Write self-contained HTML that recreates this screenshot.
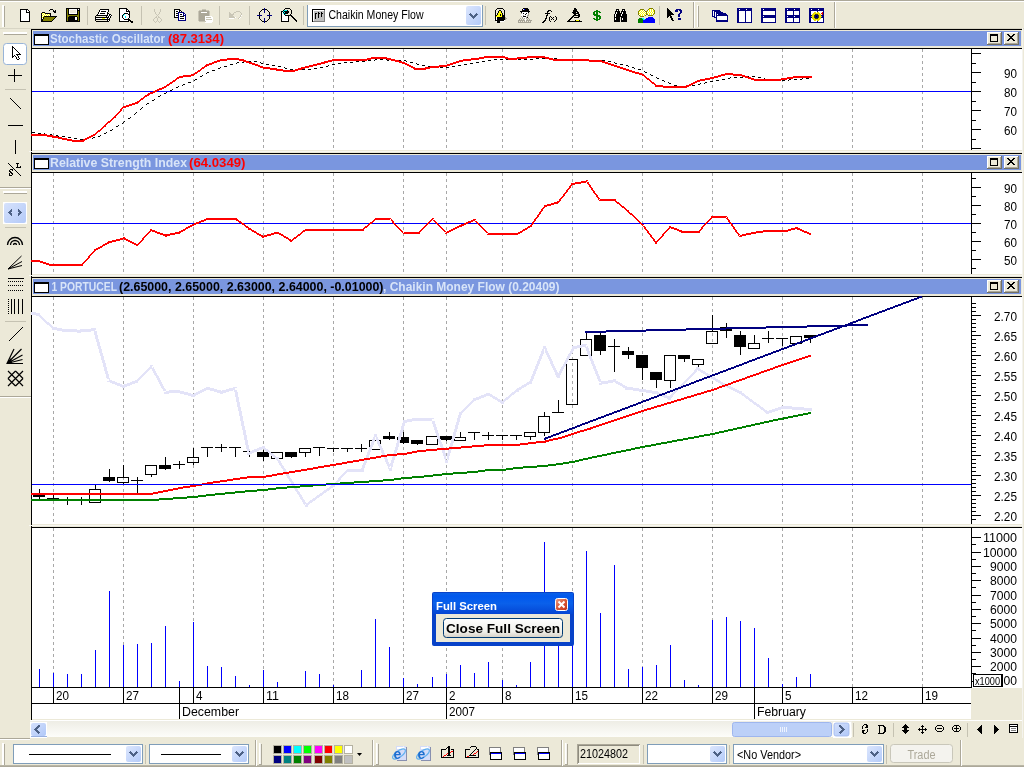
<!DOCTYPE html>
<html><head><meta charset="utf-8"><title>Chart</title>
<style>html,body{margin:0;padding:0;width:1024px;height:768px;overflow:hidden;background:#ECE9D8;}
svg{display:block;will-change:transform;font-family:"Liberation Sans",sans-serif;}</style></head>
<body><svg width="1024" height="768" viewBox="0 0 1024 768">
<rect x="0" y="0" width="1024" height="768" fill="#ECE9D8" />
<rect x="0" y="0" width="1024" height="1" fill="#ACA899"/>
<rect x="0" y="1" width="1024" height="1" fill="#FFFFFF"/>
<rect x="2" y="5" width="1" height="22" fill="#FFFFFF"/>
<rect x="3" y="5" width="1" height="22" fill="#FFFFFF"/>
<rect x="4" y="6" width="1" height="21" fill="#ACA899"/>
<rect x="834" y="2" width="1" height="26" fill="#ACA899"/>
<rect x="835" y="2" width="1" height="26" fill="#FFFFFF"/>
<rect x="693" y="2" width="1" height="26" fill="#ACA899"/>
<rect x="694" y="2" width="1" height="26" fill="#FFFFFF"/>
<rect x="697" y="5" width="1" height="22" fill="#FFFFFF"/>
<rect x="698" y="6" width="1" height="21" fill="#ACA899"/>
<rect x="87" y="6" width="1" height="19" fill="#C5C2B2"/>
<rect x="141" y="6" width="1" height="19" fill="#C5C2B2"/>
<rect x="219" y="6" width="1" height="19" fill="#C5C2B2"/>
<rect x="249" y="6" width="1" height="19" fill="#C5C2B2"/>
<rect x="303" y="6" width="1" height="19" fill="#C5C2B2"/>
<rect x="485" y="6" width="1" height="19" fill="#C5C2B2"/>
<rect x="659" y="6" width="1" height="19" fill="#C5C2B2"/>
<rect x="0" y="28" width="1024" height="1" fill="#D8D5C5"/>
<rect x="3" y="32" width="24" height="1" fill="#FFFFFF"/>
<rect x="3" y="33" width="24" height="1" fill="#FFFFFF"/>
<rect x="4" y="34" width="23" height="1" fill="#ACA899"/>
<rect x="0" y="187" width="31" height="1" fill="#ACA899"/>
<rect x="0" y="188" width="31" height="1" fill="#FFFFFF"/>
<rect x="3" y="191" width="24" height="1" fill="#FFFFFF"/>
<rect x="3" y="192" width="24" height="1" fill="#FFFFFF"/>
<rect x="4" y="193" width="23" height="1" fill="#ACA899"/>
<rect x="5" y="89" width="21" height="1" fill="#C5C2B2"/>
<rect x="5" y="227" width="21" height="1" fill="#C5C2B2"/>
<rect x="5" y="321" width="21" height="1" fill="#C5C2B2"/>
<rect x="0" y="396" width="31" height="1" fill="#ACA899"/>
<rect x="0" y="397" width="31" height="1" fill="#FFFFFF"/>
<rect x="32" y="29" width="990" height="690" fill="#FFFFFF" />
<rect x="31" y="29" width="1" height="691" fill="#000000"/>
<rect x="1022" y="28" width="1" height="710" fill="#F4F3EE"/>
<rect x="31" y="29" width="991" height="1" fill="#000000"/>
<rect x="32" y="30" width="990" height="19" fill="#ECE9D8" />
<rect x="33" y="31" width="988" height="15" fill="#7A96DF" />
<rect x="32" y="48" width="990" height="1" fill="#000000"/>
<rect x="34" y="34" width="15" height="11" fill="#000000" />
<rect x="35" y="36" width="13" height="8" fill="#FFFFFF" />
<rect x="987" y="32" width="15" height="13" fill="#716F64" />
<rect x="987" y="32" width="14" height="12" fill="#FFFFFF" />
<rect x="988" y="33" width="13" height="11" fill="#ACA899" />
<rect x="988" y="33" width="12" height="10" fill="#ECE9D8" />
<rect x="990" y="34" width="8" height="8" fill="#000000" />
<rect x="991" y="36" width="6" height="5" fill="#ECE9D8" />
<rect x="1004" y="32" width="15" height="13" fill="#716F64" />
<rect x="1004" y="32" width="14" height="12" fill="#FFFFFF" />
<rect x="1005" y="33" width="13" height="11" fill="#ACA899" />
<rect x="1005" y="33" width="12" height="10" fill="#ECE9D8" />
<rect x="1007" y="34" width="1" height="1" fill="#000000" />
<rect x="1008" y="34" width="1" height="1" fill="#000000" />
<rect x="1013" y="34" width="1" height="1" fill="#000000" />
<rect x="1014" y="34" width="1" height="1" fill="#000000" />
<rect x="1008" y="35" width="1" height="1" fill="#000000" />
<rect x="1009" y="35" width="1" height="1" fill="#000000" />
<rect x="1012" y="35" width="1" height="1" fill="#000000" />
<rect x="1013" y="35" width="1" height="1" fill="#000000" />
<rect x="1009" y="36" width="1" height="1" fill="#000000" />
<rect x="1010" y="36" width="1" height="1" fill="#000000" />
<rect x="1011" y="36" width="1" height="1" fill="#000000" />
<rect x="1012" y="36" width="1" height="1" fill="#000000" />
<rect x="1010" y="37" width="1" height="1" fill="#000000" />
<rect x="1011" y="37" width="1" height="1" fill="#000000" />
<rect x="1009" y="38" width="1" height="1" fill="#000000" />
<rect x="1010" y="38" width="1" height="1" fill="#000000" />
<rect x="1011" y="38" width="1" height="1" fill="#000000" />
<rect x="1012" y="38" width="1" height="1" fill="#000000" />
<rect x="1008" y="39" width="1" height="1" fill="#000000" />
<rect x="1009" y="39" width="1" height="1" fill="#000000" />
<rect x="1012" y="39" width="1" height="1" fill="#000000" />
<rect x="1013" y="39" width="1" height="1" fill="#000000" />
<rect x="1007" y="40" width="1" height="1" fill="#000000" />
<rect x="1008" y="40" width="1" height="1" fill="#000000" />
<rect x="1013" y="40" width="1" height="1" fill="#000000" />
<rect x="1014" y="40" width="1" height="1" fill="#000000" />
<text x="50" y="43" font-size="12.5" fill="#D8E4F8" font-weight="bold" text-anchor="start" textLength="115" lengthAdjust="spacingAndGlyphs" >Stochastic Oscillator</text>
<text x="168" y="43" font-size="12.5" fill="#FF0000" font-weight="bold" text-anchor="start" textLength="56" lengthAdjust="spacingAndGlyphs" >(87.3134)</text>
<rect x="32" y="150" width="990" height="3" fill="#ECE9D8" />
<rect x="29" y="151" width="993" height="1" fill="#F7F6F1"/>
<rect x="31" y="153" width="991" height="1" fill="#000000"/>
<rect x="32" y="154" width="990" height="19" fill="#ECE9D8" />
<rect x="33" y="155" width="988" height="15" fill="#7A96DF" />
<rect x="32" y="172" width="990" height="1" fill="#000000"/>
<rect x="34" y="158" width="15" height="11" fill="#000000" />
<rect x="35" y="160" width="13" height="8" fill="#FFFFFF" />
<rect x="987" y="156" width="15" height="13" fill="#716F64" />
<rect x="987" y="156" width="14" height="12" fill="#FFFFFF" />
<rect x="988" y="157" width="13" height="11" fill="#ACA899" />
<rect x="988" y="157" width="12" height="10" fill="#ECE9D8" />
<rect x="990" y="158" width="8" height="8" fill="#000000" />
<rect x="991" y="160" width="6" height="5" fill="#ECE9D8" />
<rect x="1004" y="156" width="15" height="13" fill="#716F64" />
<rect x="1004" y="156" width="14" height="12" fill="#FFFFFF" />
<rect x="1005" y="157" width="13" height="11" fill="#ACA899" />
<rect x="1005" y="157" width="12" height="10" fill="#ECE9D8" />
<rect x="1007" y="158" width="1" height="1" fill="#000000" />
<rect x="1008" y="158" width="1" height="1" fill="#000000" />
<rect x="1013" y="158" width="1" height="1" fill="#000000" />
<rect x="1014" y="158" width="1" height="1" fill="#000000" />
<rect x="1008" y="159" width="1" height="1" fill="#000000" />
<rect x="1009" y="159" width="1" height="1" fill="#000000" />
<rect x="1012" y="159" width="1" height="1" fill="#000000" />
<rect x="1013" y="159" width="1" height="1" fill="#000000" />
<rect x="1009" y="160" width="1" height="1" fill="#000000" />
<rect x="1010" y="160" width="1" height="1" fill="#000000" />
<rect x="1011" y="160" width="1" height="1" fill="#000000" />
<rect x="1012" y="160" width="1" height="1" fill="#000000" />
<rect x="1010" y="161" width="1" height="1" fill="#000000" />
<rect x="1011" y="161" width="1" height="1" fill="#000000" />
<rect x="1009" y="162" width="1" height="1" fill="#000000" />
<rect x="1010" y="162" width="1" height="1" fill="#000000" />
<rect x="1011" y="162" width="1" height="1" fill="#000000" />
<rect x="1012" y="162" width="1" height="1" fill="#000000" />
<rect x="1008" y="163" width="1" height="1" fill="#000000" />
<rect x="1009" y="163" width="1" height="1" fill="#000000" />
<rect x="1012" y="163" width="1" height="1" fill="#000000" />
<rect x="1013" y="163" width="1" height="1" fill="#000000" />
<rect x="1007" y="164" width="1" height="1" fill="#000000" />
<rect x="1008" y="164" width="1" height="1" fill="#000000" />
<rect x="1013" y="164" width="1" height="1" fill="#000000" />
<rect x="1014" y="164" width="1" height="1" fill="#000000" />
<text x="50" y="167" font-size="12.5" fill="#D8E4F8" font-weight="bold" text-anchor="start" textLength="137" lengthAdjust="spacingAndGlyphs" >Relative Strength Index</text>
<text x="189" y="167" font-size="12.5" fill="#FF0000" font-weight="bold" text-anchor="start" textLength="56.5" lengthAdjust="spacingAndGlyphs" >(64.0349)</text>
<rect x="32" y="274" width="990" height="3" fill="#ECE9D8" />
<rect x="29" y="275" width="993" height="1" fill="#F7F6F1"/>
<rect x="31" y="277" width="991" height="1" fill="#000000"/>
<rect x="32" y="278" width="990" height="19" fill="#ECE9D8" />
<rect x="33" y="279" width="988" height="15" fill="#7A96DF" />
<rect x="32" y="296" width="990" height="1" fill="#000000"/>
<rect x="34" y="282" width="15" height="11" fill="#000000" />
<rect x="35" y="284" width="13" height="8" fill="#FFFFFF" />
<rect x="987" y="280" width="15" height="13" fill="#716F64" />
<rect x="987" y="280" width="14" height="12" fill="#FFFFFF" />
<rect x="988" y="281" width="13" height="11" fill="#ACA899" />
<rect x="988" y="281" width="12" height="10" fill="#ECE9D8" />
<rect x="990" y="282" width="8" height="8" fill="#000000" />
<rect x="991" y="284" width="6" height="5" fill="#ECE9D8" />
<rect x="1004" y="280" width="15" height="13" fill="#716F64" />
<rect x="1004" y="280" width="14" height="12" fill="#FFFFFF" />
<rect x="1005" y="281" width="13" height="11" fill="#ACA899" />
<rect x="1005" y="281" width="12" height="10" fill="#ECE9D8" />
<rect x="1007" y="282" width="1" height="1" fill="#000000" />
<rect x="1008" y="282" width="1" height="1" fill="#000000" />
<rect x="1013" y="282" width="1" height="1" fill="#000000" />
<rect x="1014" y="282" width="1" height="1" fill="#000000" />
<rect x="1008" y="283" width="1" height="1" fill="#000000" />
<rect x="1009" y="283" width="1" height="1" fill="#000000" />
<rect x="1012" y="283" width="1" height="1" fill="#000000" />
<rect x="1013" y="283" width="1" height="1" fill="#000000" />
<rect x="1009" y="284" width="1" height="1" fill="#000000" />
<rect x="1010" y="284" width="1" height="1" fill="#000000" />
<rect x="1011" y="284" width="1" height="1" fill="#000000" />
<rect x="1012" y="284" width="1" height="1" fill="#000000" />
<rect x="1010" y="285" width="1" height="1" fill="#000000" />
<rect x="1011" y="285" width="1" height="1" fill="#000000" />
<rect x="1009" y="286" width="1" height="1" fill="#000000" />
<rect x="1010" y="286" width="1" height="1" fill="#000000" />
<rect x="1011" y="286" width="1" height="1" fill="#000000" />
<rect x="1012" y="286" width="1" height="1" fill="#000000" />
<rect x="1008" y="287" width="1" height="1" fill="#000000" />
<rect x="1009" y="287" width="1" height="1" fill="#000000" />
<rect x="1012" y="287" width="1" height="1" fill="#000000" />
<rect x="1013" y="287" width="1" height="1" fill="#000000" />
<rect x="1007" y="288" width="1" height="1" fill="#000000" />
<rect x="1008" y="288" width="1" height="1" fill="#000000" />
<rect x="1013" y="288" width="1" height="1" fill="#000000" />
<rect x="1014" y="288" width="1" height="1" fill="#000000" />
<text x="51.5" y="291" font-size="12.5" fill="#D8E4F8" font-weight="bold" text-anchor="start" textLength="65.5" lengthAdjust="spacingAndGlyphs" >1 PORTUCEL</text>
<text x="119" y="291" font-size="12.5" fill="#000000" font-weight="bold" text-anchor="start" textLength="264.5" lengthAdjust="spacingAndGlyphs" >(2.65000, 2.65000, 2.63000, 2.64000, -0.01000)</text>
<text x="383" y="291" font-size="12.5" fill="#D8E4F8" font-weight="bold" text-anchor="start" textLength="176.5" lengthAdjust="spacingAndGlyphs" >, Chaikin Money Flow (0.20409)</text>
<rect x="32" y="524" width="990" height="3" fill="#ECE9D8" />
<rect x="29" y="525" width="993" height="1" fill="#F7F6F1"/>
<rect x="31" y="527" width="991" height="1" fill="#000000"/>
<line x1="53.5" y1="49" x2="53.5" y2="150" stroke="#A8A8A8" stroke-width="1" stroke-dasharray="3,3"/>
<line x1="123.5" y1="49" x2="123.5" y2="150" stroke="#A8A8A8" stroke-width="1" stroke-dasharray="3,3"/>
<line x1="193.5" y1="49" x2="193.5" y2="150" stroke="#A8A8A8" stroke-width="1" stroke-dasharray="3,3"/>
<line x1="263.5" y1="49" x2="263.5" y2="150" stroke="#A8A8A8" stroke-width="1" stroke-dasharray="3,3"/>
<line x1="333.5" y1="49" x2="333.5" y2="150" stroke="#A8A8A8" stroke-width="1" stroke-dasharray="3,3"/>
<line x1="403.5" y1="49" x2="403.5" y2="150" stroke="#A8A8A8" stroke-width="1" stroke-dasharray="3,3"/>
<line x1="446.5" y1="49" x2="446.5" y2="150" stroke="#A8A8A8" stroke-width="1" stroke-dasharray="3,3"/>
<line x1="502.5" y1="49" x2="502.5" y2="150" stroke="#A8A8A8" stroke-width="1" stroke-dasharray="3,3"/>
<line x1="572.5" y1="49" x2="572.5" y2="150" stroke="#A8A8A8" stroke-width="1" stroke-dasharray="3,3"/>
<line x1="642.5" y1="49" x2="642.5" y2="150" stroke="#A8A8A8" stroke-width="1" stroke-dasharray="3,3"/>
<line x1="712.5" y1="49" x2="712.5" y2="150" stroke="#A8A8A8" stroke-width="1" stroke-dasharray="3,3"/>
<line x1="782.5" y1="49" x2="782.5" y2="150" stroke="#A8A8A8" stroke-width="1" stroke-dasharray="3,3"/>
<line x1="852.5" y1="49" x2="852.5" y2="150" stroke="#A8A8A8" stroke-width="1" stroke-dasharray="3,3"/>
<line x1="922.5" y1="49" x2="922.5" y2="150" stroke="#A8A8A8" stroke-width="1" stroke-dasharray="3,3"/>
<line x1="53.5" y1="173" x2="53.5" y2="274" stroke="#A8A8A8" stroke-width="1" stroke-dasharray="3,3"/>
<line x1="123.5" y1="173" x2="123.5" y2="274" stroke="#A8A8A8" stroke-width="1" stroke-dasharray="3,3"/>
<line x1="193.5" y1="173" x2="193.5" y2="274" stroke="#A8A8A8" stroke-width="1" stroke-dasharray="3,3"/>
<line x1="263.5" y1="173" x2="263.5" y2="274" stroke="#A8A8A8" stroke-width="1" stroke-dasharray="3,3"/>
<line x1="333.5" y1="173" x2="333.5" y2="274" stroke="#A8A8A8" stroke-width="1" stroke-dasharray="3,3"/>
<line x1="403.5" y1="173" x2="403.5" y2="274" stroke="#A8A8A8" stroke-width="1" stroke-dasharray="3,3"/>
<line x1="446.5" y1="173" x2="446.5" y2="274" stroke="#A8A8A8" stroke-width="1" stroke-dasharray="3,3"/>
<line x1="502.5" y1="173" x2="502.5" y2="274" stroke="#A8A8A8" stroke-width="1" stroke-dasharray="3,3"/>
<line x1="572.5" y1="173" x2="572.5" y2="274" stroke="#A8A8A8" stroke-width="1" stroke-dasharray="3,3"/>
<line x1="642.5" y1="173" x2="642.5" y2="274" stroke="#A8A8A8" stroke-width="1" stroke-dasharray="3,3"/>
<line x1="712.5" y1="173" x2="712.5" y2="274" stroke="#A8A8A8" stroke-width="1" stroke-dasharray="3,3"/>
<line x1="782.5" y1="173" x2="782.5" y2="274" stroke="#A8A8A8" stroke-width="1" stroke-dasharray="3,3"/>
<line x1="852.5" y1="173" x2="852.5" y2="274" stroke="#A8A8A8" stroke-width="1" stroke-dasharray="3,3"/>
<line x1="922.5" y1="173" x2="922.5" y2="274" stroke="#A8A8A8" stroke-width="1" stroke-dasharray="3,3"/>
<line x1="53.5" y1="297" x2="53.5" y2="524" stroke="#A8A8A8" stroke-width="1" stroke-dasharray="3,3"/>
<line x1="123.5" y1="297" x2="123.5" y2="524" stroke="#A8A8A8" stroke-width="1" stroke-dasharray="3,3"/>
<line x1="193.5" y1="297" x2="193.5" y2="524" stroke="#A8A8A8" stroke-width="1" stroke-dasharray="3,3"/>
<line x1="263.5" y1="297" x2="263.5" y2="524" stroke="#A8A8A8" stroke-width="1" stroke-dasharray="3,3"/>
<line x1="333.5" y1="297" x2="333.5" y2="524" stroke="#A8A8A8" stroke-width="1" stroke-dasharray="3,3"/>
<line x1="403.5" y1="297" x2="403.5" y2="524" stroke="#A8A8A8" stroke-width="1" stroke-dasharray="3,3"/>
<line x1="446.5" y1="297" x2="446.5" y2="524" stroke="#A8A8A8" stroke-width="1" stroke-dasharray="3,3"/>
<line x1="502.5" y1="297" x2="502.5" y2="524" stroke="#A8A8A8" stroke-width="1" stroke-dasharray="3,3"/>
<line x1="572.5" y1="297" x2="572.5" y2="524" stroke="#A8A8A8" stroke-width="1" stroke-dasharray="3,3"/>
<line x1="642.5" y1="297" x2="642.5" y2="524" stroke="#A8A8A8" stroke-width="1" stroke-dasharray="3,3"/>
<line x1="712.5" y1="297" x2="712.5" y2="524" stroke="#A8A8A8" stroke-width="1" stroke-dasharray="3,3"/>
<line x1="782.5" y1="297" x2="782.5" y2="524" stroke="#A8A8A8" stroke-width="1" stroke-dasharray="3,3"/>
<line x1="852.5" y1="297" x2="852.5" y2="524" stroke="#A8A8A8" stroke-width="1" stroke-dasharray="3,3"/>
<line x1="922.5" y1="297" x2="922.5" y2="524" stroke="#A8A8A8" stroke-width="1" stroke-dasharray="3,3"/>
<line x1="53.5" y1="528" x2="53.5" y2="687" stroke="#A8A8A8" stroke-width="1" stroke-dasharray="3,3"/>
<line x1="123.5" y1="528" x2="123.5" y2="687" stroke="#A8A8A8" stroke-width="1" stroke-dasharray="3,3"/>
<line x1="193.5" y1="528" x2="193.5" y2="687" stroke="#A8A8A8" stroke-width="1" stroke-dasharray="3,3"/>
<line x1="263.5" y1="528" x2="263.5" y2="687" stroke="#A8A8A8" stroke-width="1" stroke-dasharray="3,3"/>
<line x1="333.5" y1="528" x2="333.5" y2="687" stroke="#A8A8A8" stroke-width="1" stroke-dasharray="3,3"/>
<line x1="403.5" y1="528" x2="403.5" y2="687" stroke="#A8A8A8" stroke-width="1" stroke-dasharray="3,3"/>
<line x1="446.5" y1="528" x2="446.5" y2="687" stroke="#A8A8A8" stroke-width="1" stroke-dasharray="3,3"/>
<line x1="502.5" y1="528" x2="502.5" y2="687" stroke="#A8A8A8" stroke-width="1" stroke-dasharray="3,3"/>
<line x1="572.5" y1="528" x2="572.5" y2="687" stroke="#A8A8A8" stroke-width="1" stroke-dasharray="3,3"/>
<line x1="642.5" y1="528" x2="642.5" y2="687" stroke="#A8A8A8" stroke-width="1" stroke-dasharray="3,3"/>
<line x1="712.5" y1="528" x2="712.5" y2="687" stroke="#A8A8A8" stroke-width="1" stroke-dasharray="3,3"/>
<line x1="782.5" y1="528" x2="782.5" y2="687" stroke="#A8A8A8" stroke-width="1" stroke-dasharray="3,3"/>
<line x1="852.5" y1="528" x2="852.5" y2="687" stroke="#A8A8A8" stroke-width="1" stroke-dasharray="3,3"/>
<line x1="922.5" y1="528" x2="922.5" y2="687" stroke="#A8A8A8" stroke-width="1" stroke-dasharray="3,3"/>
<rect x="971" y="49" width="1" height="101" fill="#000000"/>
<rect x="972" y="49" width="50" height="101" fill="#FFFFFF" />
<rect x="972" y="53" width="9" height="1" fill="#000000"/>
<rect x="972" y="63" width="4" height="1" fill="#000000"/>
<rect x="972" y="72" width="9" height="1" fill="#000000"/>
<rect x="972" y="82" width="4" height="1" fill="#000000"/>
<rect x="972" y="91" width="9" height="1" fill="#000000"/>
<rect x="972" y="101" width="4" height="1" fill="#000000"/>
<rect x="972" y="110" width="9" height="1" fill="#000000"/>
<rect x="972" y="120" width="4" height="1" fill="#000000"/>
<rect x="972" y="129" width="9" height="1" fill="#000000"/>
<rect x="972" y="139" width="4" height="1" fill="#000000"/>
<rect x="972" y="148" width="9" height="1" fill="#000000"/>
<text x="1017" y="78" font-size="12" fill="#000" font-weight="normal" text-anchor="end" textLength="13" lengthAdjust="spacingAndGlyphs" >90</text>
<text x="1017" y="97" font-size="12" fill="#000" font-weight="normal" text-anchor="end" textLength="13" lengthAdjust="spacingAndGlyphs" >80</text>
<text x="1017" y="116" font-size="12" fill="#000" font-weight="normal" text-anchor="end" textLength="13" lengthAdjust="spacingAndGlyphs" >70</text>
<text x="1017" y="135" font-size="12" fill="#000" font-weight="normal" text-anchor="end" textLength="13" lengthAdjust="spacingAndGlyphs" >60</text>
<rect x="971" y="173" width="1" height="101" fill="#000000"/>
<rect x="972" y="173" width="50" height="101" fill="#FFFFFF" />
<rect x="972" y="178" width="4" height="1" fill="#000000"/>
<rect x="972" y="187" width="9" height="1" fill="#000000"/>
<rect x="972" y="196" width="4" height="1" fill="#000000"/>
<rect x="972" y="205" width="9" height="1" fill="#000000"/>
<rect x="972" y="214" width="4" height="1" fill="#000000"/>
<rect x="972" y="223" width="9" height="1" fill="#000000"/>
<rect x="972" y="232" width="4" height="1" fill="#000000"/>
<rect x="972" y="241" width="9" height="1" fill="#000000"/>
<rect x="972" y="250" width="4" height="1" fill="#000000"/>
<rect x="972" y="259" width="9" height="1" fill="#000000"/>
<rect x="972" y="268" width="4" height="1" fill="#000000"/>
<text x="1017" y="193" font-size="12" fill="#000" font-weight="normal" text-anchor="end" textLength="13" lengthAdjust="spacingAndGlyphs" >90</text>
<text x="1017" y="211" font-size="12" fill="#000" font-weight="normal" text-anchor="end" textLength="13" lengthAdjust="spacingAndGlyphs" >80</text>
<text x="1017" y="229" font-size="12" fill="#000" font-weight="normal" text-anchor="end" textLength="13" lengthAdjust="spacingAndGlyphs" >70</text>
<text x="1017" y="247" font-size="12" fill="#000" font-weight="normal" text-anchor="end" textLength="13" lengthAdjust="spacingAndGlyphs" >60</text>
<text x="1017" y="265" font-size="12" fill="#000" font-weight="normal" text-anchor="end" textLength="13" lengthAdjust="spacingAndGlyphs" >50</text>
<rect x="971" y="297" width="1" height="227" fill="#000000"/>
<rect x="972" y="297" width="50" height="227" fill="#FFFFFF" />
<rect x="972" y="303" width="4" height="1" fill="#000000"/>
<rect x="972" y="307" width="4" height="1" fill="#000000"/>
<rect x="972" y="311" width="4" height="1" fill="#000000"/>
<rect x="972" y="315" width="9" height="1" fill="#000000"/>
<rect x="972" y="319" width="4" height="1" fill="#000000"/>
<rect x="972" y="323" width="4" height="1" fill="#000000"/>
<rect x="972" y="327" width="4" height="1" fill="#000000"/>
<rect x="972" y="331" width="4" height="1" fill="#000000"/>
<rect x="972" y="335" width="9" height="1" fill="#000000"/>
<rect x="972" y="339" width="4" height="1" fill="#000000"/>
<rect x="972" y="343" width="4" height="1" fill="#000000"/>
<rect x="972" y="347" width="4" height="1" fill="#000000"/>
<rect x="972" y="351" width="4" height="1" fill="#000000"/>
<rect x="972" y="355" width="9" height="1" fill="#000000"/>
<rect x="972" y="359" width="4" height="1" fill="#000000"/>
<rect x="972" y="363" width="4" height="1" fill="#000000"/>
<rect x="972" y="367" width="4" height="1" fill="#000000"/>
<rect x="972" y="371" width="4" height="1" fill="#000000"/>
<rect x="972" y="375" width="9" height="1" fill="#000000"/>
<rect x="972" y="379" width="4" height="1" fill="#000000"/>
<rect x="972" y="383" width="4" height="1" fill="#000000"/>
<rect x="972" y="387" width="4" height="1" fill="#000000"/>
<rect x="972" y="391" width="4" height="1" fill="#000000"/>
<rect x="972" y="395" width="9" height="1" fill="#000000"/>
<rect x="972" y="399" width="4" height="1" fill="#000000"/>
<rect x="972" y="403" width="4" height="1" fill="#000000"/>
<rect x="972" y="407" width="4" height="1" fill="#000000"/>
<rect x="972" y="411" width="4" height="1" fill="#000000"/>
<rect x="972" y="415" width="9" height="1" fill="#000000"/>
<rect x="972" y="419" width="4" height="1" fill="#000000"/>
<rect x="972" y="423" width="4" height="1" fill="#000000"/>
<rect x="972" y="427" width="4" height="1" fill="#000000"/>
<rect x="972" y="431" width="4" height="1" fill="#000000"/>
<rect x="972" y="435" width="9" height="1" fill="#000000"/>
<rect x="972" y="439" width="4" height="1" fill="#000000"/>
<rect x="972" y="443" width="4" height="1" fill="#000000"/>
<rect x="972" y="447" width="4" height="1" fill="#000000"/>
<rect x="972" y="451" width="4" height="1" fill="#000000"/>
<rect x="972" y="455" width="9" height="1" fill="#000000"/>
<rect x="972" y="459" width="4" height="1" fill="#000000"/>
<rect x="972" y="463" width="4" height="1" fill="#000000"/>
<rect x="972" y="467" width="4" height="1" fill="#000000"/>
<rect x="972" y="471" width="4" height="1" fill="#000000"/>
<rect x="972" y="475" width="9" height="1" fill="#000000"/>
<rect x="972" y="479" width="4" height="1" fill="#000000"/>
<rect x="972" y="483" width="4" height="1" fill="#000000"/>
<rect x="972" y="487" width="4" height="1" fill="#000000"/>
<rect x="972" y="491" width="4" height="1" fill="#000000"/>
<rect x="972" y="495" width="9" height="1" fill="#000000"/>
<rect x="972" y="499" width="4" height="1" fill="#000000"/>
<rect x="972" y="503" width="4" height="1" fill="#000000"/>
<rect x="972" y="507" width="4" height="1" fill="#000000"/>
<rect x="972" y="511" width="4" height="1" fill="#000000"/>
<rect x="972" y="515" width="9" height="1" fill="#000000"/>
<rect x="972" y="519" width="4" height="1" fill="#000000"/>
<text x="1017" y="321" font-size="12" fill="#000" font-weight="normal" text-anchor="end" textLength="23" lengthAdjust="spacingAndGlyphs" >2.70</text>
<text x="1017" y="341" font-size="12" fill="#000" font-weight="normal" text-anchor="end" textLength="23" lengthAdjust="spacingAndGlyphs" >2.65</text>
<text x="1017" y="361" font-size="12" fill="#000" font-weight="normal" text-anchor="end" textLength="23" lengthAdjust="spacingAndGlyphs" >2.60</text>
<text x="1017" y="381" font-size="12" fill="#000" font-weight="normal" text-anchor="end" textLength="23" lengthAdjust="spacingAndGlyphs" >2.55</text>
<text x="1017" y="401" font-size="12" fill="#000" font-weight="normal" text-anchor="end" textLength="23" lengthAdjust="spacingAndGlyphs" >2.50</text>
<text x="1017" y="421" font-size="12" fill="#000" font-weight="normal" text-anchor="end" textLength="23" lengthAdjust="spacingAndGlyphs" >2.45</text>
<text x="1017" y="441" font-size="12" fill="#000" font-weight="normal" text-anchor="end" textLength="23" lengthAdjust="spacingAndGlyphs" >2.40</text>
<text x="1017" y="461" font-size="12" fill="#000" font-weight="normal" text-anchor="end" textLength="23" lengthAdjust="spacingAndGlyphs" >2.35</text>
<text x="1017" y="481" font-size="12" fill="#000" font-weight="normal" text-anchor="end" textLength="23" lengthAdjust="spacingAndGlyphs" >2.30</text>
<text x="1017" y="501" font-size="12" fill="#000" font-weight="normal" text-anchor="end" textLength="23" lengthAdjust="spacingAndGlyphs" >2.25</text>
<text x="1017" y="521" font-size="12" fill="#000" font-weight="normal" text-anchor="end" textLength="23" lengthAdjust="spacingAndGlyphs" >2.20</text>
<rect x="971" y="528" width="1" height="160" fill="#000000"/>
<rect x="972" y="528" width="50" height="160" fill="#FFFFFF" />
<rect x="972" y="537" width="9" height="1" fill="#000000"/>
<rect x="972" y="544" width="4" height="1" fill="#000000"/>
<rect x="972" y="552" width="9" height="1" fill="#000000"/>
<rect x="972" y="559" width="4" height="1" fill="#000000"/>
<rect x="972" y="566" width="9" height="1" fill="#000000"/>
<rect x="972" y="573" width="4" height="1" fill="#000000"/>
<rect x="972" y="580" width="9" height="1" fill="#000000"/>
<rect x="972" y="587" width="4" height="1" fill="#000000"/>
<rect x="972" y="595" width="9" height="1" fill="#000000"/>
<rect x="972" y="602" width="4" height="1" fill="#000000"/>
<rect x="972" y="609" width="9" height="1" fill="#000000"/>
<rect x="972" y="616" width="4" height="1" fill="#000000"/>
<rect x="972" y="623" width="9" height="1" fill="#000000"/>
<rect x="972" y="630" width="4" height="1" fill="#000000"/>
<rect x="972" y="638" width="9" height="1" fill="#000000"/>
<rect x="972" y="645" width="4" height="1" fill="#000000"/>
<rect x="972" y="652" width="9" height="1" fill="#000000"/>
<rect x="972" y="659" width="4" height="1" fill="#000000"/>
<rect x="972" y="666" width="9" height="1" fill="#000000"/>
<rect x="972" y="673" width="4" height="1" fill="#000000"/>
<rect x="972" y="681" width="9" height="1" fill="#000000"/>
<text x="1017" y="541.5" font-size="12" fill="#000" font-weight="normal" text-anchor="end" textLength="34" lengthAdjust="spacingAndGlyphs" >11000</text>
<text x="1017" y="556.5" font-size="12" fill="#000" font-weight="normal" text-anchor="end" textLength="34" lengthAdjust="spacingAndGlyphs" >10000</text>
<text x="1017" y="570.5" font-size="12" fill="#000" font-weight="normal" text-anchor="end" textLength="27" lengthAdjust="spacingAndGlyphs" >9000</text>
<text x="1017" y="584.5" font-size="12" fill="#000" font-weight="normal" text-anchor="end" textLength="27" lengthAdjust="spacingAndGlyphs" >8000</text>
<text x="1017" y="599.5" font-size="12" fill="#000" font-weight="normal" text-anchor="end" textLength="27" lengthAdjust="spacingAndGlyphs" >7000</text>
<text x="1017" y="613.5" font-size="12" fill="#000" font-weight="normal" text-anchor="end" textLength="27" lengthAdjust="spacingAndGlyphs" >6000</text>
<text x="1017" y="627.5" font-size="12" fill="#000" font-weight="normal" text-anchor="end" textLength="27" lengthAdjust="spacingAndGlyphs" >5000</text>
<text x="1017" y="642.5" font-size="12" fill="#000" font-weight="normal" text-anchor="end" textLength="27" lengthAdjust="spacingAndGlyphs" >4000</text>
<text x="1017" y="656.5" font-size="12" fill="#000" font-weight="normal" text-anchor="end" textLength="27" lengthAdjust="spacingAndGlyphs" >3000</text>
<text x="1017" y="670.5" font-size="12" fill="#000" font-weight="normal" text-anchor="end" textLength="27" lengthAdjust="spacingAndGlyphs" >2000</text>
<text x="1017" y="685" font-size="12" fill="#000" font-weight="normal" text-anchor="end" textLength="27" lengthAdjust="spacingAndGlyphs" >1000</text>
<rect x="973" y="674" width="29" height="13" fill="#000000" />
<rect x="974" y="675" width="27" height="11" fill="#FFFFFF" />
<text x="987.5" y="684.5" font-size="10" fill="#000" font-weight="normal" text-anchor="middle" textLength="25" lengthAdjust="spacingAndGlyphs" >x1000</text>
<rect x="1002" y="674" width="1" height="13" fill="#000000"/>
<rect x="32" y="687" width="939" height="1" fill="#000000"/>
<rect x="32" y="703" width="939" height="1" fill="#000000"/>
<rect x="53" y="688" width="1" height="15" fill="#000000"/>
<text x="56" y="700" font-size="12" fill="#000" font-weight="normal" text-anchor="start" textLength="13.0" lengthAdjust="spacingAndGlyphs" >20</text>
<rect x="123" y="688" width="1" height="15" fill="#000000"/>
<text x="126" y="700" font-size="12" fill="#000" font-weight="normal" text-anchor="start" textLength="13.0" lengthAdjust="spacingAndGlyphs" >27</text>
<rect x="193" y="688" width="1" height="15" fill="#000000"/>
<text x="196" y="700" font-size="12" fill="#000" font-weight="normal" text-anchor="start" textLength="6.5" lengthAdjust="spacingAndGlyphs" >4</text>
<rect x="263" y="688" width="1" height="15" fill="#000000"/>
<text x="266" y="700" font-size="12" fill="#000" font-weight="normal" text-anchor="start" textLength="13.0" lengthAdjust="spacingAndGlyphs" >11</text>
<rect x="333" y="688" width="1" height="15" fill="#000000"/>
<text x="336" y="700" font-size="12" fill="#000" font-weight="normal" text-anchor="start" textLength="13.0" lengthAdjust="spacingAndGlyphs" >18</text>
<rect x="403" y="688" width="1" height="15" fill="#000000"/>
<text x="406" y="700" font-size="12" fill="#000" font-weight="normal" text-anchor="start" textLength="13.0" lengthAdjust="spacingAndGlyphs" >27</text>
<rect x="446" y="688" width="1" height="15" fill="#000000"/>
<text x="449" y="700" font-size="12" fill="#000" font-weight="normal" text-anchor="start" textLength="6.5" lengthAdjust="spacingAndGlyphs" >2</text>
<rect x="502" y="688" width="1" height="15" fill="#000000"/>
<text x="505" y="700" font-size="12" fill="#000" font-weight="normal" text-anchor="start" textLength="6.5" lengthAdjust="spacingAndGlyphs" >8</text>
<rect x="572" y="688" width="1" height="15" fill="#000000"/>
<text x="575" y="700" font-size="12" fill="#000" font-weight="normal" text-anchor="start" textLength="13.0" lengthAdjust="spacingAndGlyphs" >15</text>
<rect x="642" y="688" width="1" height="15" fill="#000000"/>
<text x="645" y="700" font-size="12" fill="#000" font-weight="normal" text-anchor="start" textLength="13.0" lengthAdjust="spacingAndGlyphs" >22</text>
<rect x="712" y="688" width="1" height="15" fill="#000000"/>
<text x="715" y="700" font-size="12" fill="#000" font-weight="normal" text-anchor="start" textLength="13.0" lengthAdjust="spacingAndGlyphs" >29</text>
<rect x="782" y="688" width="1" height="15" fill="#000000"/>
<text x="785" y="700" font-size="12" fill="#000" font-weight="normal" text-anchor="start" textLength="6.5" lengthAdjust="spacingAndGlyphs" >5</text>
<rect x="852" y="688" width="1" height="15" fill="#000000"/>
<text x="855" y="700" font-size="12" fill="#000" font-weight="normal" text-anchor="start" textLength="13.0" lengthAdjust="spacingAndGlyphs" >12</text>
<rect x="922" y="688" width="1" height="15" fill="#000000"/>
<text x="925" y="700" font-size="12" fill="#000" font-weight="normal" text-anchor="start" textLength="13.0" lengthAdjust="spacingAndGlyphs" >19</text>
<rect x="179" y="688" width="1" height="31" fill="#000000"/>
<text x="182" y="716" font-size="12" fill="#000" font-weight="normal" text-anchor="start" textLength="57" lengthAdjust="spacingAndGlyphs" >December</text>
<rect x="446" y="688" width="1" height="31" fill="#000000"/>
<text x="449" y="716" font-size="12" fill="#000" font-weight="normal" text-anchor="start" textLength="26" lengthAdjust="spacingAndGlyphs" >2007</text>
<rect x="754" y="688" width="1" height="31" fill="#000000"/>
<text x="757" y="716" font-size="12" fill="#000" font-weight="normal" text-anchor="start" textLength="49" lengthAdjust="spacingAndGlyphs" >February</text>
<rect x="971" y="688" width="51" height="31" fill="#ECE9D8" />
<rect x="971" y="528" width="1" height="160" fill="#000000"/>
<defs><linearGradient id="trk" x1="0" y1="0" x2="0" y2="1"><stop offset="0" stop-color="#EEEDE5"/><stop offset="1" stop-color="#FDFDFA"/></linearGradient></defs>
<rect x="30" y="721" width="822" height="16" fill="url(#trk)" />
<rect x="30" y="720" width="992" height="1" fill="#FFFFFF"/>
<rect x="0" y="738" width="30" height="1" fill="#ACA899"/>
<rect x="0" y="739" width="30" height="1" fill="#FFFFFF"/>
<defs><linearGradient id="sbb" x1="0" y1="0" x2="1" y2="1"><stop offset="0" stop-color="#D4E0FC"/><stop offset="1" stop-color="#B0C8F8"/></linearGradient></defs>
<rect x="30" y="722" width="17" height="16" fill="#FFFFFF" />
<rect x="31" y="723" width="15" height="13" rx="2" fill="url(#sbb)"/>
<rect x="31" y="736" width="16" height="1" fill="#98B0E0"/>
<path d="M39.5,725.5 L35.5,729.5 L39.5,733.5" stroke="#4D6185" stroke-width="2" fill="none" shape-rendering="crispEdges"/>
<rect x="732.5" y="722.5" width="99" height="14" rx="2" fill="#BCD0F8" stroke="#9EB6EE"/>
<rect x="780" y="727" width="1" height="5" fill="#EEF3FE"/>
<rect x="782" y="727" width="1" height="5" fill="#EEF3FE"/>
<rect x="784" y="727" width="1" height="5" fill="#EEF3FE"/>
<rect x="786" y="727" width="1" height="5" fill="#EEF3FE"/>
<rect x="833" y="722" width="18" height="16" fill="#FFFFFF" />
<rect x="834" y="723" width="15" height="13" rx="2" fill="url(#sbb)" stroke="#9EB6EE" stroke-width="0.8"/>
<path d="M839.5,725.5 L843.5,729.5 L839.5,733.5" stroke="#4D6185" stroke-width="2" fill="none" shape-rendering="crispEdges"/>
<rect x="0" y="765" width="1024" height="1" fill="#B9B6A6"/>
<rect x="0" y="766" width="1024" height="1" fill="#ACA899"/>
<rect x="0" y="767" width="1024" height="1" fill="#FFFFFF"/>
<rect x="2" y="743" width="1" height="22" fill="#FFFFFF"/>
<rect x="3" y="743" width="1" height="22" fill="#FFFFFF"/>
<rect x="4" y="744" width="1" height="21" fill="#ACA899"/>
<defs><linearGradient id="cbg" x1="0" y1="0" x2="1" y2="1"><stop offset="0" stop-color="#DCE6FD"/><stop offset="1" stop-color="#B4CBF9"/></linearGradient></defs>
<rect x="13" y="744" width="130" height="20" fill="#7F9DB9" />
<rect x="14" y="745" width="128" height="18" fill="#FFFFFF" />
<rect x="126" y="746" width="15" height="16" rx="2" fill="url(#cbg)"/>
<rect x="130" y="751" width="1" height="1" fill="#4D6185"/>
<rect x="136" y="751" width="1" height="1" fill="#4D6185"/>
<rect x="129" y="752" width="1" height="1" fill="#4D6185"/>
<rect x="130" y="752" width="1" height="1" fill="#4D6185"/>
<rect x="131" y="752" width="1" height="1" fill="#4D6185"/>
<rect x="135" y="752" width="1" height="1" fill="#4D6185"/>
<rect x="136" y="752" width="1" height="1" fill="#4D6185"/>
<rect x="137" y="752" width="1" height="1" fill="#4D6185"/>
<rect x="130" y="753" width="1" height="1" fill="#4D6185"/>
<rect x="131" y="753" width="1" height="1" fill="#4D6185"/>
<rect x="132" y="753" width="1" height="1" fill="#4D6185"/>
<rect x="134" y="753" width="1" height="1" fill="#4D6185"/>
<rect x="135" y="753" width="1" height="1" fill="#4D6185"/>
<rect x="136" y="753" width="1" height="1" fill="#4D6185"/>
<rect x="131" y="754" width="1" height="1" fill="#4D6185"/>
<rect x="132" y="754" width="1" height="1" fill="#4D6185"/>
<rect x="133" y="754" width="1" height="1" fill="#4D6185"/>
<rect x="134" y="754" width="1" height="1" fill="#4D6185"/>
<rect x="135" y="754" width="1" height="1" fill="#4D6185"/>
<rect x="132" y="755" width="1" height="1" fill="#4D6185"/>
<rect x="133" y="755" width="1" height="1" fill="#4D6185"/>
<rect x="134" y="755" width="1" height="1" fill="#4D6185"/>
<rect x="133" y="756" width="1" height="1" fill="#4D6185"/>
<rect x="29" y="754" width="82" height="1" fill="#000000"/>
<rect x="145" y="745" width="1" height="19" fill="#C5C2B2"/>
<rect x="149" y="744" width="100" height="20" fill="#7F9DB9" />
<rect x="150" y="745" width="98" height="18" fill="#FFFFFF" />
<rect x="232" y="746" width="15" height="16" rx="2" fill="url(#cbg)"/>
<rect x="236" y="751" width="1" height="1" fill="#4D6185"/>
<rect x="242" y="751" width="1" height="1" fill="#4D6185"/>
<rect x="235" y="752" width="1" height="1" fill="#4D6185"/>
<rect x="236" y="752" width="1" height="1" fill="#4D6185"/>
<rect x="237" y="752" width="1" height="1" fill="#4D6185"/>
<rect x="241" y="752" width="1" height="1" fill="#4D6185"/>
<rect x="242" y="752" width="1" height="1" fill="#4D6185"/>
<rect x="243" y="752" width="1" height="1" fill="#4D6185"/>
<rect x="236" y="753" width="1" height="1" fill="#4D6185"/>
<rect x="237" y="753" width="1" height="1" fill="#4D6185"/>
<rect x="238" y="753" width="1" height="1" fill="#4D6185"/>
<rect x="240" y="753" width="1" height="1" fill="#4D6185"/>
<rect x="241" y="753" width="1" height="1" fill="#4D6185"/>
<rect x="242" y="753" width="1" height="1" fill="#4D6185"/>
<rect x="237" y="754" width="1" height="1" fill="#4D6185"/>
<rect x="238" y="754" width="1" height="1" fill="#4D6185"/>
<rect x="239" y="754" width="1" height="1" fill="#4D6185"/>
<rect x="240" y="754" width="1" height="1" fill="#4D6185"/>
<rect x="241" y="754" width="1" height="1" fill="#4D6185"/>
<rect x="238" y="755" width="1" height="1" fill="#4D6185"/>
<rect x="239" y="755" width="1" height="1" fill="#4D6185"/>
<rect x="240" y="755" width="1" height="1" fill="#4D6185"/>
<rect x="239" y="756" width="1" height="1" fill="#4D6185"/>
<rect x="161" y="754" width="60" height="1" fill="#000000"/>
<rect x="255" y="740" width="1" height="26" fill="#ACA899"/>
<rect x="256" y="740" width="1" height="26" fill="#FFFFFF"/>
<rect x="259" y="743" width="1" height="22" fill="#FFFFFF"/>
<rect x="260" y="743" width="1" height="22" fill="#F4F3EE"/>
<rect x="261" y="744" width="1" height="21" fill="#ACA899"/>
<rect x="259" y="764" width="3" height="1" fill="#ACA899"/>
<rect x="273" y="745" width="9" height="9" fill="#B5B2A2" />
<rect x="274" y="746" width="7" height="7" fill="#000000" />
<rect x="273" y="755" width="9" height="9" fill="#B5B2A2" />
<rect x="274" y="756" width="7" height="7" fill="#000080" />
<rect x="283" y="745" width="9" height="9" fill="#B5B2A2" />
<rect x="284" y="746" width="7" height="7" fill="#0000FF" />
<rect x="283" y="755" width="9" height="9" fill="#B5B2A2" />
<rect x="284" y="756" width="7" height="7" fill="#008080" />
<rect x="293" y="745" width="9" height="9" fill="#B5B2A2" />
<rect x="294" y="746" width="7" height="7" fill="#00FFFF" />
<rect x="293" y="755" width="9" height="9" fill="#B5B2A2" />
<rect x="294" y="756" width="7" height="7" fill="#008000" />
<rect x="303" y="745" width="9" height="9" fill="#B5B2A2" />
<rect x="304" y="746" width="7" height="7" fill="#00FF00" />
<rect x="303" y="755" width="9" height="9" fill="#B5B2A2" />
<rect x="304" y="756" width="7" height="7" fill="#800080" />
<rect x="314" y="745" width="9" height="9" fill="#B5B2A2" />
<rect x="315" y="746" width="7" height="7" fill="#FF00FF" />
<rect x="314" y="755" width="9" height="9" fill="#B5B2A2" />
<rect x="315" y="756" width="7" height="7" fill="#800000" />
<rect x="324" y="745" width="9" height="9" fill="#B5B2A2" />
<rect x="325" y="746" width="7" height="7" fill="#FF0000" />
<rect x="324" y="755" width="9" height="9" fill="#B5B2A2" />
<rect x="325" y="756" width="7" height="7" fill="#808000" />
<rect x="334" y="745" width="9" height="9" fill="#B5B2A2" />
<rect x="335" y="746" width="7" height="7" fill="#FFFF00" />
<rect x="334" y="755" width="9" height="9" fill="#B5B2A2" />
<rect x="335" y="756" width="7" height="7" fill="#808080" />
<rect x="344" y="745" width="9" height="9" fill="#B5B2A2" />
<rect x="345" y="746" width="7" height="7" fill="#FFFFFF" />
<rect x="344" y="755" width="9" height="9" fill="#B5B2A2" />
<rect x="345" y="756" width="7" height="7" fill="#C0C0C0" />
<rect x="323.5" y="744.5" width="9" height="9" fill="none" stroke="#FFFFFF" stroke-width="1" stroke-dasharray="1,1"/>
<path d="M357,753 L362,753 L359.5,756 Z" fill="#000"/>
<rect x="372" y="740" width="1" height="26" fill="#ACA899"/>
<rect x="373" y="740" width="1" height="26" fill="#FFFFFF"/>
<rect x="376" y="743" width="1" height="22" fill="#FFFFFF"/>
<rect x="377" y="743" width="1" height="22" fill="#F4F3EE"/>
<rect x="378" y="744" width="1" height="21" fill="#ACA899"/>
<rect x="376" y="764" width="3" height="1" fill="#ACA899"/>
<rect x="561" y="740" width="1" height="26" fill="#ACA899"/>
<rect x="562" y="740" width="1" height="26" fill="#FFFFFF"/>
<rect x="565" y="743" width="1" height="22" fill="#FFFFFF"/>
<rect x="566" y="743" width="1" height="22" fill="#F4F3EE"/>
<rect x="567" y="744" width="1" height="21" fill="#ACA899"/>
<rect x="565" y="764" width="3" height="1" fill="#ACA899"/>
<rect x="577" y="744" width="63" height="20" fill="#ACA899" />
<rect x="578" y="745" width="62" height="19" fill="#FFFFFF" />
<rect x="578" y="745" width="61" height="18" fill="#8E8B7E" />
<rect x="579" y="746" width="60" height="17" fill="#ECE9D8" />
<text x="580" y="758" font-size="12" fill="#000" font-weight="normal" text-anchor="start" textLength="48" lengthAdjust="spacingAndGlyphs" >21024802</text>
<rect x="643" y="745" width="1" height="19" fill="#C5C2B2"/>
<rect x="647" y="744" width="80" height="20" fill="#7F9DB9" />
<rect x="648" y="745" width="78" height="18" fill="#FFFFFF" />
<rect x="710" y="746" width="15" height="16" rx="2" fill="url(#cbg)"/>
<rect x="714" y="751" width="1" height="1" fill="#4D6185"/>
<rect x="720" y="751" width="1" height="1" fill="#4D6185"/>
<rect x="713" y="752" width="1" height="1" fill="#4D6185"/>
<rect x="714" y="752" width="1" height="1" fill="#4D6185"/>
<rect x="715" y="752" width="1" height="1" fill="#4D6185"/>
<rect x="719" y="752" width="1" height="1" fill="#4D6185"/>
<rect x="720" y="752" width="1" height="1" fill="#4D6185"/>
<rect x="721" y="752" width="1" height="1" fill="#4D6185"/>
<rect x="714" y="753" width="1" height="1" fill="#4D6185"/>
<rect x="715" y="753" width="1" height="1" fill="#4D6185"/>
<rect x="716" y="753" width="1" height="1" fill="#4D6185"/>
<rect x="718" y="753" width="1" height="1" fill="#4D6185"/>
<rect x="719" y="753" width="1" height="1" fill="#4D6185"/>
<rect x="720" y="753" width="1" height="1" fill="#4D6185"/>
<rect x="715" y="754" width="1" height="1" fill="#4D6185"/>
<rect x="716" y="754" width="1" height="1" fill="#4D6185"/>
<rect x="717" y="754" width="1" height="1" fill="#4D6185"/>
<rect x="718" y="754" width="1" height="1" fill="#4D6185"/>
<rect x="719" y="754" width="1" height="1" fill="#4D6185"/>
<rect x="716" y="755" width="1" height="1" fill="#4D6185"/>
<rect x="717" y="755" width="1" height="1" fill="#4D6185"/>
<rect x="718" y="755" width="1" height="1" fill="#4D6185"/>
<rect x="717" y="756" width="1" height="1" fill="#4D6185"/>
<rect x="729" y="745" width="1" height="19" fill="#C5C2B2"/>
<rect x="733" y="744" width="151" height="20" fill="#7F9DB9" />
<rect x="734" y="745" width="149" height="18" fill="#FFFFFF" />
<rect x="867" y="746" width="15" height="16" rx="2" fill="url(#cbg)"/>
<rect x="871" y="751" width="1" height="1" fill="#4D6185"/>
<rect x="877" y="751" width="1" height="1" fill="#4D6185"/>
<rect x="870" y="752" width="1" height="1" fill="#4D6185"/>
<rect x="871" y="752" width="1" height="1" fill="#4D6185"/>
<rect x="872" y="752" width="1" height="1" fill="#4D6185"/>
<rect x="876" y="752" width="1" height="1" fill="#4D6185"/>
<rect x="877" y="752" width="1" height="1" fill="#4D6185"/>
<rect x="878" y="752" width="1" height="1" fill="#4D6185"/>
<rect x="871" y="753" width="1" height="1" fill="#4D6185"/>
<rect x="872" y="753" width="1" height="1" fill="#4D6185"/>
<rect x="873" y="753" width="1" height="1" fill="#4D6185"/>
<rect x="875" y="753" width="1" height="1" fill="#4D6185"/>
<rect x="876" y="753" width="1" height="1" fill="#4D6185"/>
<rect x="877" y="753" width="1" height="1" fill="#4D6185"/>
<rect x="872" y="754" width="1" height="1" fill="#4D6185"/>
<rect x="873" y="754" width="1" height="1" fill="#4D6185"/>
<rect x="874" y="754" width="1" height="1" fill="#4D6185"/>
<rect x="875" y="754" width="1" height="1" fill="#4D6185"/>
<rect x="876" y="754" width="1" height="1" fill="#4D6185"/>
<rect x="873" y="755" width="1" height="1" fill="#4D6185"/>
<rect x="874" y="755" width="1" height="1" fill="#4D6185"/>
<rect x="875" y="755" width="1" height="1" fill="#4D6185"/>
<rect x="874" y="756" width="1" height="1" fill="#4D6185"/>
<text x="737" y="759" font-size="12" fill="#000" font-weight="normal" text-anchor="start" textLength="64" lengthAdjust="spacingAndGlyphs" >&lt;No Vendor&gt;</text>
<rect x="886" y="745" width="1" height="19" fill="#C5C2B2"/>
<rect x="890.5" y="744.5" width="62" height="18" rx="3" fill="#F4F3EE" stroke="#C9C7BA"/>
<text x="921.5" y="758.5" font-size="12" fill="#ACA899" font-weight="normal" text-anchor="middle" textLength="28" lengthAdjust="spacingAndGlyphs" >Trade</text>
<rect x="960" y="740" width="1" height="26" fill="#ACA899"/>
<rect x="961" y="740" width="1" height="26" fill="#FFFFFF"/>
<rect x="307" y="5" width="176" height="22" fill="#7F9DB9" />
<rect x="308" y="6" width="174" height="20" fill="#FFFFFF" />
<rect x="466" y="6" width="15" height="19" rx="2" fill="url(#cbg)"/>
<rect x="470" y="13" width="1" height="1" fill="#4D6185"/>
<rect x="476" y="13" width="1" height="1" fill="#4D6185"/>
<rect x="469" y="14" width="1" height="1" fill="#4D6185"/>
<rect x="470" y="14" width="1" height="1" fill="#4D6185"/>
<rect x="471" y="14" width="1" height="1" fill="#4D6185"/>
<rect x="475" y="14" width="1" height="1" fill="#4D6185"/>
<rect x="476" y="14" width="1" height="1" fill="#4D6185"/>
<rect x="477" y="14" width="1" height="1" fill="#4D6185"/>
<rect x="470" y="15" width="1" height="1" fill="#4D6185"/>
<rect x="471" y="15" width="1" height="1" fill="#4D6185"/>
<rect x="472" y="15" width="1" height="1" fill="#4D6185"/>
<rect x="474" y="15" width="1" height="1" fill="#4D6185"/>
<rect x="475" y="15" width="1" height="1" fill="#4D6185"/>
<rect x="476" y="15" width="1" height="1" fill="#4D6185"/>
<rect x="471" y="16" width="1" height="1" fill="#4D6185"/>
<rect x="472" y="16" width="1" height="1" fill="#4D6185"/>
<rect x="473" y="16" width="1" height="1" fill="#4D6185"/>
<rect x="474" y="16" width="1" height="1" fill="#4D6185"/>
<rect x="475" y="16" width="1" height="1" fill="#4D6185"/>
<rect x="472" y="17" width="1" height="1" fill="#4D6185"/>
<rect x="473" y="17" width="1" height="1" fill="#4D6185"/>
<rect x="474" y="17" width="1" height="1" fill="#4D6185"/>
<rect x="473" y="18" width="1" height="1" fill="#4D6185"/>
<rect x="308" y="5" width="174" height="1" fill="#FFFFFF"/>
<text x="328.5" y="19" font-size="12" fill="#000" font-weight="normal" text-anchor="start" textLength="95" lengthAdjust="spacingAndGlyphs" >Chaikin Money Flow</text>
<rect x="20" y="9" width="8" height="1" fill="#000000"/><rect x="20" y="10" width="1" height="1" fill="#000000"/><rect x="21" y="10" width="5" height="1" fill="#FFFFFF"/><rect x="26" y="10" width="1" height="1" fill="#000000"/><rect x="27" y="10" width="1" height="1" fill="#FFFFFF"/><rect x="28" y="10" width="1" height="1" fill="#000000"/><rect x="20" y="11" width="1" height="1" fill="#000000"/><rect x="21" y="11" width="5" height="1" fill="#FFFFFF"/><rect x="26" y="11" width="1" height="1" fill="#000000"/><rect x="27" y="11" width="2" height="1" fill="#FFFFFF"/><rect x="29" y="11" width="1" height="1" fill="#000000"/><rect x="20" y="12" width="1" height="1" fill="#000000"/><rect x="21" y="12" width="5" height="1" fill="#FFFFFF"/><rect x="26" y="12" width="4" height="1" fill="#000000"/><rect x="20" y="13" width="1" height="1" fill="#000000"/><rect x="21" y="13" width="8" height="1" fill="#FFFFFF"/><rect x="29" y="13" width="1" height="1" fill="#000000"/><rect x="20" y="14" width="1" height="1" fill="#000000"/><rect x="21" y="14" width="8" height="1" fill="#FFFFFF"/><rect x="29" y="14" width="1" height="1" fill="#000000"/><rect x="20" y="15" width="1" height="1" fill="#000000"/><rect x="21" y="15" width="8" height="1" fill="#FFFFFF"/><rect x="29" y="15" width="1" height="1" fill="#000000"/><rect x="20" y="16" width="1" height="1" fill="#000000"/><rect x="21" y="16" width="8" height="1" fill="#FFFFFF"/><rect x="29" y="16" width="1" height="1" fill="#000000"/><rect x="20" y="17" width="1" height="1" fill="#000000"/><rect x="21" y="17" width="8" height="1" fill="#FFFFFF"/><rect x="29" y="17" width="1" height="1" fill="#000000"/><rect x="20" y="18" width="1" height="1" fill="#000000"/><rect x="21" y="18" width="8" height="1" fill="#FFFFFF"/><rect x="29" y="18" width="1" height="1" fill="#000000"/><rect x="20" y="19" width="1" height="1" fill="#000000"/><rect x="21" y="19" width="8" height="1" fill="#FFFFFF"/><rect x="29" y="19" width="1" height="1" fill="#000000"/><rect x="20" y="20" width="1" height="1" fill="#000000"/><rect x="21" y="20" width="8" height="1" fill="#FFFFFF"/><rect x="29" y="20" width="1" height="1" fill="#000000"/><rect x="20" y="21" width="10" height="1" fill="#000000"/>
<rect x="50" y="9" width="3" height="1" fill="#000000"/><rect x="49" y="10" width="1" height="1" fill="#000000"/><rect x="53" y="10" width="1" height="1" fill="#000000"/><rect x="55" y="10" width="1" height="1" fill="#000000"/><rect x="53" y="11" width="3" height="1" fill="#000000"/><rect x="42" y="12" width="3" height="1" fill="#000000"/><rect x="54" y="12" width="2" height="1" fill="#000000"/><rect x="41" y="13" width="1" height="1" fill="#000000"/><rect x="42" y="13" width="1" height="1" fill="#FFFF00"/><rect x="43" y="13" width="1" height="1" fill="#FFFFFF"/><rect x="44" y="13" width="1" height="1" fill="#FFFF00"/><rect x="45" y="13" width="6" height="1" fill="#000000"/><rect x="41" y="14" width="1" height="1" fill="#000000"/><rect x="42" y="14" width="1" height="1" fill="#FFFFFF"/><rect x="43" y="14" width="1" height="1" fill="#FFFF00"/><rect x="44" y="14" width="1" height="1" fill="#FFFFFF"/><rect x="45" y="14" width="1" height="1" fill="#FFFF00"/><rect x="46" y="14" width="1" height="1" fill="#FFFFFF"/><rect x="47" y="14" width="1" height="1" fill="#FFFF00"/><rect x="48" y="14" width="1" height="1" fill="#FFFFFF"/><rect x="49" y="14" width="1" height="1" fill="#FFFF00"/><rect x="50" y="14" width="1" height="1" fill="#000000"/><rect x="41" y="15" width="1" height="1" fill="#000000"/><rect x="42" y="15" width="1" height="1" fill="#FFFF00"/><rect x="43" y="15" width="1" height="1" fill="#FFFFFF"/><rect x="44" y="15" width="1" height="1" fill="#FFFF00"/><rect x="45" y="15" width="1" height="1" fill="#FFFFFF"/><rect x="46" y="15" width="1" height="1" fill="#FFFF00"/><rect x="47" y="15" width="1" height="1" fill="#FFFFFF"/><rect x="48" y="15" width="1" height="1" fill="#FFFF00"/><rect x="49" y="15" width="1" height="1" fill="#FFFFFF"/><rect x="50" y="15" width="1" height="1" fill="#000000"/><rect x="41" y="16" width="1" height="1" fill="#000000"/><rect x="42" y="16" width="1" height="1" fill="#FFFFFF"/><rect x="43" y="16" width="1" height="1" fill="#FFFF00"/><rect x="44" y="16" width="13" height="1" fill="#000000"/><rect x="41" y="17" width="1" height="1" fill="#000000"/><rect x="42" y="17" width="1" height="1" fill="#FFFF00"/><rect x="43" y="17" width="1" height="1" fill="#000000"/><rect x="44" y="17" width="11" height="1" fill="#808000"/><rect x="55" y="17" width="1" height="1" fill="#000000"/><rect x="41" y="18" width="1" height="1" fill="#000000"/><rect x="42" y="18" width="1" height="1" fill="#FFFFFF"/><rect x="43" y="18" width="1" height="1" fill="#000000"/><rect x="44" y="18" width="10" height="1" fill="#808000"/><rect x="54" y="18" width="1" height="1" fill="#000000"/><rect x="41" y="19" width="2" height="1" fill="#000000"/><rect x="43" y="19" width="10" height="1" fill="#808000"/><rect x="53" y="19" width="1" height="1" fill="#000000"/><rect x="41" y="20" width="2" height="1" fill="#000000"/><rect x="43" y="20" width="9" height="1" fill="#808000"/><rect x="52" y="20" width="1" height="1" fill="#000000"/><rect x="41" y="21" width="11" height="1" fill="#000000"/>
<rect x="66" y="8" width="14" height="1" fill="#000000"/><rect x="66" y="9" width="1" height="1" fill="#000000"/><rect x="67" y="9" width="1" height="1" fill="#808000"/><rect x="68" y="9" width="1" height="1" fill="#000000"/><rect x="69" y="9" width="8" height="1" fill="#FFFFFF"/><rect x="77" y="9" width="1" height="1" fill="#000000"/><rect x="78" y="9" width="1" height="1" fill="#FFFFFF"/><rect x="79" y="9" width="1" height="1" fill="#000000"/><rect x="66" y="10" width="1" height="1" fill="#000000"/><rect x="67" y="10" width="1" height="1" fill="#808000"/><rect x="68" y="10" width="1" height="1" fill="#000000"/><rect x="69" y="10" width="1" height="1" fill="#FFFFFF"/><rect x="70" y="10" width="6" height="1" fill="#ECE9D8"/><rect x="76" y="10" width="1" height="1" fill="#FFFFFF"/><rect x="77" y="10" width="3" height="1" fill="#000000"/><rect x="66" y="11" width="1" height="1" fill="#000000"/><rect x="67" y="11" width="1" height="1" fill="#808000"/><rect x="68" y="11" width="1" height="1" fill="#000000"/><rect x="69" y="11" width="1" height="1" fill="#FFFFFF"/><rect x="70" y="11" width="6" height="1" fill="#ECE9D8"/><rect x="76" y="11" width="1" height="1" fill="#FFFFFF"/><rect x="77" y="11" width="1" height="1" fill="#000000"/><rect x="78" y="11" width="1" height="1" fill="#808000"/><rect x="79" y="11" width="1" height="1" fill="#000000"/><rect x="66" y="12" width="1" height="1" fill="#000000"/><rect x="67" y="12" width="1" height="1" fill="#808000"/><rect x="68" y="12" width="1" height="1" fill="#000000"/><rect x="69" y="12" width="1" height="1" fill="#FFFFFF"/><rect x="70" y="12" width="6" height="1" fill="#ECE9D8"/><rect x="76" y="12" width="1" height="1" fill="#FFFFFF"/><rect x="77" y="12" width="1" height="1" fill="#000000"/><rect x="78" y="12" width="1" height="1" fill="#808000"/><rect x="79" y="12" width="1" height="1" fill="#000000"/><rect x="66" y="13" width="1" height="1" fill="#000000"/><rect x="67" y="13" width="1" height="1" fill="#808000"/><rect x="68" y="13" width="1" height="1" fill="#000000"/><rect x="69" y="13" width="8" height="1" fill="#FFFFFF"/><rect x="77" y="13" width="1" height="1" fill="#000000"/><rect x="78" y="13" width="1" height="1" fill="#808000"/><rect x="79" y="13" width="1" height="1" fill="#000000"/><rect x="66" y="14" width="1" height="1" fill="#000000"/><rect x="67" y="14" width="1" height="1" fill="#808000"/><rect x="68" y="14" width="10" height="1" fill="#000000"/><rect x="78" y="14" width="1" height="1" fill="#808000"/><rect x="79" y="14" width="1" height="1" fill="#000000"/><rect x="66" y="15" width="1" height="1" fill="#000000"/><rect x="67" y="15" width="12" height="1" fill="#808000"/><rect x="79" y="15" width="1" height="1" fill="#000000"/><rect x="66" y="16" width="1" height="1" fill="#000000"/><rect x="67" y="16" width="2" height="1" fill="#808000"/><rect x="69" y="16" width="8" height="1" fill="#000000"/><rect x="77" y="16" width="2" height="1" fill="#808000"/><rect x="79" y="16" width="1" height="1" fill="#000000"/><rect x="66" y="17" width="1" height="1" fill="#000000"/><rect x="67" y="17" width="1" height="1" fill="#808000"/><rect x="68" y="17" width="7" height="1" fill="#000000"/><rect x="75" y="17" width="2" height="1" fill="#FFFFFF"/><rect x="77" y="17" width="1" height="1" fill="#000000"/><rect x="78" y="17" width="1" height="1" fill="#808000"/><rect x="79" y="17" width="1" height="1" fill="#000000"/><rect x="66" y="18" width="1" height="1" fill="#000000"/><rect x="67" y="18" width="1" height="1" fill="#808000"/><rect x="68" y="18" width="7" height="1" fill="#000000"/><rect x="75" y="18" width="2" height="1" fill="#FFFFFF"/><rect x="77" y="18" width="1" height="1" fill="#000000"/><rect x="78" y="18" width="1" height="1" fill="#808000"/><rect x="79" y="18" width="1" height="1" fill="#000000"/><rect x="66" y="19" width="1" height="1" fill="#000000"/><rect x="67" y="19" width="1" height="1" fill="#808000"/><rect x="68" y="19" width="7" height="1" fill="#000000"/><rect x="75" y="19" width="2" height="1" fill="#FFFFFF"/><rect x="77" y="19" width="1" height="1" fill="#000000"/><rect x="78" y="19" width="1" height="1" fill="#808000"/><rect x="79" y="19" width="1" height="1" fill="#000000"/><rect x="66" y="20" width="1" height="1" fill="#000000"/><rect x="67" y="20" width="1" height="1" fill="#808000"/><rect x="68" y="20" width="10" height="1" fill="#000000"/><rect x="78" y="20" width="1" height="1" fill="#808000"/><rect x="79" y="20" width="1" height="1" fill="#000000"/><rect x="66" y="21" width="14" height="1" fill="#000000"/>
<rect x="100" y="9" width="9" height="1" fill="#000000"/><rect x="99" y="10" width="1" height="1" fill="#000000"/><rect x="100" y="10" width="8" height="1" fill="#FFFFFF"/><rect x="108" y="10" width="1" height="1" fill="#000000"/><rect x="99" y="11" width="1" height="1" fill="#000000"/><rect x="100" y="11" width="1" height="1" fill="#FFFFFF"/><rect x="101" y="11" width="5" height="1" fill="#000000"/><rect x="106" y="11" width="2" height="1" fill="#FFFFFF"/><rect x="108" y="11" width="1" height="1" fill="#000000"/><rect x="98" y="12" width="1" height="1" fill="#000000"/><rect x="99" y="12" width="8" height="1" fill="#FFFFFF"/><rect x="107" y="12" width="1" height="1" fill="#000000"/><rect x="98" y="13" width="1" height="1" fill="#000000"/><rect x="99" y="13" width="1" height="1" fill="#FFFFFF"/><rect x="100" y="13" width="5" height="1" fill="#000000"/><rect x="105" y="13" width="2" height="1" fill="#FFFFFF"/><rect x="107" y="13" width="2" height="1" fill="#000000"/><rect x="97" y="14" width="1" height="1" fill="#000000"/><rect x="98" y="14" width="9" height="1" fill="#FFFFFF"/><rect x="107" y="14" width="1" height="1" fill="#000000"/><rect x="108" y="14" width="1" height="1" fill="#FFFFFF"/><rect x="109" y="14" width="2" height="1" fill="#000000"/><rect x="96" y="15" width="12" height="1" fill="#000000"/><rect x="108" y="15" width="1" height="1" fill="#FFFFFF"/><rect x="109" y="15" width="1" height="1" fill="#000000"/><rect x="110" y="15" width="1" height="1" fill="#FFFFFF"/><rect x="111" y="15" width="1" height="1" fill="#000000"/><rect x="95" y="16" width="1" height="1" fill="#000000"/><rect x="96" y="16" width="10" height="1" fill="#ECE9D8"/><rect x="106" y="16" width="1" height="1" fill="#000000"/><rect x="107" y="16" width="1" height="1" fill="#FFFFFF"/><rect x="108" y="16" width="1" height="1" fill="#000000"/><rect x="109" y="16" width="1" height="1" fill="#FFFFFF"/><rect x="110" y="16" width="1" height="1" fill="#000000"/><rect x="95" y="17" width="14" height="1" fill="#000000"/><rect x="109" y="17" width="1" height="1" fill="#FFFFFF"/><rect x="110" y="17" width="1" height="1" fill="#000000"/><rect x="95" y="18" width="1" height="1" fill="#000000"/><rect x="96" y="18" width="6" height="1" fill="#FFFFFF"/><rect x="102" y="18" width="3" height="1" fill="#FFFF00"/><rect x="105" y="18" width="2" height="1" fill="#FFFFFF"/><rect x="107" y="18" width="1" height="1" fill="#000000"/><rect x="108" y="18" width="1" height="1" fill="#FFFFFF"/><rect x="109" y="18" width="1" height="1" fill="#000000"/><rect x="95" y="19" width="15" height="1" fill="#000000"/><rect x="95" y="20" width="1" height="1" fill="#000000"/><rect x="96" y="20" width="11" height="1" fill="#ECE9D8"/><rect x="107" y="20" width="1" height="1" fill="#000000"/><rect x="108" y="20" width="1" height="1" fill="#FFFFFF"/><rect x="109" y="20" width="1" height="1" fill="#000000"/><rect x="96" y="21" width="13" height="1" fill="#000000"/>
<rect x="119" y="8" width="8" height="1" fill="#000000"/><rect x="119" y="9" width="1" height="1" fill="#000000"/><rect x="120" y="9" width="6" height="1" fill="#FFFFFF"/><rect x="126" y="9" width="2" height="1" fill="#000000"/><rect x="119" y="10" width="1" height="1" fill="#000000"/><rect x="120" y="10" width="6" height="1" fill="#FFFFFF"/><rect x="126" y="10" width="1" height="1" fill="#000000"/><rect x="127" y="10" width="1" height="1" fill="#FFFFFF"/><rect x="128" y="10" width="1" height="1" fill="#000000"/><rect x="119" y="11" width="1" height="1" fill="#000000"/><rect x="120" y="11" width="6" height="1" fill="#FFFFFF"/><rect x="126" y="11" width="4" height="1" fill="#000000"/><rect x="119" y="12" width="1" height="1" fill="#000000"/><rect x="120" y="12" width="9" height="1" fill="#FFFFFF"/><rect x="129" y="12" width="1" height="1" fill="#000000"/><rect x="119" y="13" width="1" height="1" fill="#000000"/><rect x="120" y="13" width="4" height="1" fill="#FFFFFF"/><rect x="124" y="13" width="4" height="1" fill="#000000"/><rect x="128" y="13" width="1" height="1" fill="#FFFFFF"/><rect x="129" y="13" width="1" height="1" fill="#000000"/><rect x="119" y="14" width="1" height="1" fill="#000000"/><rect x="120" y="14" width="3" height="1" fill="#FFFFFF"/><rect x="123" y="14" width="1" height="1" fill="#000000"/><rect x="124" y="14" width="1" height="1" fill="#00FFFF"/><rect x="125" y="14" width="3" height="1" fill="#FFFFFF"/><rect x="128" y="14" width="2" height="1" fill="#000000"/><rect x="119" y="15" width="1" height="1" fill="#000000"/><rect x="120" y="15" width="2" height="1" fill="#FFFFFF"/><rect x="122" y="15" width="1" height="1" fill="#000000"/><rect x="123" y="15" width="1" height="1" fill="#00FFFF"/><rect x="124" y="15" width="5" height="1" fill="#FFFFFF"/><rect x="129" y="15" width="1" height="1" fill="#000000"/><rect x="119" y="16" width="1" height="1" fill="#000000"/><rect x="120" y="16" width="2" height="1" fill="#FFFFFF"/><rect x="122" y="16" width="1" height="1" fill="#000000"/><rect x="123" y="16" width="2" height="1" fill="#FFFFFF"/><rect x="125" y="16" width="1" height="1" fill="#00FFFF"/><rect x="126" y="16" width="3" height="1" fill="#FFFFFF"/><rect x="129" y="16" width="1" height="1" fill="#000000"/><rect x="119" y="17" width="1" height="1" fill="#000000"/><rect x="120" y="17" width="2" height="1" fill="#FFFFFF"/><rect x="122" y="17" width="1" height="1" fill="#000000"/><rect x="123" y="17" width="2" height="1" fill="#FFFFFF"/><rect x="125" y="17" width="1" height="1" fill="#00FFFF"/><rect x="126" y="17" width="3" height="1" fill="#FFFFFF"/><rect x="129" y="17" width="1" height="1" fill="#000000"/><rect x="119" y="18" width="1" height="1" fill="#000000"/><rect x="120" y="18" width="3" height="1" fill="#FFFFFF"/><rect x="123" y="18" width="1" height="1" fill="#000000"/><rect x="124" y="18" width="4" height="1" fill="#FFFFFF"/><rect x="128" y="18" width="1" height="1" fill="#000000"/><rect x="119" y="19" width="1" height="1" fill="#000000"/><rect x="120" y="19" width="4" height="1" fill="#FFFFFF"/><rect x="124" y="19" width="6" height="1" fill="#000000"/><rect x="119" y="20" width="1" height="1" fill="#000000"/><rect x="120" y="20" width="8" height="1" fill="#FFFFFF"/><rect x="128" y="20" width="3" height="1" fill="#000000"/><rect x="119" y="21" width="10" height="1" fill="#000000"/><rect x="130" y="21" width="3" height="1" fill="#000000"/><rect x="131" y="22" width="2" height="1" fill="#000000"/>
<rect x="154" y="9" width="1" height="1" fill="#C9C6B6"/><rect x="160" y="9" width="1" height="1" fill="#C9C6B6"/><rect x="154" y="10" width="1" height="1" fill="#C9C6B6"/><rect x="160" y="10" width="1" height="1" fill="#C9C6B6"/><rect x="154" y="11" width="1" height="1" fill="#C9C6B6"/><rect x="160" y="11" width="1" height="1" fill="#C9C6B6"/><rect x="155" y="12" width="1" height="1" fill="#C9C6B6"/><rect x="159" y="12" width="1" height="1" fill="#C9C6B6"/><rect x="155" y="13" width="1" height="1" fill="#C9C6B6"/><rect x="159" y="13" width="1" height="1" fill="#C9C6B6"/><rect x="156" y="14" width="1" height="1" fill="#C9C6B6"/><rect x="158" y="14" width="1" height="1" fill="#C9C6B6"/><rect x="157" y="15" width="1" height="1" fill="#C9C6B6"/><rect x="156" y="16" width="1" height="1" fill="#C9C6B6"/><rect x="158" y="16" width="1" height="1" fill="#C9C6B6"/><rect x="155" y="17" width="2" height="1" fill="#C9C6B6"/><rect x="158" y="17" width="2" height="1" fill="#C9C6B6"/><rect x="154" y="18" width="1" height="1" fill="#C9C6B6"/><rect x="157" y="18" width="1" height="1" fill="#C9C6B6"/><rect x="160" y="18" width="1" height="1" fill="#C9C6B6"/><rect x="153" y="19" width="1" height="1" fill="#C9C6B6"/><rect x="157" y="19" width="1" height="1" fill="#C9C6B6"/><rect x="161" y="19" width="1" height="1" fill="#C9C6B6"/><rect x="153" y="20" width="1" height="1" fill="#C9C6B6"/><rect x="157" y="20" width="1" height="1" fill="#C9C6B6"/><rect x="161" y="20" width="1" height="1" fill="#C9C6B6"/><rect x="154" y="21" width="1" height="1" fill="#C9C6B6"/><rect x="156" y="21" width="1" height="1" fill="#C9C6B6"/><rect x="158" y="21" width="1" height="1" fill="#C9C6B6"/><rect x="160" y="21" width="1" height="1" fill="#C9C6B6"/><rect x="155" y="22" width="1" height="1" fill="#C9C6B6"/><rect x="159" y="22" width="1" height="1" fill="#C9C6B6"/>
<rect x="174" y="9" width="6" height="1" fill="#000000"/><rect x="174" y="10" width="1" height="1" fill="#000000"/><rect x="175" y="10" width="4" height="1" fill="#FFFFFF"/><rect x="179" y="10" width="2" height="1" fill="#000000"/><rect x="174" y="11" width="1" height="1" fill="#000000"/><rect x="175" y="11" width="1" height="1" fill="#FFFFFF"/><rect x="176" y="11" width="2" height="1" fill="#000000"/><rect x="178" y="11" width="1" height="1" fill="#FFFFFF"/><rect x="179" y="11" width="1" height="1" fill="#000000"/><rect x="180" y="11" width="1" height="1" fill="#FFFFFF"/><rect x="181" y="11" width="1" height="1" fill="#000000"/><rect x="174" y="12" width="1" height="1" fill="#000000"/><rect x="175" y="12" width="3" height="1" fill="#FFFFFF"/><rect x="178" y="12" width="6" height="1" fill="#000080"/><rect x="174" y="13" width="1" height="1" fill="#000000"/><rect x="175" y="13" width="1" height="1" fill="#FFFFFF"/><rect x="176" y="13" width="2" height="1" fill="#000000"/><rect x="178" y="13" width="1" height="1" fill="#000080"/><rect x="179" y="13" width="4" height="1" fill="#FFFFFF"/><rect x="183" y="13" width="2" height="1" fill="#000080"/><rect x="174" y="14" width="1" height="1" fill="#000000"/><rect x="175" y="14" width="3" height="1" fill="#FFFFFF"/><rect x="178" y="14" width="1" height="1" fill="#000080"/><rect x="179" y="14" width="1" height="1" fill="#FFFFFF"/><rect x="180" y="14" width="2" height="1" fill="#000000"/><rect x="182" y="14" width="1" height="1" fill="#FFFFFF"/><rect x="183" y="14" width="1" height="1" fill="#000080"/><rect x="184" y="14" width="1" height="1" fill="#FFFFFF"/><rect x="185" y="14" width="1" height="1" fill="#000080"/><rect x="174" y="15" width="1" height="1" fill="#000000"/><rect x="175" y="15" width="1" height="1" fill="#FFFFFF"/><rect x="176" y="15" width="2" height="1" fill="#000000"/><rect x="178" y="15" width="1" height="1" fill="#000080"/><rect x="179" y="15" width="4" height="1" fill="#FFFFFF"/><rect x="183" y="15" width="3" height="1" fill="#000080"/><rect x="174" y="16" width="1" height="1" fill="#000000"/><rect x="175" y="16" width="3" height="1" fill="#FFFFFF"/><rect x="178" y="16" width="1" height="1" fill="#000080"/><rect x="179" y="16" width="1" height="1" fill="#FFFFFF"/><rect x="180" y="16" width="4" height="1" fill="#000000"/><rect x="184" y="16" width="1" height="1" fill="#FFFFFF"/><rect x="185" y="16" width="1" height="1" fill="#000080"/><rect x="174" y="17" width="4" height="1" fill="#000000"/><rect x="178" y="17" width="1" height="1" fill="#000080"/><rect x="179" y="17" width="6" height="1" fill="#FFFFFF"/><rect x="185" y="17" width="1" height="1" fill="#000080"/><rect x="178" y="18" width="1" height="1" fill="#000080"/><rect x="179" y="18" width="1" height="1" fill="#FFFFFF"/><rect x="180" y="18" width="4" height="1" fill="#000000"/><rect x="184" y="18" width="1" height="1" fill="#FFFFFF"/><rect x="185" y="18" width="1" height="1" fill="#000080"/><rect x="178" y="19" width="1" height="1" fill="#000080"/><rect x="179" y="19" width="6" height="1" fill="#FFFFFF"/><rect x="185" y="19" width="1" height="1" fill="#000080"/><rect x="178" y="20" width="8" height="1" fill="#000080"/>
<rect x="202" y="9" width="4" height="1" fill="#C9C6B6"/><rect x="199" y="10" width="3" height="1" fill="#C9C6B6"/><rect x="202" y="10" width="4" height="1" fill="#ACA899"/><rect x="206" y="10" width="3" height="1" fill="#C9C6B6"/><rect x="198" y="11" width="1" height="1" fill="#C9C6B6"/><rect x="199" y="11" width="10" height="1" fill="#ACA899"/><rect x="209" y="11" width="1" height="1" fill="#C9C6B6"/><rect x="198" y="12" width="1" height="1" fill="#C9C6B6"/><rect x="199" y="12" width="2" height="1" fill="#ACA899"/><rect x="201" y="12" width="6" height="1" fill="#FFFFFF"/><rect x="207" y="12" width="2" height="1" fill="#ACA899"/><rect x="209" y="12" width="1" height="1" fill="#C9C6B6"/><rect x="198" y="13" width="1" height="1" fill="#C9C6B6"/><rect x="199" y="13" width="10" height="1" fill="#ACA899"/><rect x="209" y="13" width="1" height="1" fill="#C9C6B6"/><rect x="198" y="14" width="1" height="1" fill="#C9C6B6"/><rect x="199" y="14" width="10" height="1" fill="#ACA899"/><rect x="209" y="14" width="1" height="1" fill="#C9C6B6"/><rect x="198" y="15" width="1" height="1" fill="#C9C6B6"/><rect x="199" y="15" width="10" height="1" fill="#ACA899"/><rect x="209" y="15" width="1" height="1" fill="#C9C6B6"/><rect x="198" y="16" width="1" height="1" fill="#C9C6B6"/><rect x="199" y="16" width="6" height="1" fill="#ACA899"/><rect x="205" y="16" width="7" height="1" fill="#FFFFFF"/><rect x="198" y="17" width="1" height="1" fill="#C9C6B6"/><rect x="199" y="17" width="6" height="1" fill="#ACA899"/><rect x="205" y="17" width="1" height="1" fill="#FFFFFF"/><rect x="206" y="17" width="5" height="1" fill="#C9C6B6"/><rect x="211" y="17" width="2" height="1" fill="#FFFFFF"/><rect x="198" y="18" width="1" height="1" fill="#C9C6B6"/><rect x="199" y="18" width="6" height="1" fill="#ACA899"/><rect x="205" y="18" width="8" height="1" fill="#FFFFFF"/><rect x="198" y="19" width="1" height="1" fill="#C9C6B6"/><rect x="199" y="19" width="6" height="1" fill="#ACA899"/><rect x="205" y="19" width="1" height="1" fill="#FFFFFF"/><rect x="206" y="19" width="6" height="1" fill="#C9C6B6"/><rect x="212" y="19" width="1" height="1" fill="#FFFFFF"/><rect x="198" y="20" width="1" height="1" fill="#C9C6B6"/><rect x="199" y="20" width="6" height="1" fill="#ACA899"/><rect x="205" y="20" width="8" height="1" fill="#FFFFFF"/><rect x="199" y="21" width="7" height="1" fill="#C9C6B6"/><rect x="206" y="21" width="7" height="1" fill="#FFFFFF"/><rect x="205" y="22" width="7" height="1" fill="#FFFFFF"/>
<rect x="236" y="11" width="4" height="1" fill="#C9C6B6"/><rect x="229" y="12" width="1" height="1" fill="#C9C6B6"/><rect x="234" y="12" width="2" height="1" fill="#C9C6B6"/><rect x="240" y="12" width="1" height="1" fill="#C9C6B6"/><rect x="229" y="13" width="2" height="1" fill="#C9C6B6"/><rect x="233" y="13" width="1" height="1" fill="#C9C6B6"/><rect x="241" y="13" width="1" height="1" fill="#C9C6B6"/><rect x="229" y="14" width="5" height="1" fill="#C9C6B6"/><rect x="241" y="14" width="1" height="1" fill="#C9C6B6"/><rect x="229" y="15" width="4" height="1" fill="#C9C6B6"/><rect x="240" y="15" width="1" height="1" fill="#C9C6B6"/><rect x="241" y="15" width="1" height="1" fill="#FFFFFF"/><rect x="229" y="16" width="5" height="1" fill="#C9C6B6"/><rect x="240" y="16" width="1" height="1" fill="#C9C6B6"/><rect x="229" y="17" width="6" height="1" fill="#C9C6B6"/><rect x="235" y="17" width="1" height="1" fill="#FFFFFF"/><rect x="239" y="17" width="1" height="1" fill="#C9C6B6"/><rect x="240" y="17" width="1" height="1" fill="#FFFFFF"/><rect x="229" y="18" width="5" height="1" fill="#FFFFFF"/><rect x="238" y="18" width="1" height="1" fill="#C9C6B6"/><rect x="239" y="18" width="1" height="1" fill="#FFFFFF"/>
<rect x="264" y="8" width="1" height="1" fill="#000080"/><rect x="262" y="9" width="2" height="1" fill="#000000"/><rect x="264" y="9" width="1" height="1" fill="#000080"/><rect x="265" y="9" width="2" height="1" fill="#000000"/><rect x="261" y="10" width="1" height="1" fill="#000000"/><rect x="264" y="10" width="1" height="1" fill="#000080"/><rect x="267" y="10" width="1" height="1" fill="#000000"/><rect x="260" y="11" width="1" height="1" fill="#000000"/><rect x="264" y="11" width="1" height="1" fill="#000080"/><rect x="268" y="11" width="1" height="1" fill="#000000"/><rect x="259" y="12" width="1" height="1" fill="#000000"/><rect x="264" y="12" width="1" height="1" fill="#000080"/><rect x="269" y="12" width="1" height="1" fill="#000000"/><rect x="259" y="13" width="1" height="1" fill="#000000"/><rect x="269" y="13" width="1" height="1" fill="#000000"/><rect x="259" y="14" width="1" height="1" fill="#000000"/><rect x="269" y="14" width="1" height="1" fill="#000000"/><rect x="257" y="15" width="5" height="1" fill="#000080"/><rect x="267" y="15" width="5" height="1" fill="#000080"/><rect x="259" y="16" width="1" height="1" fill="#000000"/><rect x="269" y="16" width="1" height="1" fill="#000000"/><rect x="259" y="17" width="1" height="1" fill="#000000"/><rect x="269" y="17" width="1" height="1" fill="#000000"/><rect x="259" y="18" width="1" height="1" fill="#000000"/><rect x="264" y="18" width="1" height="1" fill="#000080"/><rect x="269" y="18" width="1" height="1" fill="#000000"/><rect x="260" y="19" width="1" height="1" fill="#000000"/><rect x="264" y="19" width="1" height="1" fill="#000080"/><rect x="268" y="19" width="1" height="1" fill="#000000"/><rect x="261" y="20" width="1" height="1" fill="#000000"/><rect x="264" y="20" width="1" height="1" fill="#000080"/><rect x="267" y="20" width="1" height="1" fill="#000000"/><rect x="262" y="21" width="2" height="1" fill="#000000"/><rect x="264" y="21" width="1" height="1" fill="#000080"/><rect x="265" y="21" width="2" height="1" fill="#000000"/><rect x="264" y="22" width="1" height="1" fill="#000080"/>
<rect x="285" y="8" width="5" height="1" fill="#000000"/><rect x="284" y="9" width="1" height="1" fill="#000000"/><rect x="290" y="9" width="1" height="1" fill="#000000"/><rect x="283" y="10" width="1" height="1" fill="#000000"/><rect x="284" y="10" width="3" height="1" fill="#00FFFF"/><rect x="287" y="10" width="1" height="1" fill="#000000"/><rect x="291" y="10" width="1" height="1" fill="#000000"/><rect x="281" y="11" width="2" height="1" fill="#000000"/><rect x="283" y="11" width="1" height="1" fill="#00FFFF"/><rect x="284" y="11" width="5" height="1" fill="#000000"/><rect x="291" y="11" width="1" height="1" fill="#000000"/><rect x="281" y="12" width="1" height="1" fill="#000000"/><rect x="282" y="12" width="1" height="1" fill="#FFFFFF"/><rect x="283" y="12" width="1" height="1" fill="#000000"/><rect x="284" y="12" width="1" height="1" fill="#00FFFF"/><rect x="285" y="12" width="4" height="1" fill="#000000"/><rect x="291" y="12" width="1" height="1" fill="#000000"/><rect x="281" y="13" width="1" height="1" fill="#000000"/><rect x="282" y="13" width="1" height="1" fill="#FFFFFF"/><rect x="283" y="13" width="1" height="1" fill="#00FFFF"/><rect x="284" y="13" width="4" height="1" fill="#000000"/><rect x="291" y="13" width="1" height="1" fill="#000000"/><rect x="281" y="14" width="1" height="1" fill="#000000"/><rect x="282" y="14" width="2" height="1" fill="#FFFFFF"/><rect x="284" y="14" width="1" height="1" fill="#000000"/><rect x="285" y="14" width="1" height="1" fill="#00FFFF"/><rect x="290" y="14" width="1" height="1" fill="#000000"/><rect x="281" y="15" width="1" height="1" fill="#000000"/><rect x="282" y="15" width="3" height="1" fill="#FFFFFF"/><rect x="285" y="15" width="7" height="1" fill="#000000"/><rect x="281" y="16" width="1" height="1" fill="#000000"/><rect x="282" y="16" width="6" height="1" fill="#FFFFFF"/><rect x="288" y="16" width="1" height="1" fill="#000000"/><rect x="291" y="16" width="2" height="1" fill="#000000"/><rect x="281" y="17" width="1" height="1" fill="#000000"/><rect x="282" y="17" width="6" height="1" fill="#FFFFFF"/><rect x="288" y="17" width="1" height="1" fill="#000000"/><rect x="292" y="17" width="2" height="1" fill="#000000"/><rect x="281" y="18" width="1" height="1" fill="#000000"/><rect x="282" y="18" width="6" height="1" fill="#FFFFFF"/><rect x="288" y="18" width="1" height="1" fill="#000000"/><rect x="293" y="18" width="2" height="1" fill="#000000"/><rect x="281" y="19" width="1" height="1" fill="#000000"/><rect x="282" y="19" width="6" height="1" fill="#FFFFFF"/><rect x="288" y="19" width="1" height="1" fill="#000000"/><rect x="294" y="19" width="2" height="1" fill="#000000"/><rect x="281" y="20" width="1" height="1" fill="#000000"/><rect x="282" y="20" width="6" height="1" fill="#FFFFFF"/><rect x="288" y="20" width="1" height="1" fill="#000000"/><rect x="295" y="20" width="2" height="1" fill="#000000"/><rect x="281" y="21" width="8" height="1" fill="#000000"/><rect x="296" y="21" width="1" height="1" fill="#000000"/>
<rect x="312" y="9" width="13" height="1" fill="#000000"/><rect x="312" y="10" width="1" height="1" fill="#000000"/><rect x="313" y="10" width="11" height="1" fill="#FFFFFF"/><rect x="324" y="10" width="1" height="1" fill="#808080"/><rect x="312" y="11" width="1" height="1" fill="#000000"/><rect x="313" y="11" width="1" height="1" fill="#FFFFFF"/><rect x="314" y="11" width="10" height="1" fill="#C0C0C0"/><rect x="324" y="11" width="1" height="1" fill="#808080"/><rect x="312" y="12" width="1" height="1" fill="#000000"/><rect x="313" y="12" width="1" height="1" fill="#FFFFFF"/><rect x="314" y="12" width="4" height="1" fill="#C0C0C0"/><rect x="318" y="12" width="1" height="1" fill="#000000"/><rect x="319" y="12" width="2" height="1" fill="#C0C0C0"/><rect x="321" y="12" width="1" height="1" fill="#000000"/><rect x="322" y="12" width="2" height="1" fill="#C0C0C0"/><rect x="324" y="12" width="1" height="1" fill="#808080"/><rect x="312" y="13" width="1" height="1" fill="#000000"/><rect x="313" y="13" width="1" height="1" fill="#FFFFFF"/><rect x="314" y="13" width="1" height="1" fill="#C0C0C0"/><rect x="315" y="13" width="2" height="1" fill="#000000"/><rect x="317" y="13" width="1" height="1" fill="#C0C0C0"/><rect x="318" y="13" width="2" height="1" fill="#000000"/><rect x="320" y="13" width="1" height="1" fill="#C0C0C0"/><rect x="321" y="13" width="2" height="1" fill="#000000"/><rect x="323" y="13" width="1" height="1" fill="#C0C0C0"/><rect x="324" y="13" width="1" height="1" fill="#808080"/><rect x="312" y="14" width="1" height="1" fill="#000000"/><rect x="313" y="14" width="1" height="1" fill="#FFFFFF"/><rect x="314" y="14" width="1" height="1" fill="#C0C0C0"/><rect x="315" y="14" width="1" height="1" fill="#000000"/><rect x="316" y="14" width="2" height="1" fill="#C0C0C0"/><rect x="318" y="14" width="1" height="1" fill="#000000"/><rect x="319" y="14" width="2" height="1" fill="#C0C0C0"/><rect x="321" y="14" width="1" height="1" fill="#000000"/><rect x="322" y="14" width="2" height="1" fill="#C0C0C0"/><rect x="324" y="14" width="1" height="1" fill="#808080"/><rect x="312" y="15" width="1" height="1" fill="#000000"/><rect x="313" y="15" width="1" height="1" fill="#FFFFFF"/><rect x="314" y="15" width="1" height="1" fill="#C0C0C0"/><rect x="315" y="15" width="1" height="1" fill="#000000"/><rect x="316" y="15" width="2" height="1" fill="#C0C0C0"/><rect x="318" y="15" width="1" height="1" fill="#000000"/><rect x="319" y="15" width="2" height="1" fill="#C0C0C0"/><rect x="321" y="15" width="1" height="1" fill="#000000"/><rect x="322" y="15" width="2" height="1" fill="#C0C0C0"/><rect x="324" y="15" width="1" height="1" fill="#808080"/><rect x="312" y="16" width="1" height="1" fill="#000000"/><rect x="313" y="16" width="1" height="1" fill="#FFFFFF"/><rect x="314" y="16" width="1" height="1" fill="#C0C0C0"/><rect x="315" y="16" width="1" height="1" fill="#000000"/><rect x="316" y="16" width="2" height="1" fill="#C0C0C0"/><rect x="318" y="16" width="1" height="1" fill="#000000"/><rect x="319" y="16" width="2" height="1" fill="#C0C0C0"/><rect x="321" y="16" width="1" height="1" fill="#000000"/><rect x="322" y="16" width="2" height="1" fill="#C0C0C0"/><rect x="324" y="16" width="1" height="1" fill="#808080"/><rect x="312" y="17" width="1" height="1" fill="#000000"/><rect x="313" y="17" width="1" height="1" fill="#FFFFFF"/><rect x="314" y="17" width="1" height="1" fill="#C0C0C0"/><rect x="315" y="17" width="1" height="1" fill="#000000"/><rect x="316" y="17" width="2" height="1" fill="#C0C0C0"/><rect x="318" y="17" width="1" height="1" fill="#000000"/><rect x="319" y="17" width="5" height="1" fill="#C0C0C0"/><rect x="324" y="17" width="1" height="1" fill="#808080"/><rect x="312" y="18" width="1" height="1" fill="#000000"/><rect x="313" y="18" width="1" height="1" fill="#FFFFFF"/><rect x="314" y="18" width="1" height="1" fill="#C0C0C0"/><rect x="315" y="18" width="1" height="1" fill="#000000"/><rect x="316" y="18" width="8" height="1" fill="#C0C0C0"/><rect x="324" y="18" width="1" height="1" fill="#808080"/><rect x="312" y="19" width="1" height="1" fill="#000000"/><rect x="313" y="19" width="1" height="1" fill="#FFFFFF"/><rect x="314" y="19" width="10" height="1" fill="#C0C0C0"/><rect x="324" y="19" width="1" height="1" fill="#808080"/><rect x="312" y="20" width="1" height="1" fill="#000000"/><rect x="313" y="20" width="1" height="1" fill="#FFFFFF"/><rect x="314" y="20" width="10" height="1" fill="#C0C0C0"/><rect x="324" y="20" width="1" height="1" fill="#808080"/><rect x="312" y="21" width="1" height="1" fill="#000000"/><rect x="313" y="21" width="12" height="1" fill="#808080"/>
<rect x="497" y="8" width="6" height="1" fill="#000000"/><rect x="496" y="9" width="1" height="1" fill="#000000"/><rect x="503" y="9" width="1" height="1" fill="#000000"/><rect x="495" y="10" width="1" height="1" fill="#000000"/><rect x="499" y="10" width="2" height="1" fill="#000000"/><rect x="504" y="10" width="1" height="1" fill="#000000"/><rect x="495" y="11" width="1" height="1" fill="#000000"/><rect x="498" y="11" width="1" height="1" fill="#000000"/><rect x="499" y="11" width="2" height="1" fill="#FFFF00"/><rect x="501" y="11" width="1" height="1" fill="#000000"/><rect x="504" y="11" width="1" height="1" fill="#000000"/><rect x="495" y="12" width="1" height="1" fill="#000000"/><rect x="498" y="12" width="1" height="1" fill="#000000"/><rect x="499" y="12" width="2" height="1" fill="#FFFF00"/><rect x="501" y="12" width="1" height="1" fill="#000000"/><rect x="504" y="12" width="1" height="1" fill="#000000"/><rect x="495" y="13" width="1" height="1" fill="#000000"/><rect x="497" y="13" width="1" height="1" fill="#000000"/><rect x="498" y="13" width="4" height="1" fill="#FFFF00"/><rect x="502" y="13" width="1" height="1" fill="#000000"/><rect x="504" y="13" width="1" height="1" fill="#000000"/><rect x="495" y="14" width="1" height="1" fill="#000000"/><rect x="497" y="14" width="1" height="1" fill="#000000"/><rect x="498" y="14" width="2" height="1" fill="#FFFF00"/><rect x="500" y="14" width="1" height="1" fill="#000000"/><rect x="501" y="14" width="1" height="1" fill="#FFFF00"/><rect x="502" y="14" width="1" height="1" fill="#000000"/><rect x="504" y="14" width="1" height="1" fill="#000000"/><rect x="495" y="15" width="2" height="1" fill="#000000"/><rect x="497" y="15" width="3" height="1" fill="#FFFF00"/><rect x="500" y="15" width="1" height="1" fill="#000000"/><rect x="501" y="15" width="1" height="1" fill="#FFFF00"/><rect x="502" y="15" width="3" height="1" fill="#000000"/><rect x="495" y="16" width="1" height="1" fill="#000000"/><rect x="496" y="16" width="6" height="1" fill="#FFFF00"/><rect x="502" y="16" width="3" height="1" fill="#000000"/><rect x="495" y="17" width="1" height="1" fill="#000000"/><rect x="496" y="17" width="1" height="1" fill="#FFFFFF"/><rect x="497" y="17" width="8" height="1" fill="#000000"/><rect x="505" y="17" width="1" height="1" fill="#ACA899"/><rect x="495" y="18" width="1" height="1" fill="#000000"/><rect x="496" y="18" width="1" height="1" fill="#FFFFFF"/><rect x="497" y="18" width="8" height="1" fill="#000000"/><rect x="505" y="18" width="2" height="1" fill="#ACA899"/><rect x="494" y="19" width="1" height="1" fill="#FFFFFF"/><rect x="495" y="19" width="1" height="1" fill="#000000"/><rect x="496" y="19" width="1" height="1" fill="#FFFFFF"/><rect x="497" y="19" width="8" height="1" fill="#000000"/><rect x="505" y="19" width="1" height="1" fill="#ACA899"/><rect x="495" y="20" width="9" height="1" fill="#000000"/><rect x="504" y="20" width="1" height="1" fill="#FFFFFF"/><rect x="496" y="21" width="1" height="1" fill="#FFFFFF"/><rect x="497" y="21" width="3" height="1" fill="#000000"/><rect x="500" y="21" width="4" height="1" fill="#FFFFFF"/><rect x="497" y="22" width="3" height="1" fill="#000000"/>
<rect x="523" y="8" width="5" height="1" fill="#000000"/><rect x="522" y="9" width="1" height="1" fill="#000000"/><rect x="523" y="9" width="1" height="1" fill="#FFFFFF"/><rect x="524" y="9" width="1" height="1" fill="#0000FF"/><rect x="525" y="9" width="4" height="1" fill="#000000"/><rect x="522" y="10" width="7" height="1" fill="#000000"/><rect x="520" y="11" width="10" height="1" fill="#000000"/><rect x="521" y="12" width="1" height="1" fill="#000000"/><rect x="522" y="12" width="6" height="1" fill="#FFFFFF"/><rect x="528" y="12" width="1" height="1" fill="#000000"/><rect x="521" y="13" width="1" height="1" fill="#A8A598"/><rect x="522" y="13" width="1" height="1" fill="#FFFFFF"/><rect x="523" y="13" width="1" height="1" fill="#000000"/><rect x="524" y="13" width="2" height="1" fill="#FFFFFF"/><rect x="526" y="13" width="1" height="1" fill="#000000"/><rect x="527" y="13" width="1" height="1" fill="#FFFFFF"/><rect x="528" y="13" width="1" height="1" fill="#A8A598"/><rect x="521" y="14" width="4" height="1" fill="#FFFFFF"/><rect x="525" y="14" width="1" height="1" fill="#000000"/><rect x="526" y="14" width="2" height="1" fill="#FFFFFF"/><rect x="528" y="14" width="1" height="1" fill="#A8A598"/><rect x="521" y="15" width="2" height="1" fill="#FFFFFF"/><rect x="523" y="15" width="1" height="1" fill="#A8A598"/><rect x="524" y="15" width="3" height="1" fill="#FFFFFF"/><rect x="527" y="15" width="2" height="1" fill="#A8A598"/><rect x="521" y="16" width="1" height="1" fill="#A8A598"/><rect x="522" y="16" width="1" height="1" fill="#FFFFFF"/><rect x="523" y="16" width="3" height="1" fill="#000000"/><rect x="526" y="16" width="1" height="1" fill="#FFFFFF"/><rect x="527" y="16" width="1" height="1" fill="#A8A598"/><rect x="522" y="17" width="1" height="1" fill="#A8A598"/><rect x="523" y="17" width="3" height="1" fill="#FFFFFF"/><rect x="526" y="17" width="1" height="1" fill="#A8A598"/><rect x="527" y="17" width="1" height="1" fill="#000000"/><rect x="520" y="18" width="1" height="1" fill="#A8A598"/><rect x="522" y="18" width="1" height="1" fill="#A8A598"/><rect x="524" y="18" width="1" height="1" fill="#A8A598"/><rect x="525" y="18" width="1" height="1" fill="#FFFFFF"/><rect x="526" y="18" width="1" height="1" fill="#A8A598"/><rect x="528" y="18" width="1" height="1" fill="#A8A598"/><rect x="519" y="19" width="1" height="1" fill="#A8A598"/><rect x="521" y="19" width="1" height="1" fill="#A8A598"/><rect x="523" y="19" width="1" height="1" fill="#A8A598"/><rect x="525" y="19" width="1" height="1" fill="#FFFFFF"/><rect x="527" y="19" width="1" height="1" fill="#A8A598"/><rect x="529" y="19" width="1" height="1" fill="#A8A598"/><rect x="518" y="20" width="7" height="1" fill="#A8A598"/><rect x="525" y="20" width="1" height="1" fill="#FFFFFF"/><rect x="526" y="20" width="6" height="1" fill="#A8A598"/><rect x="518" y="21" width="1" height="1" fill="#A8A598"/><rect x="520" y="21" width="1" height="1" fill="#A8A598"/><rect x="522" y="21" width="1" height="1" fill="#A8A598"/><rect x="524" y="21" width="1" height="1" fill="#A8A598"/><rect x="526" y="21" width="1" height="1" fill="#A8A598"/><rect x="528" y="21" width="1" height="1" fill="#A8A598"/><rect x="530" y="21" width="1" height="1" fill="#A8A598"/><rect x="518" y="22" width="13" height="1" fill="#A8A598"/>
<rect x="548" y="10" width="3" height="1" fill="#000000"/><rect x="547" y="11" width="2" height="1" fill="#000000"/><rect x="551" y="11" width="1" height="1" fill="#000000"/><rect x="547" y="12" width="1" height="1" fill="#000000"/><rect x="545" y="13" width="5" height="1" fill="#000000"/><rect x="547" y="14" width="1" height="1" fill="#000000"/><rect x="546" y="15" width="2" height="1" fill="#000000"/><rect x="546" y="16" width="1" height="1" fill="#000000"/><rect x="550" y="16" width="1" height="1" fill="#000000"/><rect x="555" y="16" width="1" height="1" fill="#000000"/><rect x="546" y="17" width="1" height="1" fill="#000000"/><rect x="549" y="17" width="1" height="1" fill="#000000"/><rect x="551" y="17" width="1" height="1" fill="#000000"/><rect x="553" y="17" width="1" height="1" fill="#000000"/><rect x="556" y="17" width="1" height="1" fill="#000000"/><rect x="545" y="18" width="2" height="1" fill="#000000"/><rect x="549" y="18" width="1" height="1" fill="#000000"/><rect x="552" y="18" width="1" height="1" fill="#000000"/><rect x="556" y="18" width="1" height="1" fill="#000000"/><rect x="545" y="19" width="1" height="1" fill="#000000"/><rect x="549" y="19" width="1" height="1" fill="#000000"/><rect x="551" y="19" width="1" height="1" fill="#000000"/><rect x="553" y="19" width="1" height="1" fill="#000000"/><rect x="556" y="19" width="1" height="1" fill="#000000"/><rect x="544" y="20" width="2" height="1" fill="#000000"/><rect x="549" y="20" width="1" height="1" fill="#000000"/><rect x="555" y="20" width="1" height="1" fill="#000000"/><rect x="543" y="21" width="2" height="1" fill="#000000"/><rect x="550" y="21" width="1" height="1" fill="#000000"/><rect x="554" y="21" width="1" height="1" fill="#000000"/><rect x="542" y="22" width="2" height="1" fill="#000000"/>
<rect x="574" y="8" width="2" height="1" fill="#000000"/><rect x="574" y="9" width="3" height="1" fill="#000000"/><rect x="573" y="10" width="4" height="1" fill="#000000"/><rect x="573" y="11" width="5" height="1" fill="#000000"/><rect x="572" y="12" width="4" height="1" fill="#000000"/><rect x="577" y="12" width="2" height="1" fill="#000000"/><rect x="573" y="13" width="6" height="1" fill="#000000"/><rect x="574" y="14" width="2" height="1" fill="#000000"/><rect x="578" y="14" width="2" height="1" fill="#000000"/><rect x="573" y="15" width="7" height="1" fill="#000000"/><rect x="572" y="16" width="2" height="1" fill="#000000"/><rect x="578" y="16" width="2" height="1" fill="#000000"/><rect x="571" y="17" width="2" height="1" fill="#000000"/><rect x="574" y="17" width="5" height="1" fill="#000000"/><rect x="570" y="18" width="2" height="1" fill="#000000"/><rect x="569" y="19" width="2" height="1" fill="#000000"/><rect x="568" y="20" width="2" height="1" fill="#000000"/><rect x="575" y="20" width="1" height="1" fill="#000000"/><rect x="576" y="20" width="3" height="1" fill="#FFFF00"/><rect x="579" y="20" width="1" height="1" fill="#000000"/><rect x="567" y="21" width="15" height="1" fill="#000000"/>
<rect x="596" y="10" width="2" height="1" fill="#008000"/><rect x="594" y="11" width="6" height="1" fill="#008000"/><rect x="593" y="12" width="2" height="1" fill="#008000"/><rect x="596" y="12" width="2" height="1" fill="#008000"/><rect x="599" y="12" width="2" height="1" fill="#008000"/><rect x="593" y="13" width="2" height="1" fill="#008000"/><rect x="596" y="13" width="2" height="1" fill="#008000"/><rect x="593" y="14" width="5" height="1" fill="#008000"/><rect x="594" y="15" width="6" height="1" fill="#008000"/><rect x="596" y="16" width="5" height="1" fill="#008000"/><rect x="596" y="17" width="2" height="1" fill="#008000"/><rect x="599" y="17" width="2" height="1" fill="#008000"/><rect x="593" y="18" width="2" height="1" fill="#008000"/><rect x="596" y="18" width="2" height="1" fill="#008000"/><rect x="599" y="18" width="2" height="1" fill="#008000"/><rect x="594" y="19" width="6" height="1" fill="#008000"/><rect x="596" y="20" width="2" height="1" fill="#008000"/>
<rect x="616" y="9" width="3" height="1" fill="#000000"/><rect x="622" y="9" width="3" height="1" fill="#000000"/><rect x="616" y="10" width="1" height="1" fill="#000000"/><rect x="617" y="10" width="1" height="1" fill="#FFFFFF"/><rect x="618" y="10" width="1" height="1" fill="#000000"/><rect x="622" y="10" width="1" height="1" fill="#000000"/><rect x="623" y="10" width="1" height="1" fill="#FFFFFF"/><rect x="624" y="10" width="1" height="1" fill="#000000"/><rect x="615" y="11" width="5" height="1" fill="#000000"/><rect x="621" y="11" width="5" height="1" fill="#000000"/><rect x="615" y="12" width="1" height="1" fill="#000000"/><rect x="616" y="12" width="1" height="1" fill="#FFFFFF"/><rect x="617" y="12" width="3" height="1" fill="#000000"/><rect x="621" y="12" width="1" height="1" fill="#000000"/><rect x="622" y="12" width="1" height="1" fill="#FFFFFF"/><rect x="623" y="12" width="3" height="1" fill="#000000"/><rect x="615" y="13" width="1" height="1" fill="#000000"/><rect x="616" y="13" width="1" height="1" fill="#FFFFFF"/><rect x="617" y="13" width="5" height="1" fill="#000000"/><rect x="622" y="13" width="1" height="1" fill="#FFFFFF"/><rect x="623" y="13" width="3" height="1" fill="#000000"/><rect x="614" y="14" width="1" height="1" fill="#000000"/><rect x="615" y="14" width="1" height="1" fill="#FFFFFF"/><rect x="616" y="14" width="5" height="1" fill="#000000"/><rect x="621" y="14" width="1" height="1" fill="#FFFFFF"/><rect x="622" y="14" width="5" height="1" fill="#000000"/><rect x="614" y="15" width="1" height="1" fill="#000000"/><rect x="615" y="15" width="1" height="1" fill="#FFFFFF"/><rect x="616" y="15" width="5" height="1" fill="#000000"/><rect x="621" y="15" width="1" height="1" fill="#FFFFFF"/><rect x="622" y="15" width="5" height="1" fill="#000000"/><rect x="614" y="16" width="1" height="1" fill="#000000"/><rect x="615" y="16" width="1" height="1" fill="#FFFFFF"/><rect x="616" y="16" width="11" height="1" fill="#000000"/><rect x="614" y="17" width="6" height="1" fill="#000000"/><rect x="621" y="17" width="6" height="1" fill="#000000"/><rect x="614" y="18" width="1" height="1" fill="#000000"/><rect x="615" y="18" width="1" height="1" fill="#FFFFFF"/><rect x="616" y="18" width="4" height="1" fill="#000000"/><rect x="621" y="18" width="1" height="1" fill="#000000"/><rect x="622" y="18" width="1" height="1" fill="#FFFFFF"/><rect x="623" y="18" width="4" height="1" fill="#000000"/><rect x="614" y="19" width="1" height="1" fill="#000000"/><rect x="615" y="19" width="1" height="1" fill="#FFFFFF"/><rect x="616" y="19" width="4" height="1" fill="#000000"/><rect x="621" y="19" width="1" height="1" fill="#000000"/><rect x="622" y="19" width="1" height="1" fill="#FFFFFF"/><rect x="623" y="19" width="4" height="1" fill="#000000"/><rect x="614" y="20" width="6" height="1" fill="#000000"/><rect x="621" y="20" width="6" height="1" fill="#000000"/><rect x="614" y="21" width="6" height="1" fill="#000000"/><rect x="621" y="21" width="6" height="1" fill="#000000"/>
<rect x="649" y="8" width="4" height="1" fill="#808000"/><rect x="640" y="9" width="4" height="1" fill="#808000"/><rect x="648" y="9" width="1" height="1" fill="#808000"/><rect x="649" y="9" width="1" height="1" fill="#FFFF00"/><rect x="650" y="9" width="1" height="1" fill="#FFFFFF"/><rect x="651" y="9" width="1" height="1" fill="#FFFF00"/><rect x="652" y="9" width="1" height="1" fill="#FFFFFF"/><rect x="653" y="9" width="1" height="1" fill="#808000"/><rect x="639" y="10" width="1" height="1" fill="#808000"/><rect x="640" y="10" width="1" height="1" fill="#FFFF00"/><rect x="641" y="10" width="1" height="1" fill="#FFFFFF"/><rect x="642" y="10" width="1" height="1" fill="#FFFF00"/><rect x="643" y="10" width="1" height="1" fill="#FFFFFF"/><rect x="644" y="10" width="1" height="1" fill="#808000"/><rect x="647" y="10" width="1" height="1" fill="#808000"/><rect x="648" y="10" width="1" height="1" fill="#FFFFFF"/><rect x="649" y="10" width="1" height="1" fill="#FFFF00"/><rect x="650" y="10" width="1" height="1" fill="#FFFFFF"/><rect x="651" y="10" width="1" height="1" fill="#FFFF00"/><rect x="652" y="10" width="1" height="1" fill="#FFFFFF"/><rect x="653" y="10" width="1" height="1" fill="#FFFF00"/><rect x="654" y="10" width="1" height="1" fill="#808000"/><rect x="638" y="11" width="1" height="1" fill="#808000"/><rect x="639" y="11" width="1" height="1" fill="#FFFF00"/><rect x="640" y="11" width="1" height="1" fill="#FFFFFF"/><rect x="641" y="11" width="1" height="1" fill="#FFFF00"/><rect x="642" y="11" width="1" height="1" fill="#FFFFFF"/><rect x="643" y="11" width="1" height="1" fill="#FFFF00"/><rect x="644" y="11" width="1" height="1" fill="#FFFFFF"/><rect x="645" y="11" width="2" height="1" fill="#808000"/><rect x="647" y="11" width="1" height="1" fill="#FFFF00"/><rect x="648" y="11" width="1" height="1" fill="#FFFFFF"/><rect x="649" y="11" width="1" height="1" fill="#FFFF00"/><rect x="650" y="11" width="1" height="1" fill="#FFFFFF"/><rect x="651" y="11" width="1" height="1" fill="#FFFF00"/><rect x="652" y="11" width="1" height="1" fill="#FFFFFF"/><rect x="653" y="11" width="1" height="1" fill="#FFFF00"/><rect x="654" y="11" width="1" height="1" fill="#808000"/><rect x="638" y="12" width="1" height="1" fill="#808000"/><rect x="639" y="12" width="1" height="1" fill="#FFFFFF"/><rect x="640" y="12" width="1" height="1" fill="#FFFF00"/><rect x="641" y="12" width="1" height="1" fill="#FFFFFF"/><rect x="642" y="12" width="1" height="1" fill="#FFFF00"/><rect x="643" y="12" width="1" height="1" fill="#FFFFFF"/><rect x="644" y="12" width="1" height="1" fill="#FFFF00"/><rect x="645" y="12" width="1" height="1" fill="#FFFFFF"/><rect x="646" y="12" width="1" height="1" fill="#808000"/><rect x="647" y="12" width="1" height="1" fill="#FFFFFF"/><rect x="648" y="12" width="1" height="1" fill="#FFFF00"/><rect x="649" y="12" width="1" height="1" fill="#FFFFFF"/><rect x="650" y="12" width="1" height="1" fill="#FFFF00"/><rect x="651" y="12" width="1" height="1" fill="#FFFFFF"/><rect x="652" y="12" width="1" height="1" fill="#FFFF00"/><rect x="653" y="12" width="1" height="1" fill="#FFFFFF"/><rect x="654" y="12" width="1" height="1" fill="#808000"/><rect x="638" y="13" width="1" height="1" fill="#808000"/><rect x="639" y="13" width="1" height="1" fill="#FFFF00"/><rect x="640" y="13" width="1" height="1" fill="#FFFFFF"/><rect x="641" y="13" width="1" height="1" fill="#FFFF00"/><rect x="642" y="13" width="1" height="1" fill="#FFFFFF"/><rect x="643" y="13" width="1" height="1" fill="#FFFF00"/><rect x="644" y="13" width="1" height="1" fill="#FFFFFF"/><rect x="645" y="13" width="1" height="1" fill="#FFFF00"/><rect x="646" y="13" width="1" height="1" fill="#808000"/><rect x="647" y="13" width="1" height="1" fill="#FFFF00"/><rect x="648" y="13" width="1" height="1" fill="#FFFFFF"/><rect x="649" y="13" width="1" height="1" fill="#FFFF00"/><rect x="650" y="13" width="1" height="1" fill="#FFFFFF"/><rect x="651" y="13" width="1" height="1" fill="#FFFF00"/><rect x="652" y="13" width="1" height="1" fill="#FFFFFF"/><rect x="653" y="13" width="1" height="1" fill="#FFFF00"/><rect x="654" y="13" width="1" height="1" fill="#808000"/><rect x="638" y="14" width="1" height="1" fill="#808000"/><rect x="639" y="14" width="1" height="1" fill="#FFFFFF"/><rect x="640" y="14" width="1" height="1" fill="#FFFF00"/><rect x="641" y="14" width="1" height="1" fill="#FFFFFF"/><rect x="642" y="14" width="1" height="1" fill="#FFFF00"/><rect x="643" y="14" width="1" height="1" fill="#FFFFFF"/><rect x="644" y="14" width="1" height="1" fill="#FFFF00"/><rect x="645" y="14" width="1" height="1" fill="#FFFFFF"/><rect x="646" y="14" width="2" height="1" fill="#808000"/><rect x="648" y="14" width="1" height="1" fill="#FFFFFF"/><rect x="649" y="14" width="1" height="1" fill="#FFFF00"/><rect x="650" y="14" width="1" height="1" fill="#FFFFFF"/><rect x="651" y="14" width="1" height="1" fill="#FFFF00"/><rect x="652" y="14" width="1" height="1" fill="#FFFFFF"/><rect x="653" y="14" width="1" height="1" fill="#808000"/><rect x="639" y="15" width="1" height="1" fill="#808000"/><rect x="640" y="15" width="1" height="1" fill="#FFFF00"/><rect x="641" y="15" width="1" height="1" fill="#FFFFFF"/><rect x="642" y="15" width="1" height="1" fill="#FFFF00"/><rect x="643" y="15" width="1" height="1" fill="#FFFFFF"/><rect x="644" y="15" width="1" height="1" fill="#FFFF00"/><rect x="645" y="15" width="1" height="1" fill="#808000"/><rect x="648" y="15" width="5" height="1" fill="#808000"/><rect x="640" y="16" width="4" height="1" fill="#808000"/><rect x="648" y="17" width="5" height="1" fill="#0000FF"/><rect x="639" y="18" width="3" height="1" fill="#008000"/><rect x="642" y="18" width="2" height="1" fill="#00FFFF"/><rect x="646" y="18" width="8" height="1" fill="#0000FF"/><rect x="638" y="19" width="5" height="1" fill="#008000"/><rect x="643" y="19" width="2" height="1" fill="#00FFFF"/><rect x="645" y="19" width="10" height="1" fill="#0000FF"/><rect x="638" y="20" width="5" height="1" fill="#008000"/><rect x="643" y="20" width="12" height="1" fill="#0000FF"/><rect x="638" y="21" width="5" height="1" fill="#008000"/><rect x="643" y="21" width="12" height="1" fill="#0000FF"/><rect x="638" y="22" width="5" height="1" fill="#008000"/><rect x="643" y="22" width="12" height="1" fill="#0000FF"/>
<rect x="667" y="8" width="1" height="1" fill="#000000"/><rect x="667" y="9" width="2" height="1" fill="#000000"/><rect x="676" y="9" width="5" height="1" fill="#000080"/><rect x="667" y="10" width="3" height="1" fill="#000000"/><rect x="675" y="10" width="3" height="1" fill="#000080"/><rect x="679" y="10" width="3" height="1" fill="#000080"/><rect x="667" y="11" width="4" height="1" fill="#000000"/><rect x="675" y="11" width="3" height="1" fill="#000080"/><rect x="680" y="11" width="2" height="1" fill="#000080"/><rect x="667" y="12" width="5" height="1" fill="#000000"/><rect x="680" y="12" width="2" height="1" fill="#000080"/><rect x="667" y="13" width="6" height="1" fill="#000000"/><rect x="679" y="13" width="2" height="1" fill="#000080"/><rect x="667" y="14" width="7" height="1" fill="#000000"/><rect x="678" y="14" width="2" height="1" fill="#000080"/><rect x="667" y="15" width="4" height="1" fill="#000000"/><rect x="678" y="15" width="2" height="1" fill="#000080"/><rect x="667" y="16" width="2" height="1" fill="#000000"/><rect x="670" y="16" width="2" height="1" fill="#000000"/><rect x="678" y="16" width="2" height="1" fill="#000080"/><rect x="667" y="17" width="1" height="1" fill="#000000"/><rect x="670" y="17" width="2" height="1" fill="#000000"/><rect x="671" y="18" width="2" height="1" fill="#000000"/><rect x="678" y="18" width="3" height="1" fill="#000080"/><rect x="671" y="19" width="2" height="1" fill="#000000"/><rect x="678" y="19" width="3" height="1" fill="#000080"/><rect x="672" y="20" width="2" height="1" fill="#000000"/>
<rect x="712" y="10" width="8" height="1" fill="#000080"/><rect x="712" y="11" width="1" height="1" fill="#000080"/><rect x="713" y="11" width="1" height="1" fill="#FFFFFF"/><rect x="714" y="11" width="7" height="1" fill="#000080"/><rect x="712" y="12" width="1" height="1" fill="#000080"/><rect x="713" y="12" width="1" height="1" fill="#FFFFFF"/><rect x="714" y="12" width="1" height="1" fill="#000080"/><rect x="715" y="12" width="1" height="1" fill="#FFFFFF"/><rect x="716" y="12" width="7" height="1" fill="#000080"/><rect x="712" y="13" width="1" height="1" fill="#000080"/><rect x="713" y="13" width="1" height="1" fill="#FFFFFF"/><rect x="714" y="13" width="1" height="1" fill="#000080"/><rect x="715" y="13" width="1" height="1" fill="#FFFFFF"/><rect x="716" y="13" width="10" height="1" fill="#000080"/><rect x="712" y="14" width="1" height="1" fill="#000080"/><rect x="713" y="14" width="1" height="1" fill="#FFFFFF"/><rect x="714" y="14" width="1" height="1" fill="#000080"/><rect x="715" y="14" width="1" height="1" fill="#FFFFFF"/><rect x="716" y="14" width="1" height="1" fill="#000080"/><rect x="717" y="14" width="1" height="1" fill="#FFFFFF"/><rect x="718" y="14" width="9" height="1" fill="#000080"/><rect x="712" y="15" width="1" height="1" fill="#000080"/><rect x="713" y="15" width="1" height="1" fill="#FFFFFF"/><rect x="714" y="15" width="1" height="1" fill="#000080"/><rect x="715" y="15" width="1" height="1" fill="#FFFFFF"/><rect x="716" y="15" width="12" height="1" fill="#000080"/><rect x="712" y="16" width="3" height="1" fill="#000080"/><rect x="715" y="16" width="1" height="1" fill="#FFFFFF"/><rect x="716" y="16" width="1" height="1" fill="#000080"/><rect x="717" y="16" width="10" height="1" fill="#FFFFFF"/><rect x="727" y="16" width="1" height="1" fill="#000080"/><rect x="714" y="17" width="3" height="1" fill="#000080"/><rect x="717" y="17" width="10" height="1" fill="#FFFFFF"/><rect x="727" y="17" width="1" height="1" fill="#000080"/><rect x="716" y="18" width="1" height="1" fill="#000080"/><rect x="717" y="18" width="10" height="1" fill="#FFFFFF"/><rect x="727" y="18" width="1" height="1" fill="#000080"/><rect x="716" y="19" width="1" height="1" fill="#000080"/><rect x="717" y="19" width="10" height="1" fill="#FFFFFF"/><rect x="727" y="19" width="1" height="1" fill="#000080"/><rect x="716" y="20" width="12" height="1" fill="#000080"/><rect x="716" y="21" width="12" height="1" fill="#000080"/>
<rect x="737" y="8" width="15" height="1" fill="#000080"/><rect x="737" y="9" width="2" height="1" fill="#000080"/><rect x="739" y="9" width="1" height="1" fill="#FFFFFF"/><rect x="740" y="9" width="6" height="1" fill="#000080"/><rect x="746" y="9" width="1" height="1" fill="#FFFFFF"/><rect x="747" y="9" width="5" height="1" fill="#000080"/><rect x="737" y="10" width="15" height="1" fill="#000080"/><rect x="737" y="11" width="2" height="1" fill="#000080"/><rect x="739" y="11" width="6" height="1" fill="#FFFFFF"/><rect x="745" y="11" width="1" height="1" fill="#000080"/><rect x="746" y="11" width="5" height="1" fill="#FFFFFF"/><rect x="751" y="11" width="1" height="1" fill="#000080"/><rect x="737" y="12" width="2" height="1" fill="#000080"/><rect x="739" y="12" width="6" height="1" fill="#FFFFFF"/><rect x="745" y="12" width="1" height="1" fill="#000080"/><rect x="746" y="12" width="5" height="1" fill="#FFFFFF"/><rect x="751" y="12" width="1" height="1" fill="#000080"/><rect x="737" y="13" width="2" height="1" fill="#000080"/><rect x="739" y="13" width="6" height="1" fill="#FFFFFF"/><rect x="745" y="13" width="1" height="1" fill="#000080"/><rect x="746" y="13" width="5" height="1" fill="#FFFFFF"/><rect x="751" y="13" width="1" height="1" fill="#000080"/><rect x="737" y="14" width="2" height="1" fill="#000080"/><rect x="739" y="14" width="6" height="1" fill="#FFFFFF"/><rect x="745" y="14" width="1" height="1" fill="#000080"/><rect x="746" y="14" width="5" height="1" fill="#FFFFFF"/><rect x="751" y="14" width="1" height="1" fill="#000080"/><rect x="737" y="15" width="2" height="1" fill="#000080"/><rect x="739" y="15" width="6" height="1" fill="#FFFFFF"/><rect x="745" y="15" width="1" height="1" fill="#000080"/><rect x="746" y="15" width="5" height="1" fill="#FFFFFF"/><rect x="751" y="15" width="1" height="1" fill="#000080"/><rect x="737" y="16" width="2" height="1" fill="#000080"/><rect x="739" y="16" width="6" height="1" fill="#FFFFFF"/><rect x="745" y="16" width="1" height="1" fill="#000080"/><rect x="746" y="16" width="5" height="1" fill="#FFFFFF"/><rect x="751" y="16" width="1" height="1" fill="#000080"/><rect x="737" y="17" width="2" height="1" fill="#000080"/><rect x="739" y="17" width="6" height="1" fill="#FFFFFF"/><rect x="745" y="17" width="1" height="1" fill="#000080"/><rect x="746" y="17" width="5" height="1" fill="#FFFFFF"/><rect x="751" y="17" width="1" height="1" fill="#000080"/><rect x="737" y="18" width="2" height="1" fill="#000080"/><rect x="739" y="18" width="6" height="1" fill="#FFFFFF"/><rect x="745" y="18" width="1" height="1" fill="#000080"/><rect x="746" y="18" width="5" height="1" fill="#FFFFFF"/><rect x="751" y="18" width="1" height="1" fill="#000080"/><rect x="737" y="19" width="2" height="1" fill="#000080"/><rect x="739" y="19" width="6" height="1" fill="#FFFFFF"/><rect x="745" y="19" width="1" height="1" fill="#000080"/><rect x="746" y="19" width="5" height="1" fill="#FFFFFF"/><rect x="751" y="19" width="1" height="1" fill="#000080"/><rect x="737" y="20" width="2" height="1" fill="#000080"/><rect x="739" y="20" width="6" height="1" fill="#FFFFFF"/><rect x="745" y="20" width="1" height="1" fill="#000080"/><rect x="746" y="20" width="5" height="1" fill="#FFFFFF"/><rect x="751" y="20" width="1" height="1" fill="#000080"/><rect x="737" y="21" width="2" height="1" fill="#000080"/><rect x="739" y="21" width="6" height="1" fill="#FFFFFF"/><rect x="745" y="21" width="1" height="1" fill="#000080"/><rect x="746" y="21" width="5" height="1" fill="#FFFFFF"/><rect x="751" y="21" width="1" height="1" fill="#000080"/><rect x="737" y="22" width="15" height="1" fill="#000080"/>
<rect x="761" y="8" width="15" height="1" fill="#000080"/><rect x="761" y="9" width="2" height="1" fill="#000080"/><rect x="763" y="9" width="1" height="1" fill="#FFFFFF"/><rect x="764" y="9" width="12" height="1" fill="#000080"/><rect x="761" y="10" width="15" height="1" fill="#000080"/><rect x="761" y="11" width="2" height="1" fill="#000080"/><rect x="763" y="11" width="12" height="1" fill="#FFFFFF"/><rect x="775" y="11" width="1" height="1" fill="#000080"/><rect x="761" y="12" width="2" height="1" fill="#000080"/><rect x="763" y="12" width="12" height="1" fill="#FFFFFF"/><rect x="775" y="12" width="1" height="1" fill="#000080"/><rect x="761" y="13" width="2" height="1" fill="#000080"/><rect x="763" y="13" width="12" height="1" fill="#FFFFFF"/><rect x="775" y="13" width="1" height="1" fill="#000080"/><rect x="761" y="14" width="2" height="1" fill="#000080"/><rect x="763" y="14" width="12" height="1" fill="#FFFFFF"/><rect x="775" y="14" width="1" height="1" fill="#000080"/><rect x="761" y="15" width="15" height="1" fill="#000080"/><rect x="761" y="16" width="2" height="1" fill="#000080"/><rect x="763" y="16" width="1" height="1" fill="#FFFFFF"/><rect x="764" y="16" width="12" height="1" fill="#000080"/><rect x="761" y="17" width="15" height="1" fill="#000080"/><rect x="761" y="18" width="2" height="1" fill="#000080"/><rect x="763" y="18" width="12" height="1" fill="#FFFFFF"/><rect x="775" y="18" width="1" height="1" fill="#000080"/><rect x="761" y="19" width="2" height="1" fill="#000080"/><rect x="763" y="19" width="12" height="1" fill="#FFFFFF"/><rect x="775" y="19" width="1" height="1" fill="#000080"/><rect x="761" y="20" width="2" height="1" fill="#000080"/><rect x="763" y="20" width="12" height="1" fill="#FFFFFF"/><rect x="775" y="20" width="1" height="1" fill="#000080"/><rect x="761" y="21" width="2" height="1" fill="#000080"/><rect x="763" y="21" width="12" height="1" fill="#FFFFFF"/><rect x="775" y="21" width="1" height="1" fill="#000080"/><rect x="761" y="22" width="15" height="1" fill="#000080"/>
<rect x="785" y="8" width="15" height="1" fill="#000080"/><rect x="785" y="9" width="2" height="1" fill="#000080"/><rect x="787" y="9" width="1" height="1" fill="#FFFFFF"/><rect x="788" y="9" width="6" height="1" fill="#000080"/><rect x="794" y="9" width="1" height="1" fill="#FFFFFF"/><rect x="795" y="9" width="5" height="1" fill="#000080"/><rect x="785" y="10" width="15" height="1" fill="#000080"/><rect x="785" y="11" width="2" height="1" fill="#000080"/><rect x="787" y="11" width="6" height="1" fill="#FFFFFF"/><rect x="793" y="11" width="1" height="1" fill="#000080"/><rect x="794" y="11" width="5" height="1" fill="#FFFFFF"/><rect x="799" y="11" width="1" height="1" fill="#000080"/><rect x="785" y="12" width="2" height="1" fill="#000080"/><rect x="787" y="12" width="6" height="1" fill="#FFFFFF"/><rect x="793" y="12" width="1" height="1" fill="#000080"/><rect x="794" y="12" width="5" height="1" fill="#FFFFFF"/><rect x="799" y="12" width="1" height="1" fill="#000080"/><rect x="785" y="13" width="2" height="1" fill="#000080"/><rect x="787" y="13" width="6" height="1" fill="#FFFFFF"/><rect x="793" y="13" width="1" height="1" fill="#000080"/><rect x="794" y="13" width="5" height="1" fill="#FFFFFF"/><rect x="799" y="13" width="1" height="1" fill="#000080"/><rect x="785" y="14" width="2" height="1" fill="#000080"/><rect x="787" y="14" width="6" height="1" fill="#FFFFFF"/><rect x="793" y="14" width="1" height="1" fill="#000080"/><rect x="794" y="14" width="5" height="1" fill="#FFFFFF"/><rect x="799" y="14" width="1" height="1" fill="#000080"/><rect x="785" y="15" width="15" height="1" fill="#000080"/><rect x="785" y="16" width="2" height="1" fill="#000080"/><rect x="787" y="16" width="1" height="1" fill="#FFFFFF"/><rect x="788" y="16" width="6" height="1" fill="#000080"/><rect x="794" y="16" width="1" height="1" fill="#FFFFFF"/><rect x="795" y="16" width="5" height="1" fill="#000080"/><rect x="785" y="17" width="15" height="1" fill="#000080"/><rect x="785" y="18" width="2" height="1" fill="#000080"/><rect x="787" y="18" width="6" height="1" fill="#FFFFFF"/><rect x="793" y="18" width="1" height="1" fill="#000080"/><rect x="794" y="18" width="5" height="1" fill="#FFFFFF"/><rect x="799" y="18" width="1" height="1" fill="#000080"/><rect x="785" y="19" width="2" height="1" fill="#000080"/><rect x="787" y="19" width="6" height="1" fill="#FFFFFF"/><rect x="793" y="19" width="1" height="1" fill="#000080"/><rect x="794" y="19" width="5" height="1" fill="#FFFFFF"/><rect x="799" y="19" width="1" height="1" fill="#000080"/><rect x="785" y="20" width="2" height="1" fill="#000080"/><rect x="787" y="20" width="6" height="1" fill="#FFFFFF"/><rect x="793" y="20" width="1" height="1" fill="#000080"/><rect x="794" y="20" width="5" height="1" fill="#FFFFFF"/><rect x="799" y="20" width="1" height="1" fill="#000080"/><rect x="785" y="21" width="2" height="1" fill="#000080"/><rect x="787" y="21" width="6" height="1" fill="#FFFFFF"/><rect x="793" y="21" width="1" height="1" fill="#000080"/><rect x="794" y="21" width="5" height="1" fill="#FFFFFF"/><rect x="799" y="21" width="1" height="1" fill="#000080"/><rect x="785" y="22" width="15" height="1" fill="#000080"/>
<rect x="809" y="8" width="15" height="1" fill="#000080"/><rect x="809" y="9" width="2" height="1" fill="#000080"/><rect x="811" y="9" width="1" height="1" fill="#FFFFFF"/><rect x="812" y="9" width="6" height="1" fill="#000080"/><rect x="818" y="9" width="1" height="1" fill="#FFFFFF"/><rect x="819" y="9" width="5" height="1" fill="#000080"/><rect x="809" y="10" width="15" height="1" fill="#000080"/><rect x="809" y="11" width="2" height="1" fill="#000080"/><rect x="811" y="11" width="6" height="1" fill="#FFFFFF"/><rect x="817" y="11" width="1" height="1" fill="#000080"/><rect x="818" y="11" width="5" height="1" fill="#FFFFFF"/><rect x="823" y="11" width="1" height="1" fill="#000080"/><rect x="809" y="12" width="2" height="1" fill="#000080"/><rect x="811" y="12" width="6" height="1" fill="#FFFFFF"/><rect x="817" y="12" width="1" height="1" fill="#000080"/><rect x="818" y="12" width="5" height="1" fill="#FFFFFF"/><rect x="823" y="12" width="1" height="1" fill="#000080"/><rect x="809" y="13" width="2" height="1" fill="#000080"/><rect x="811" y="13" width="6" height="1" fill="#FFFFFF"/><rect x="817" y="13" width="1" height="1" fill="#000080"/><rect x="818" y="13" width="5" height="1" fill="#FFFFFF"/><rect x="823" y="13" width="1" height="1" fill="#000080"/><rect x="809" y="14" width="2" height="1" fill="#000080"/><rect x="811" y="14" width="6" height="1" fill="#FFFFFF"/><rect x="817" y="14" width="1" height="1" fill="#000080"/><rect x="818" y="14" width="5" height="1" fill="#FFFFFF"/><rect x="823" y="14" width="1" height="1" fill="#000080"/><rect x="809" y="15" width="15" height="1" fill="#000080"/><rect x="809" y="16" width="2" height="1" fill="#000080"/><rect x="811" y="16" width="1" height="1" fill="#FFFFFF"/><rect x="812" y="16" width="6" height="1" fill="#000080"/><rect x="818" y="16" width="1" height="1" fill="#FFFFFF"/><rect x="819" y="16" width="5" height="1" fill="#000080"/><rect x="809" y="17" width="15" height="1" fill="#000080"/><rect x="809" y="18" width="2" height="1" fill="#000080"/><rect x="811" y="18" width="6" height="1" fill="#FFFFFF"/><rect x="817" y="18" width="1" height="1" fill="#000080"/><rect x="818" y="18" width="5" height="1" fill="#FFFFFF"/><rect x="823" y="18" width="1" height="1" fill="#000080"/><rect x="809" y="19" width="2" height="1" fill="#000080"/><rect x="811" y="19" width="6" height="1" fill="#FFFFFF"/><rect x="817" y="19" width="1" height="1" fill="#000080"/><rect x="818" y="19" width="5" height="1" fill="#FFFFFF"/><rect x="823" y="19" width="1" height="1" fill="#000080"/><rect x="809" y="20" width="2" height="1" fill="#000080"/><rect x="811" y="20" width="6" height="1" fill="#FFFFFF"/><rect x="817" y="20" width="1" height="1" fill="#000080"/><rect x="818" y="20" width="5" height="1" fill="#FFFFFF"/><rect x="823" y="20" width="1" height="1" fill="#000080"/><rect x="809" y="21" width="2" height="1" fill="#000080"/><rect x="811" y="21" width="6" height="1" fill="#FFFFFF"/><rect x="817" y="21" width="1" height="1" fill="#000080"/><rect x="818" y="21" width="5" height="1" fill="#FFFFFF"/><rect x="823" y="21" width="1" height="1" fill="#000080"/><rect x="809" y="22" width="15" height="1" fill="#000080"/>
<rect x="814" y="12" width="2" height="1" fill="#E8E000"/><rect x="817" y="12" width="2" height="1" fill="#E8E000"/><rect x="822" y="12" width="1" height="1" fill="#E00000"/><rect x="813" y="13" width="7" height="1" fill="#E8E000"/><rect x="821" y="13" width="2" height="1" fill="#E00000"/><rect x="812" y="14" width="3" height="1" fill="#E8E000"/><rect x="815" y="14" width="3" height="1" fill="#404000"/><rect x="818" y="14" width="3" height="1" fill="#E8E000"/><rect x="822" y="14" width="1" height="1" fill="#E00000"/><rect x="812" y="15" width="2" height="1" fill="#E8E000"/><rect x="814" y="15" width="1" height="1" fill="#404000"/><rect x="818" y="15" width="1" height="1" fill="#404000"/><rect x="819" y="15" width="2" height="1" fill="#E8E000"/><rect x="811" y="16" width="3" height="1" fill="#E8E000"/><rect x="814" y="16" width="1" height="1" fill="#404000"/><rect x="816" y="16" width="1" height="1" fill="#000000"/><rect x="818" y="16" width="1" height="1" fill="#404000"/><rect x="819" y="16" width="3" height="1" fill="#E8E000"/><rect x="812" y="17" width="2" height="1" fill="#E8E000"/><rect x="814" y="17" width="1" height="1" fill="#404000"/><rect x="818" y="17" width="1" height="1" fill="#404000"/><rect x="819" y="17" width="2" height="1" fill="#E8E000"/><rect x="812" y="18" width="3" height="1" fill="#E8E000"/><rect x="815" y="18" width="3" height="1" fill="#404000"/><rect x="818" y="18" width="3" height="1" fill="#E8E000"/><rect x="813" y="19" width="7" height="1" fill="#E8E000"/><rect x="814" y="20" width="2" height="1" fill="#E8E000"/><rect x="817" y="20" width="2" height="1" fill="#E8E000"/>
<rect x="3.5" y="43.5" width="23" height="21" rx="3" fill="#FFFFFF" stroke="#98B4D8"/>
<rect x="12" y="46" width="1" height="1" fill="#000000"/><rect x="12" y="47" width="2" height="1" fill="#000000"/><rect x="12" y="48" width="1" height="1" fill="#000000"/><rect x="13" y="48" width="1" height="1" fill="#FFFFFF"/><rect x="14" y="48" width="1" height="1" fill="#000000"/><rect x="12" y="49" width="1" height="1" fill="#000000"/><rect x="13" y="49" width="2" height="1" fill="#FFFFFF"/><rect x="15" y="49" width="1" height="1" fill="#000000"/><rect x="12" y="50" width="1" height="1" fill="#000000"/><rect x="13" y="50" width="3" height="1" fill="#FFFFFF"/><rect x="16" y="50" width="1" height="1" fill="#000000"/><rect x="12" y="51" width="1" height="1" fill="#000000"/><rect x="13" y="51" width="4" height="1" fill="#FFFFFF"/><rect x="17" y="51" width="1" height="1" fill="#000000"/><rect x="12" y="52" width="1" height="1" fill="#000000"/><rect x="13" y="52" width="5" height="1" fill="#FFFFFF"/><rect x="18" y="52" width="1" height="1" fill="#000000"/><rect x="12" y="53" width="1" height="1" fill="#000000"/><rect x="13" y="53" width="6" height="1" fill="#FFFFFF"/><rect x="19" y="53" width="1" height="1" fill="#000000"/><rect x="12" y="54" width="1" height="1" fill="#000000"/><rect x="13" y="54" width="3" height="1" fill="#FFFFFF"/><rect x="16" y="54" width="5" height="1" fill="#000000"/><rect x="12" y="55" width="1" height="1" fill="#000000"/><rect x="13" y="55" width="1" height="1" fill="#FFFFFF"/><rect x="14" y="55" width="1" height="1" fill="#000000"/><rect x="15" y="55" width="2" height="1" fill="#FFFFFF"/><rect x="17" y="55" width="1" height="1" fill="#000000"/><rect x="12" y="56" width="2" height="1" fill="#000000"/><rect x="15" y="56" width="1" height="1" fill="#000000"/><rect x="16" y="56" width="2" height="1" fill="#FFFFFF"/><rect x="18" y="56" width="1" height="1" fill="#000000"/><rect x="12" y="57" width="1" height="1" fill="#000000"/><rect x="16" y="57" width="1" height="1" fill="#000000"/><rect x="17" y="57" width="1" height="1" fill="#FFFFFF"/><rect x="18" y="57" width="1" height="1" fill="#000000"/><rect x="16" y="58" width="1" height="1" fill="#000000"/><rect x="17" y="58" width="2" height="1" fill="#FFFFFF"/><rect x="19" y="58" width="1" height="1" fill="#000000"/><rect x="17" y="59" width="2" height="1" fill="#000000"/>
<rect x="8" y="75" width="14" height="1" fill="#000000"/>
<rect x="14" y="69" width="1" height="13" fill="#000000"/>
<path d="M10,98 L21.5,109.5" stroke="#000" stroke-width="1" shape-rendering="crispEdges"/>
<rect x="8" y="125" width="15" height="1" fill="#000000"/>
<rect x="15" y="140" width="1" height="14" fill="#000000"/>
<path d="M8,163 L21.5,176.5" stroke="#000" stroke-width="1" shape-rendering="crispEdges"/>
<rect x="16" y="163" width="3" height="1" fill="#000000"/><rect x="17" y="164" width="1" height="1" fill="#000000"/><rect x="17" y="165" width="1" height="1" fill="#000000"/><rect x="17" y="166" width="1" height="1" fill="#000000"/><rect x="20" y="166" width="1" height="1" fill="#000000"/><rect x="16" y="167" width="5" height="1" fill="#000000"/>
<rect x="10" y="169" width="3" height="1" fill="#000000"/><rect x="9" y="170" width="1" height="1" fill="#000000"/><rect x="12" y="170" width="1" height="1" fill="#000000"/><rect x="9" y="171" width="2" height="1" fill="#000000"/><rect x="10" y="172" width="2" height="1" fill="#000000"/><rect x="9" y="173" width="1" height="1" fill="#000000"/><rect x="11" y="173" width="2" height="1" fill="#000000"/><rect x="9" y="174" width="1" height="1" fill="#000000"/><rect x="12" y="174" width="1" height="1" fill="#000000"/><rect x="9" y="175" width="3" height="1" fill="#000000"/>
<defs><linearGradient id="dab" x1="0" y1="0" x2="1" y2="1"><stop offset="0" stop-color="#D6E2FC"/><stop offset="1" stop-color="#B4CAF8"/></linearGradient></defs>
<rect x="3" y="202" width="24" height="22" fill="#FFFFFF" />
<rect x="4" y="203" width="22" height="20" rx="2" fill="url(#dab)"/>
<rect x="11" y="209" width="1" height="1" fill="#4D6185"/><rect x="18" y="209" width="1" height="1" fill="#4D6185"/><rect x="10" y="210" width="2" height="1" fill="#4D6185"/><rect x="18" y="210" width="2" height="1" fill="#4D6185"/><rect x="9" y="211" width="3" height="1" fill="#4D6185"/><rect x="18" y="211" width="3" height="1" fill="#4D6185"/><rect x="8" y="212" width="3" height="1" fill="#4D6185"/><rect x="19" y="212" width="3" height="1" fill="#4D6185"/><rect x="9" y="213" width="3" height="1" fill="#4D6185"/><rect x="18" y="213" width="3" height="1" fill="#4D6185"/><rect x="10" y="214" width="2" height="1" fill="#4D6185"/><rect x="18" y="214" width="2" height="1" fill="#4D6185"/><rect x="11" y="215" width="1" height="1" fill="#4D6185"/><rect x="18" y="215" width="1" height="1" fill="#4D6185"/>
<path d="M7.5,245 A7.5,7.5 0 0 1 22.5,245 M10.5,245 A4.5,4.5 0 0 1 19.5,245 M13.5,245 A1.5,1.5 0 0 1 16.5,245" stroke="#000" fill="none" stroke-width="1.3"/>
<path d="M8,269 L21.5,256 M8,269 L22,261.5 M8,269 L22,265.5" stroke="#000" fill="none" stroke-width="1"/>
<rect x="8" y="278" width="16" height="1" fill="#000000"/>
<rect x="8" y="281" width="1" height="1" fill="#000000" />
<rect x="10" y="281" width="1" height="1" fill="#000000" />
<rect x="12" y="281" width="1" height="1" fill="#000000" />
<rect x="14" y="281" width="1" height="1" fill="#000000" />
<rect x="16" y="281" width="1" height="1" fill="#000000" />
<rect x="18" y="281" width="1" height="1" fill="#000000" />
<rect x="20" y="281" width="1" height="1" fill="#000000" />
<rect x="22" y="281" width="1" height="1" fill="#000000" />
<rect x="8" y="285" width="1" height="1" fill="#000000" />
<rect x="10" y="285" width="1" height="1" fill="#000000" />
<rect x="12" y="285" width="1" height="1" fill="#000000" />
<rect x="14" y="285" width="1" height="1" fill="#000000" />
<rect x="16" y="285" width="1" height="1" fill="#000000" />
<rect x="18" y="285" width="1" height="1" fill="#000000" />
<rect x="20" y="285" width="1" height="1" fill="#000000" />
<rect x="22" y="285" width="1" height="1" fill="#000000" />
<rect x="8" y="290" width="1" height="1" fill="#000000" />
<rect x="10" y="290" width="1" height="1" fill="#000000" />
<rect x="12" y="290" width="1" height="1" fill="#000000" />
<rect x="14" y="290" width="1" height="1" fill="#000000" />
<rect x="16" y="290" width="1" height="1" fill="#000000" />
<rect x="18" y="290" width="1" height="1" fill="#000000" />
<rect x="20" y="290" width="1" height="1" fill="#000000" />
<rect x="22" y="290" width="1" height="1" fill="#000000" />
<rect x="8" y="299" width="1" height="1" fill="#000000" />
<rect x="8" y="301" width="1" height="1" fill="#000000" />
<rect x="8" y="303" width="1" height="1" fill="#000000" />
<rect x="8" y="305" width="1" height="1" fill="#000000" />
<rect x="8" y="307" width="1" height="1" fill="#000000" />
<rect x="8" y="309" width="1" height="1" fill="#000000" />
<rect x="8" y="311" width="1" height="1" fill="#000000" />
<rect x="8" y="313" width="1" height="1" fill="#000000" />
<rect x="11" y="299" width="1" height="15" fill="#000000"/>
<rect x="14" y="299" width="1" height="15" fill="#000000"/>
<rect x="18" y="299" width="1" height="15" fill="#000000"/>
<rect x="22" y="299" width="1" height="15" fill="#000000"/>
<path d="M9,341 L22.5,327.5" stroke="#000" stroke-width="1" shape-rendering="crispEdges"/>
<path d="M7,363.5 L14,349 M7,363.5 L21.5,349 M7,363.5 L22.5,355 M7,363.5 L22.5,359.5 M7,363.5 L23,363.5" stroke="#000" fill="none" stroke-width="1.2"/>
<path d="M6,364 L11,358 L12,364 Z" fill="#000"/>
<path d="M8,371 L23,386 M8,378.5 L15.5,386 M15.5,371 L23,378.5 M23,371 L8,386 M15.5,371 L8,378.5 M23,378.5 L15.5,386" stroke="#000" fill="none" stroke-width="1.2"/>
<rect x="864" y="724" width="3" height="1" fill="#000000"/><rect x="863" y="725" width="1" height="1" fill="#000000"/><rect x="866" y="725" width="2" height="1" fill="#000000"/><rect x="862" y="726" width="1" height="1" fill="#000000"/><rect x="866" y="726" width="2" height="1" fill="#000000"/><rect x="862" y="727" width="1" height="1" fill="#000000"/><rect x="865" y="727" width="3" height="1" fill="#000000"/><rect x="862" y="728" width="1" height="1" fill="#000000"/><rect x="867" y="729" width="1" height="1" fill="#000000"/><rect x="862" y="730" width="3" height="1" fill="#000000"/><rect x="867" y="730" width="1" height="1" fill="#000000"/><rect x="862" y="731" width="2" height="1" fill="#000000"/><rect x="867" y="731" width="1" height="1" fill="#000000"/><rect x="862" y="732" width="2" height="1" fill="#000000"/><rect x="866" y="732" width="1" height="1" fill="#000000"/><rect x="863" y="733" width="3" height="1" fill="#000000"/>
<rect x="878" y="725" width="6" height="1" fill="#000000"/><rect x="879" y="726" width="1" height="1" fill="#000000"/><rect x="883" y="726" width="2" height="1" fill="#000000"/><rect x="879" y="727" width="1" height="1" fill="#000000"/><rect x="884" y="727" width="2" height="1" fill="#000000"/><rect x="879" y="728" width="1" height="1" fill="#000000"/><rect x="884" y="728" width="2" height="1" fill="#000000"/><rect x="879" y="729" width="1" height="1" fill="#000000"/><rect x="884" y="729" width="2" height="1" fill="#000000"/><rect x="879" y="730" width="1" height="1" fill="#000000"/><rect x="884" y="730" width="2" height="1" fill="#000000"/><rect x="879" y="731" width="1" height="1" fill="#000000"/><rect x="884" y="731" width="2" height="1" fill="#000000"/><rect x="879" y="732" width="1" height="1" fill="#000000"/><rect x="883" y="732" width="2" height="1" fill="#000000"/><rect x="878" y="733" width="6" height="1" fill="#000000"/>
<rect x="905" y="724" width="1" height="1" fill="#000000"/><rect x="904" y="725" width="3" height="1" fill="#000000"/><rect x="903" y="726" width="5" height="1" fill="#000000"/><rect x="902" y="727" width="7" height="1" fill="#000000"/><rect x="904" y="728" width="3" height="1" fill="#000000"/><rect x="904" y="729" width="3" height="1" fill="#000000"/><rect x="902" y="730" width="7" height="1" fill="#000000"/><rect x="903" y="731" width="5" height="1" fill="#000000"/><rect x="904" y="732" width="3" height="1" fill="#000000"/><rect x="905" y="733" width="1" height="1" fill="#000000"/>
<rect x="922" y="725" width="1" height="1" fill="#000000"/><rect x="921" y="726" width="3" height="1" fill="#000000"/><rect x="922" y="727" width="1" height="1" fill="#000000"/><rect x="919" y="728" width="1" height="1" fill="#000000"/><rect x="922" y="728" width="1" height="1" fill="#000000"/><rect x="925" y="728" width="1" height="1" fill="#000000"/><rect x="918" y="729" width="9" height="1" fill="#000000"/><rect x="919" y="730" width="1" height="1" fill="#000000"/><rect x="922" y="730" width="1" height="1" fill="#000000"/><rect x="925" y="730" width="1" height="1" fill="#000000"/><rect x="922" y="731" width="1" height="1" fill="#000000"/><rect x="921" y="732" width="3" height="1" fill="#000000"/><rect x="922" y="733" width="1" height="1" fill="#000000"/>
<rect x="937" y="725" width="5" height="1" fill="#000000"/><rect x="936" y="726" width="1" height="1" fill="#000000"/><rect x="942" y="726" width="1" height="1" fill="#000000"/><rect x="935" y="727" width="1" height="1" fill="#000000"/><rect x="943" y="727" width="1" height="1" fill="#000000"/><rect x="935" y="728" width="1" height="1" fill="#000000"/><rect x="937" y="728" width="5" height="1" fill="#000000"/><rect x="943" y="728" width="1" height="1" fill="#000000"/><rect x="935" y="729" width="1" height="1" fill="#000000"/><rect x="943" y="729" width="1" height="1" fill="#000000"/><rect x="936" y="730" width="1" height="1" fill="#000000"/><rect x="942" y="730" width="1" height="1" fill="#000000"/><rect x="937" y="731" width="5" height="1" fill="#000000"/>
<rect x="954" y="725" width="5" height="1" fill="#000000"/><rect x="953" y="726" width="1" height="1" fill="#000000"/><rect x="956" y="726" width="1" height="1" fill="#000000"/><rect x="959" y="726" width="1" height="1" fill="#000000"/><rect x="952" y="727" width="1" height="1" fill="#000000"/><rect x="956" y="727" width="1" height="1" fill="#000000"/><rect x="960" y="727" width="1" height="1" fill="#000000"/><rect x="952" y="728" width="1" height="1" fill="#000000"/><rect x="954" y="728" width="5" height="1" fill="#000000"/><rect x="960" y="728" width="1" height="1" fill="#000000"/><rect x="952" y="729" width="1" height="1" fill="#000000"/><rect x="956" y="729" width="1" height="1" fill="#000000"/><rect x="960" y="729" width="1" height="1" fill="#000000"/><rect x="953" y="730" width="1" height="1" fill="#000000"/><rect x="956" y="730" width="1" height="1" fill="#000000"/><rect x="959" y="730" width="1" height="1" fill="#000000"/><rect x="954" y="731" width="5" height="1" fill="#000000"/>
<rect x="981" y="725" width="1" height="1" fill="#000000"/><rect x="980" y="726" width="2" height="1" fill="#000000"/><rect x="979" y="727" width="3" height="1" fill="#000000"/><rect x="978" y="728" width="4" height="1" fill="#000000"/><rect x="977" y="729" width="5" height="1" fill="#000000"/><rect x="978" y="730" width="4" height="1" fill="#000000"/><rect x="979" y="731" width="3" height="1" fill="#000000"/><rect x="980" y="732" width="2" height="1" fill="#000000"/><rect x="981" y="733" width="1" height="1" fill="#000000"/>
<rect x="994" y="725" width="1" height="1" fill="#000000"/><rect x="994" y="726" width="2" height="1" fill="#000000"/><rect x="994" y="727" width="3" height="1" fill="#000000"/><rect x="994" y="728" width="4" height="1" fill="#000000"/><rect x="994" y="729" width="5" height="1" fill="#000000"/><rect x="994" y="730" width="4" height="1" fill="#000000"/><rect x="994" y="731" width="3" height="1" fill="#000000"/><rect x="994" y="732" width="2" height="1" fill="#000000"/><rect x="994" y="733" width="1" height="1" fill="#000000"/>
<rect x="1009" y="724" width="9" height="1" fill="#000000"/><rect x="1009" y="725" width="1" height="1" fill="#000000"/><rect x="1010" y="725" width="7" height="1" fill="#FFFFFF"/><rect x="1017" y="725" width="1" height="1" fill="#000000"/><rect x="1009" y="726" width="9" height="1" fill="#000000"/><rect x="1009" y="727" width="1" height="1" fill="#000000"/><rect x="1010" y="727" width="7" height="1" fill="#FFFFFF"/><rect x="1017" y="727" width="1" height="1" fill="#000000"/><rect x="1009" y="728" width="1" height="1" fill="#000000"/><rect x="1010" y="728" width="1" height="1" fill="#FFFFFF"/><rect x="1011" y="728" width="5" height="1" fill="#808080"/><rect x="1016" y="728" width="1" height="1" fill="#FFFFFF"/><rect x="1017" y="728" width="1" height="1" fill="#000000"/><rect x="1009" y="729" width="1" height="1" fill="#000000"/><rect x="1010" y="729" width="7" height="1" fill="#FFFFFF"/><rect x="1017" y="729" width="1" height="1" fill="#000000"/><rect x="1009" y="730" width="1" height="1" fill="#000000"/><rect x="1010" y="730" width="1" height="1" fill="#FFFFFF"/><rect x="1011" y="730" width="5" height="1" fill="#808080"/><rect x="1016" y="730" width="1" height="1" fill="#FFFFFF"/><rect x="1017" y="730" width="1" height="1" fill="#000000"/><rect x="1009" y="731" width="1" height="1" fill="#000000"/><rect x="1010" y="731" width="7" height="1" fill="#FFFFFF"/><rect x="1017" y="731" width="1" height="1" fill="#000000"/><rect x="1009" y="732" width="9" height="1" fill="#000000"/>
<rect x="853" y="723" width="1" height="14" fill="#C5C2B2"/>
<rect x="893" y="723" width="1" height="14" fill="#C5C2B2"/>
<rect x="967" y="723" width="1" height="14" fill="#C5C2B2"/>
<rect x="397" y="747" width="10" height="14" fill="#8890B0"/>
<rect x="396" y="746" width="10" height="14" fill="#D4DCF8"/>
<rect x="397" y="747" width="7" height="2" fill="#FFFFFF"/>
<path d="M403,746 L406,749 L403,749 Z" fill="#FFFFFF"/>
<ellipse cx="399" cy="754" rx="7.5" ry="3.2" transform="rotate(-35 399 754)" fill="none" stroke="#60B0F0" stroke-width="1.2"/>
<text x="393.5" y="759" font-size="14" font-weight="bold" fill="#1C6FD0">e</text>
<rect x="421" y="747" width="10" height="14" fill="#8890B0"/>
<rect x="420" y="746" width="10" height="14" fill="#D4DCF8"/>
<rect x="421" y="747" width="7" height="2" fill="#FFFFFF"/>
<path d="M427,746 L430,749 L427,749 Z" fill="#FFFFFF"/>
<ellipse cx="423" cy="754" rx="7.5" ry="3.2" transform="rotate(-35 423 754)" fill="none" stroke="#60B0F0" stroke-width="1.2"/>
<text x="417.5" y="759" font-size="14" font-weight="bold" fill="#1C6FD0">e</text>
<rect x="448" y="746" width="2" height="1" fill="#000000"/><rect x="447" y="747" width="3" height="1" fill="#000000"/><rect x="446" y="748" width="1" height="1" fill="#000000"/><rect x="448" y="748" width="2" height="1" fill="#000000"/><rect x="441" y="749" width="5" height="1" fill="#000000"/><rect x="448" y="749" width="2" height="1" fill="#000000"/><rect x="451" y="749" width="3" height="1" fill="#000000"/><rect x="441" y="750" width="1" height="1" fill="#000000"/><rect x="448" y="750" width="2" height="1" fill="#000000"/><rect x="453" y="750" width="1" height="1" fill="#000000"/><rect x="441" y="751" width="1" height="1" fill="#000000"/><rect x="448" y="751" width="2" height="1" fill="#000000"/><rect x="451" y="751" width="2" height="1" fill="#FF0000"/><rect x="453" y="751" width="1" height="1" fill="#000000"/><rect x="441" y="752" width="1" height="1" fill="#000000"/><rect x="448" y="752" width="2" height="1" fill="#000000"/><rect x="450" y="752" width="1" height="1" fill="#FF0000"/><rect x="453" y="752" width="1" height="1" fill="#000000"/><rect x="441" y="753" width="1" height="1" fill="#000000"/><rect x="447" y="753" width="1" height="1" fill="#FF0000"/><rect x="448" y="753" width="2" height="1" fill="#000000"/><rect x="453" y="753" width="1" height="1" fill="#000000"/><rect x="441" y="754" width="1" height="1" fill="#000000"/><rect x="446" y="754" width="1" height="1" fill="#FF0000"/><rect x="448" y="754" width="2" height="1" fill="#000000"/><rect x="453" y="754" width="1" height="1" fill="#000000"/><rect x="441" y="755" width="1" height="1" fill="#000000"/><rect x="444" y="755" width="2" height="1" fill="#FF0000"/><rect x="447" y="755" width="4" height="1" fill="#000000"/><rect x="453" y="755" width="1" height="1" fill="#000000"/><rect x="441" y="756" width="1" height="1" fill="#000000"/><rect x="443" y="756" width="1" height="1" fill="#FF0000"/><rect x="453" y="756" width="1" height="1" fill="#000000"/><rect x="441" y="757" width="13" height="1" fill="#000000"/>
<rect x="471" y="746" width="5" height="1" fill="#000000"/><rect x="470" y="747" width="1" height="1" fill="#000000"/><rect x="476" y="747" width="1" height="1" fill="#000000"/><rect x="476" y="748" width="1" height="1" fill="#000000"/><rect x="465" y="749" width="5" height="1" fill="#000000"/><rect x="475" y="749" width="1" height="1" fill="#000000"/><rect x="477" y="749" width="2" height="1" fill="#000000"/><rect x="465" y="750" width="1" height="1" fill="#000000"/><rect x="474" y="750" width="1" height="1" fill="#000000"/><rect x="478" y="750" width="1" height="1" fill="#000000"/><rect x="465" y="751" width="1" height="1" fill="#000000"/><rect x="473" y="751" width="1" height="1" fill="#000000"/><rect x="477" y="751" width="1" height="1" fill="#FF0000"/><rect x="478" y="751" width="1" height="1" fill="#000000"/><rect x="465" y="752" width="1" height="1" fill="#000000"/><rect x="472" y="752" width="1" height="1" fill="#000000"/><rect x="476" y="752" width="1" height="1" fill="#FF0000"/><rect x="478" y="752" width="1" height="1" fill="#000000"/><rect x="465" y="753" width="1" height="1" fill="#000000"/><rect x="471" y="753" width="1" height="1" fill="#000000"/><rect x="474" y="753" width="2" height="1" fill="#FF0000"/><rect x="478" y="753" width="1" height="1" fill="#000000"/><rect x="465" y="754" width="1" height="1" fill="#000000"/><rect x="470" y="754" width="1" height="1" fill="#000000"/><rect x="473" y="754" width="1" height="1" fill="#FF0000"/><rect x="478" y="754" width="1" height="1" fill="#000000"/><rect x="465" y="755" width="1" height="1" fill="#000000"/><rect x="469" y="755" width="7" height="1" fill="#000000"/><rect x="478" y="755" width="1" height="1" fill="#000000"/><rect x="465" y="756" width="1" height="1" fill="#000000"/><rect x="467" y="756" width="2" height="1" fill="#FF0000"/><rect x="478" y="756" width="1" height="1" fill="#000000"/><rect x="465" y="757" width="14" height="1" fill="#000000"/>
<rect x="489" y="747" width="12" height="1" fill="#808080"/><rect x="489" y="748" width="1" height="1" fill="#808080"/><rect x="490" y="748" width="10" height="1" fill="#FFFFFF"/><rect x="500" y="748" width="1" height="1" fill="#808080"/><rect x="489" y="749" width="1" height="1" fill="#808080"/><rect x="490" y="749" width="10" height="1" fill="#FFFFFF"/><rect x="500" y="749" width="1" height="1" fill="#808080"/><rect x="489" y="750" width="1" height="1" fill="#808080"/><rect x="490" y="750" width="10" height="1" fill="#FFFFFF"/><rect x="500" y="750" width="1" height="1" fill="#808080"/><rect x="489" y="751" width="1" height="1" fill="#808080"/><rect x="490" y="751" width="10" height="1" fill="#FFFFFF"/><rect x="500" y="751" width="1" height="1" fill="#808080"/><rect x="489" y="752" width="1" height="1" fill="#808080"/><rect x="490" y="752" width="12" height="1" fill="#000000"/><rect x="489" y="753" width="1" height="1" fill="#808080"/><rect x="490" y="753" width="1" height="1" fill="#000000"/><rect x="491" y="753" width="10" height="1" fill="#0000FF"/><rect x="501" y="753" width="1" height="1" fill="#000000"/><rect x="489" y="754" width="1" height="1" fill="#808080"/><rect x="490" y="754" width="1" height="1" fill="#000000"/><rect x="491" y="754" width="10" height="1" fill="#FFFFFF"/><rect x="501" y="754" width="1" height="1" fill="#000000"/><rect x="490" y="755" width="1" height="1" fill="#000000"/><rect x="491" y="755" width="10" height="1" fill="#FFFFFF"/><rect x="501" y="755" width="1" height="1" fill="#000000"/><rect x="490" y="756" width="1" height="1" fill="#000000"/><rect x="491" y="756" width="10" height="1" fill="#FFFFFF"/><rect x="501" y="756" width="1" height="1" fill="#000000"/><rect x="490" y="757" width="1" height="1" fill="#000000"/><rect x="491" y="757" width="10" height="1" fill="#FFFFFF"/><rect x="501" y="757" width="1" height="1" fill="#000000"/><rect x="490" y="758" width="1" height="1" fill="#000000"/><rect x="491" y="758" width="10" height="1" fill="#FFFFFF"/><rect x="501" y="758" width="1" height="1" fill="#000000"/><rect x="490" y="759" width="12" height="1" fill="#000000"/>
<rect x="513" y="747" width="12" height="1" fill="#808080"/><rect x="513" y="748" width="1" height="1" fill="#808080"/><rect x="514" y="748" width="10" height="1" fill="#FFFFFF"/><rect x="524" y="748" width="1" height="1" fill="#808080"/><rect x="513" y="749" width="1" height="1" fill="#808080"/><rect x="514" y="749" width="10" height="1" fill="#FFFFFF"/><rect x="524" y="749" width="1" height="1" fill="#808080"/><rect x="513" y="750" width="1" height="1" fill="#808080"/><rect x="514" y="750" width="10" height="1" fill="#FFFFFF"/><rect x="524" y="750" width="1" height="1" fill="#808080"/><rect x="513" y="751" width="1" height="1" fill="#808080"/><rect x="514" y="751" width="10" height="1" fill="#FFFFFF"/><rect x="524" y="751" width="1" height="1" fill="#808080"/><rect x="513" y="752" width="1" height="1" fill="#808080"/><rect x="514" y="752" width="12" height="1" fill="#000000"/><rect x="513" y="753" width="1" height="1" fill="#808080"/><rect x="514" y="753" width="1" height="1" fill="#000000"/><rect x="515" y="753" width="10" height="1" fill="#0000FF"/><rect x="525" y="753" width="1" height="1" fill="#000000"/><rect x="513" y="754" width="1" height="1" fill="#808080"/><rect x="514" y="754" width="1" height="1" fill="#000000"/><rect x="515" y="754" width="10" height="1" fill="#FFFFFF"/><rect x="525" y="754" width="1" height="1" fill="#000000"/><rect x="514" y="755" width="1" height="1" fill="#000000"/><rect x="515" y="755" width="10" height="1" fill="#FFFFFF"/><rect x="525" y="755" width="1" height="1" fill="#000000"/><rect x="514" y="756" width="1" height="1" fill="#000000"/><rect x="515" y="756" width="10" height="1" fill="#FFFFFF"/><rect x="525" y="756" width="1" height="1" fill="#000000"/><rect x="514" y="757" width="1" height="1" fill="#000000"/><rect x="515" y="757" width="10" height="1" fill="#FFFFFF"/><rect x="525" y="757" width="1" height="1" fill="#000000"/><rect x="514" y="758" width="1" height="1" fill="#000000"/><rect x="515" y="758" width="10" height="1" fill="#FFFFFF"/><rect x="525" y="758" width="1" height="1" fill="#000000"/><rect x="514" y="759" width="12" height="1" fill="#000000"/>
<rect x="537" y="747" width="12" height="1" fill="#808080"/><rect x="537" y="748" width="1" height="1" fill="#808080"/><rect x="538" y="748" width="10" height="1" fill="#FFFFFF"/><rect x="548" y="748" width="1" height="1" fill="#808080"/><rect x="537" y="749" width="1" height="1" fill="#808080"/><rect x="538" y="749" width="10" height="1" fill="#FFFFFF"/><rect x="548" y="749" width="1" height="1" fill="#808080"/><rect x="537" y="750" width="1" height="1" fill="#808080"/><rect x="538" y="750" width="10" height="1" fill="#FFFFFF"/><rect x="548" y="750" width="1" height="1" fill="#808080"/><rect x="537" y="751" width="1" height="1" fill="#808080"/><rect x="538" y="751" width="10" height="1" fill="#FFFFFF"/><rect x="548" y="751" width="1" height="1" fill="#808080"/><rect x="537" y="752" width="1" height="1" fill="#808080"/><rect x="538" y="752" width="12" height="1" fill="#000000"/><rect x="537" y="753" width="1" height="1" fill="#808080"/><rect x="538" y="753" width="1" height="1" fill="#000000"/><rect x="539" y="753" width="10" height="1" fill="#0000FF"/><rect x="549" y="753" width="1" height="1" fill="#000000"/><rect x="537" y="754" width="1" height="1" fill="#808080"/><rect x="538" y="754" width="1" height="1" fill="#000000"/><rect x="539" y="754" width="10" height="1" fill="#FFFFFF"/><rect x="549" y="754" width="1" height="1" fill="#000000"/><rect x="538" y="755" width="1" height="1" fill="#000000"/><rect x="539" y="755" width="10" height="1" fill="#FFFFFF"/><rect x="549" y="755" width="1" height="1" fill="#000000"/><rect x="538" y="756" width="1" height="1" fill="#000000"/><rect x="539" y="756" width="10" height="1" fill="#FFFFFF"/><rect x="549" y="756" width="1" height="1" fill="#000000"/><rect x="538" y="757" width="1" height="1" fill="#000000"/><rect x="539" y="757" width="10" height="1" fill="#FFFFFF"/><rect x="549" y="757" width="1" height="1" fill="#000000"/><rect x="538" y="758" width="1" height="1" fill="#000000"/><rect x="539" y="758" width="10" height="1" fill="#FFFFFF"/><rect x="549" y="758" width="1" height="1" fill="#000000"/><rect x="538" y="759" width="12" height="1" fill="#000000"/>
<rect x="32" y="91" width="939" height="1" fill="#0000FF"/>
<rect x="32" y="223" width="939" height="1" fill="#0000FF"/>
<path d="M32,132h1v1h-1ZM33,132h1v1h-1ZM34,132h1v1h-1ZM38,133h1v1h-1ZM39,133h1v1h-1ZM40,133h1v1h-1ZM44,133h1v1h-1ZM45,134h1v1h-1ZM46,134h1v1h-1ZM50,134h1v1h-1ZM51,134h1v1h-1ZM52,135h1v1h-1ZM56,135h1v1h-1ZM57,135h1v1h-1ZM58,136h1v1h-1ZM62,136h1v1h-1ZM63,136h1v1h-1ZM64,136h1v1h-1ZM68,137h1v1h-1ZM69,137h1v1h-1ZM70,137h1v1h-1ZM74,138h1v1h-1ZM75,138h1v1h-1ZM76,138h1v1h-1ZM80,139h1v1h-1ZM81,139h1v1h-1ZM82,139h1v1h-1ZM86,138h1v1h-1ZM87,138h1v1h-1ZM88,138h1v1h-1ZM92,138h1v1h-1ZM93,137h1v1h-1ZM94,137h1v1h-1ZM98,136h1v1h-1ZM99,136h1v1h-1ZM100,135h1v1h-1ZM104,133h1v1h-1ZM105,133h1v1h-1ZM106,132h1v1h-1ZM110,130h1v1h-1ZM111,130h1v1h-1ZM112,129h1v1h-1ZM116,126h1v1h-1ZM117,126h1v1h-1ZM118,125h1v1h-1ZM122,123h1v1h-1ZM123,122h1v1h-1ZM124,121h1v1h-1ZM128,118h1v1h-1ZM129,118h1v1h-1ZM130,117h1v1h-1ZM134,114h1v1h-1ZM135,113h1v1h-1ZM136,112h1v1h-1ZM140,109h1v1h-1ZM141,108h1v1h-1ZM142,107h1v1h-1ZM146,104h1v1h-1ZM147,103h1v1h-1ZM148,103h1v1h-1ZM152,100h1v1h-1ZM153,100h1v1h-1ZM154,99h1v1h-1ZM158,96h1v1h-1ZM159,96h1v1h-1ZM160,95h1v1h-1ZM164,93h1v1h-1ZM165,93h1v1h-1ZM166,92h1v1h-1ZM170,90h1v1h-1ZM171,90h1v1h-1ZM172,89h1v1h-1ZM176,87h1v1h-1ZM177,87h1v1h-1ZM178,86h1v1h-1ZM182,85h1v1h-1ZM183,84h1v1h-1ZM184,84h1v1h-1ZM188,82h1v1h-1ZM189,82h1v1h-1ZM190,82h1v1h-1ZM194,80h1v1h-1ZM195,79h1v1h-1ZM196,79h1v1h-1ZM200,76h1v1h-1ZM201,76h1v1h-1ZM202,75h1v1h-1ZM206,73h1v1h-1ZM207,72h1v1h-1ZM208,72h1v1h-1ZM212,70h1v1h-1ZM213,70h1v1h-1ZM214,70h1v1h-1ZM218,68h1v1h-1ZM219,68h1v1h-1ZM220,67h1v1h-1ZM224,66h1v1h-1ZM225,66h1v1h-1ZM226,66h1v1h-1ZM230,64h1v1h-1ZM231,64h1v1h-1ZM232,64h1v1h-1ZM236,63h1v1h-1ZM237,62h1v1h-1ZM238,62h1v1h-1ZM242,62h1v1h-1ZM243,62h1v1h-1ZM244,61h1v1h-1ZM248,61h1v1h-1ZM249,61h1v1h-1ZM250,61h1v1h-1ZM254,61h1v1h-1ZM255,61h1v1h-1ZM256,61h1v1h-1ZM260,62h1v1h-1ZM261,63h1v1h-1ZM262,63h1v1h-1ZM266,64h1v1h-1ZM267,64h1v1h-1ZM268,64h1v1h-1ZM272,65h1v1h-1ZM273,65h1v1h-1ZM274,65h1v1h-1ZM278,66h1v1h-1ZM279,66h1v1h-1ZM280,66h1v1h-1ZM284,67h1v1h-1ZM285,68h1v1h-1ZM286,68h1v1h-1ZM290,69h1v1h-1ZM291,69h1v1h-1ZM292,69h1v1h-1ZM296,69h1v1h-1ZM297,69h1v1h-1ZM298,69h1v1h-1ZM302,69h1v1h-1ZM303,69h1v1h-1ZM304,69h1v1h-1ZM308,69h1v1h-1ZM309,69h1v1h-1ZM310,69h1v1h-1ZM314,68h1v1h-1ZM315,68h1v1h-1ZM316,68h1v1h-1ZM320,67h1v1h-1ZM321,67h1v1h-1ZM322,67h1v1h-1ZM326,66h1v1h-1ZM327,66h1v1h-1ZM328,65h1v1h-1ZM332,64h1v1h-1ZM333,64h1v1h-1ZM334,64h1v1h-1ZM338,63h1v1h-1ZM339,63h1v1h-1ZM340,63h1v1h-1ZM344,62h1v1h-1ZM345,62h1v1h-1ZM346,62h1v1h-1ZM350,62h1v1h-1ZM351,62h1v1h-1ZM352,62h1v1h-1ZM356,61h1v1h-1ZM357,61h1v1h-1ZM358,61h1v1h-1ZM362,61h1v1h-1ZM363,61h1v1h-1ZM364,61h1v1h-1ZM368,60h1v1h-1ZM369,60h1v1h-1ZM370,60h1v1h-1ZM374,60h1v1h-1ZM375,59h1v1h-1ZM376,59h1v1h-1ZM380,59h1v1h-1ZM381,59h1v1h-1ZM382,59h1v1h-1ZM386,59h1v1h-1ZM387,60h1v1h-1ZM388,60h1v1h-1ZM392,60h1v1h-1ZM393,60h1v1h-1ZM394,60h1v1h-1ZM398,60h1v1h-1ZM399,60h1v1h-1ZM400,60h1v1h-1ZM404,60h1v1h-1ZM405,60h1v1h-1ZM406,61h1v1h-1ZM410,62h1v1h-1ZM411,62h1v1h-1ZM412,62h1v1h-1ZM416,63h1v1h-1ZM417,64h1v1h-1ZM418,64h1v1h-1ZM422,65h1v1h-1ZM423,65h1v1h-1ZM424,65h1v1h-1ZM428,66h1v1h-1ZM429,66h1v1h-1ZM430,66h1v1h-1ZM434,66h1v1h-1ZM435,66h1v1h-1ZM436,66h1v1h-1ZM440,67h1v1h-1ZM441,67h1v1h-1ZM442,67h1v1h-1ZM446,67h1v1h-1ZM447,67h1v1h-1ZM448,67h1v1h-1ZM452,66h1v1h-1ZM453,66h1v1h-1ZM454,66h1v1h-1ZM458,65h1v1h-1ZM459,65h1v1h-1ZM460,65h1v1h-1ZM464,64h1v1h-1ZM465,64h1v1h-1ZM466,64h1v1h-1ZM470,63h1v1h-1ZM471,63h1v1h-1ZM472,63h1v1h-1ZM476,62h1v1h-1ZM477,62h1v1h-1ZM478,62h1v1h-1ZM482,61h1v1h-1ZM483,61h1v1h-1ZM484,61h1v1h-1ZM488,60h1v1h-1ZM489,60h1v1h-1ZM490,60h1v1h-1ZM494,59h1v1h-1ZM495,59h1v1h-1ZM496,59h1v1h-1ZM500,59h1v1h-1ZM501,59h1v1h-1ZM502,59h1v1h-1ZM506,59h1v1h-1ZM507,59h1v1h-1ZM508,59h1v1h-1ZM512,59h1v1h-1ZM513,59h1v1h-1ZM514,59h1v1h-1ZM518,59h1v1h-1ZM519,59h1v1h-1ZM520,59h1v1h-1ZM524,59h1v1h-1ZM525,59h1v1h-1ZM526,59h1v1h-1ZM530,59h1v1h-1ZM531,59h1v1h-1ZM532,59h1v1h-1ZM536,58h1v1h-1ZM537,58h1v1h-1ZM538,58h1v1h-1ZM542,58h1v1h-1ZM543,58h1v1h-1ZM544,58h1v1h-1ZM548,58h1v1h-1ZM549,58h1v1h-1ZM550,58h1v1h-1ZM554,58h1v1h-1ZM555,58h1v1h-1ZM556,58h1v1h-1ZM560,59h1v1h-1ZM561,59h1v1h-1ZM562,59h1v1h-1ZM566,59h1v1h-1ZM567,59h1v1h-1ZM568,59h1v1h-1ZM572,59h1v1h-1ZM573,59h1v1h-1ZM574,59h1v1h-1ZM578,59h1v1h-1ZM579,59h1v1h-1ZM580,59h1v1h-1ZM584,59h1v1h-1ZM585,59h1v1h-1ZM586,60h1v1h-1ZM590,60h1v1h-1ZM591,60h1v1h-1ZM592,60h1v1h-1ZM596,60h1v1h-1ZM597,60h1v1h-1ZM598,60h1v1h-1ZM602,60h1v1h-1ZM603,60h1v1h-1ZM604,60h1v1h-1ZM608,61h1v1h-1ZM609,61h1v1h-1ZM610,61h1v1h-1ZM614,62h1v1h-1ZM615,63h1v1h-1ZM616,63h1v1h-1ZM620,64h1v1h-1ZM621,64h1v1h-1ZM622,64h1v1h-1ZM626,65h1v1h-1ZM627,65h1v1h-1ZM628,66h1v1h-1ZM632,67h1v1h-1ZM633,67h1v1h-1ZM634,68h1v1h-1ZM638,69h1v1h-1ZM639,69h1v1h-1ZM640,69h1v1h-1ZM644,71h1v1h-1ZM645,72h1v1h-1ZM646,72h1v1h-1ZM650,74h1v1h-1ZM651,75h1v1h-1ZM652,75h1v1h-1ZM656,77h1v1h-1ZM657,78h1v1h-1ZM658,78h1v1h-1ZM662,80h1v1h-1ZM663,80h1v1h-1ZM664,81h1v1h-1ZM668,82h1v1h-1ZM669,83h1v1h-1ZM670,83h1v1h-1ZM674,85h1v1h-1ZM675,85h1v1h-1ZM676,85h1v1h-1ZM680,86h1v1h-1ZM681,87h1v1h-1ZM682,87h1v1h-1ZM686,86h1v1h-1ZM687,86h1v1h-1ZM688,86h1v1h-1ZM692,85h1v1h-1ZM693,85h1v1h-1ZM694,85h1v1h-1ZM698,84h1v1h-1ZM699,84h1v1h-1ZM700,83h1v1h-1ZM704,83h1v1h-1ZM705,82h1v1h-1ZM706,82h1v1h-1ZM710,81h1v1h-1ZM711,81h1v1h-1ZM712,81h1v1h-1ZM716,80h1v1h-1ZM717,80h1v1h-1ZM718,80h1v1h-1ZM722,79h1v1h-1ZM723,79h1v1h-1ZM724,79h1v1h-1ZM728,78h1v1h-1ZM729,78h1v1h-1ZM730,77h1v1h-1ZM734,77h1v1h-1ZM735,77h1v1h-1ZM736,77h1v1h-1ZM740,77h1v1h-1ZM741,77h1v1h-1ZM742,77h1v1h-1ZM746,76h1v1h-1ZM747,76h1v1h-1ZM748,76h1v1h-1ZM752,76h1v1h-1ZM753,76h1v1h-1ZM754,76h1v1h-1ZM758,77h1v1h-1ZM759,77h1v1h-1ZM760,77h1v1h-1ZM764,78h1v1h-1ZM765,79h1v1h-1ZM766,79h1v1h-1ZM770,79h1v1h-1ZM771,79h1v1h-1ZM772,79h1v1h-1ZM776,80h1v1h-1ZM777,80h1v1h-1ZM778,80h1v1h-1ZM782,80h1v1h-1ZM783,80h1v1h-1ZM784,80h1v1h-1ZM788,80h1v1h-1ZM789,79h1v1h-1ZM790,79h1v1h-1ZM794,79h1v1h-1ZM795,79h1v1h-1ZM796,79h1v1h-1ZM800,79h1v1h-1ZM801,79h1v1h-1ZM802,78h1v1h-1ZM806,78h1v1h-1ZM807,78h1v1h-1ZM808,78h1v1h-1Z" fill="#000000" shape-rendering="crispEdges"/>
<path d="M32.00,134.00L43.70,134.00L43.70,136.00L32.00,136.00ZM43.70,134.00L53.00,135.50L53.00,137.50L43.70,136.00ZM53.00,135.50L68.30,138.90L68.30,140.90L53.00,137.50ZM68.30,138.90L75.00,139.90L75.00,141.90L68.30,140.90ZM75.00,139.90L83.30,139.60L83.30,141.60L75.00,141.90ZM83.30,139.60L94.30,134.10L94.30,136.10L83.30,141.60ZM94.30,134.10L105.20,124.50L105.20,126.50L94.30,136.10ZM105.20,124.50L114.80,115.70L114.80,117.70L105.20,126.50ZM113.80,116.70L122.70,107.10L124.70,107.10L115.80,116.70ZM123.70,106.10L136.60,102.00L136.60,104.00L123.70,108.10ZM136.60,102.00L147.60,93.80L147.60,95.80L136.60,104.00ZM147.60,93.80L165.00,86.00L165.00,88.00L147.60,95.80ZM165.00,86.00L180.00,75.80L180.00,77.80L165.00,88.00ZM180.00,75.80L192.40,74.40L192.40,76.40L180.00,77.80ZM192.40,74.40L207.40,64.10L207.40,66.10L192.40,76.40ZM207.40,64.10L221.10,59.10L221.10,61.10L207.40,66.10ZM221.10,59.10L234.80,57.60L234.80,59.60L221.10,61.10ZM234.80,57.60L243.00,59.40L243.00,61.40L234.80,59.60ZM243.00,59.40L263.50,66.60L263.50,68.60L243.00,61.40ZM263.50,66.60L277.20,68.50L277.20,70.50L263.50,68.60ZM277.20,68.50L285.50,69.90L285.50,71.90L277.20,70.50ZM285.50,69.90L293.70,69.90L293.70,71.90L285.50,71.90ZM293.70,69.90L300.50,67.60L300.50,69.60L293.70,71.90ZM300.50,67.60L311.40,64.80L311.40,66.80L300.50,69.60ZM311.40,64.80L325.10,61.40L325.10,63.40L311.40,66.80ZM325.10,61.40L334.00,59.00L334.00,61.00L325.10,63.40ZM334.00,59.00L366.10,58.70L366.10,60.70L334.00,61.00ZM366.10,58.70L374.30,56.60L374.30,58.60L366.10,60.70ZM374.30,56.60L388.00,57.60L388.00,59.60L374.30,58.60ZM388.00,57.60L404.40,62.10L404.40,64.10L388.00,59.60ZM404.40,62.10L415.40,67.60L415.40,69.60L404.40,64.10ZM415.40,67.60L425.00,67.60L425.00,69.60L415.40,69.60ZM425.00,67.60L431.90,66.20L431.90,68.20L425.00,69.60ZM431.90,66.20L446.20,64.80L446.20,66.80L431.90,68.20ZM446.20,64.80L460.60,59.80L460.60,61.80L446.20,66.80ZM460.60,59.80L475.60,58.00L475.60,60.00L460.60,61.80ZM475.60,58.00L489.30,55.70L489.30,57.70L475.60,60.00ZM489.30,55.70L503.00,55.90L503.00,57.90L489.30,57.70ZM503.00,55.90L509.80,58.00L509.80,60.00L503.00,57.90ZM509.80,58.00L523.50,57.00L523.50,59.00L509.80,60.00ZM523.50,57.00L531.70,55.70L531.70,57.70L523.50,59.00ZM531.70,55.70L544.00,56.20L544.00,58.20L531.70,57.70ZM544.00,56.20L553.70,58.70L553.70,60.70L544.00,58.20ZM553.70,58.70L586.50,59.40L586.50,61.40L553.70,60.70ZM586.50,59.40L600.20,60.00L600.20,62.00L586.50,61.40ZM600.20,60.00L620.70,66.90L620.70,68.90L600.20,62.00ZM620.70,66.90L642.50,73.70L642.50,75.70L620.70,68.90ZM642.50,73.70L656.20,84.60L656.20,86.60L642.50,75.70ZM656.20,84.60L664.40,85.70L664.40,87.70L656.20,86.60ZM664.40,85.70L685.60,85.90L685.60,87.90L664.40,87.70ZM685.60,85.90L698.90,79.70L698.90,81.70L685.60,87.90ZM698.90,79.70L712.20,77.00L712.20,79.00L698.90,81.70ZM712.20,77.00L726.25,73.10L726.25,75.10L712.20,79.00ZM726.25,73.10L740.30,73.90L740.30,75.90L726.25,75.10ZM740.30,73.90L755.20,79.00L755.20,81.00L740.30,75.90ZM755.20,79.00L774.70,79.40L774.70,81.40L755.20,81.00ZM774.70,79.40L790.30,77.00L790.30,79.00L774.70,81.40ZM790.30,77.00L796.60,75.90L796.60,77.90L790.30,79.00ZM796.60,75.90L810.60,75.90L810.60,77.90L796.60,77.90ZM31.00,134.00h2v2h-2ZM42.70,134.00h2v2h-2ZM52.00,135.50h2v2h-2ZM67.30,138.90h2v2h-2ZM74.00,139.90h2v2h-2ZM82.30,139.60h2v2h-2ZM93.30,134.10h2v2h-2ZM104.20,124.50h2v2h-2ZM113.80,115.70h2v2h-2ZM122.70,106.10h2v2h-2ZM135.60,102.00h2v2h-2ZM146.60,93.80h2v2h-2ZM164.00,86.00h2v2h-2ZM179.00,75.80h2v2h-2ZM191.40,74.40h2v2h-2ZM206.40,64.10h2v2h-2ZM220.10,59.10h2v2h-2ZM233.80,57.60h2v2h-2ZM242.00,59.40h2v2h-2ZM262.50,66.60h2v2h-2ZM276.20,68.50h2v2h-2ZM284.50,69.90h2v2h-2ZM292.70,69.90h2v2h-2ZM299.50,67.60h2v2h-2ZM310.40,64.80h2v2h-2ZM324.10,61.40h2v2h-2ZM333.00,59.00h2v2h-2ZM365.10,58.70h2v2h-2ZM373.30,56.60h2v2h-2ZM387.00,57.60h2v2h-2ZM403.40,62.10h2v2h-2ZM414.40,67.60h2v2h-2ZM424.00,67.60h2v2h-2ZM430.90,66.20h2v2h-2ZM445.20,64.80h2v2h-2ZM459.60,59.80h2v2h-2ZM474.60,58.00h2v2h-2ZM488.30,55.70h2v2h-2ZM502.00,55.90h2v2h-2ZM508.80,58.00h2v2h-2ZM522.50,57.00h2v2h-2ZM530.70,55.70h2v2h-2ZM543.00,56.20h2v2h-2ZM552.70,58.70h2v2h-2ZM585.50,59.40h2v2h-2ZM599.20,60.00h2v2h-2ZM619.70,66.90h2v2h-2ZM641.50,73.70h2v2h-2ZM655.20,84.60h2v2h-2ZM663.40,85.70h2v2h-2ZM684.60,85.90h2v2h-2ZM697.90,79.70h2v2h-2ZM711.20,77.00h2v2h-2ZM725.25,73.10h2v2h-2ZM739.30,73.90h2v2h-2ZM754.20,79.00h2v2h-2ZM773.70,79.40h2v2h-2ZM789.30,77.00h2v2h-2ZM795.60,75.90h2v2h-2ZM809.60,75.90h2v2h-2Z" fill="#FF0000" shape-rendering="crispEdges"/>
<path d="M32.00,259.90L38.80,259.90L38.80,261.90L32.00,261.90ZM38.80,259.90L49.50,263.80L49.50,265.80L38.80,261.90ZM49.50,263.80L81.75,263.80L81.75,265.80L49.50,265.80ZM80.75,264.80L94.40,250.10L96.40,250.10L82.75,264.80ZM95.40,249.10L109.10,241.30L109.10,243.30L95.40,251.10ZM109.10,241.30L123.75,237.40L123.75,239.40L109.10,243.30ZM123.75,237.40L137.40,244.20L137.40,246.20L123.75,239.40ZM136.40,245.20L150.10,230.20L152.10,230.20L138.40,245.20ZM151.10,229.20L165.70,234.50L165.70,236.50L151.10,231.20ZM165.70,234.50L179.40,231.50L179.40,233.50L165.70,236.50ZM179.40,231.50L193.10,223.70L193.10,225.70L179.40,233.50ZM193.10,223.70L207.70,217.90L207.70,219.90L193.10,225.70ZM207.70,217.90L235.60,217.90L235.60,219.90L207.70,219.90ZM235.60,217.90L249.30,227.60L249.30,229.60L235.60,219.90ZM249.30,227.60L263.00,235.80L263.00,237.80L249.30,229.60ZM263.00,235.80L277.60,231.50L277.60,233.50L263.00,237.80ZM277.60,231.50L291.30,239.75L291.30,241.75L277.60,233.50ZM291.30,239.75L306.00,228.60L306.00,230.60L291.30,241.75ZM306.00,228.60L362.60,228.60L362.60,230.60L306.00,230.60ZM362.60,228.60L376.25,217.90L376.25,219.90L362.60,230.60ZM376.25,217.90L390.00,217.90L390.00,219.90L376.25,219.90ZM389.00,218.90L402.60,232.90L404.60,232.90L391.00,218.90ZM403.60,231.90L418.80,231.90L418.80,233.90L403.60,233.90ZM417.80,232.90L431.50,218.90L433.50,218.90L419.80,232.90ZM431.50,218.90L445.10,232.90L447.10,232.90L433.50,218.90ZM446.10,231.90L460.80,224.70L460.80,226.70L446.10,233.90ZM460.80,224.70L474.50,218.90L474.50,220.90L460.80,226.70ZM473.50,219.90L487.10,234.10L489.10,234.10L475.50,219.90ZM488.10,233.10L517.40,233.10L517.40,235.10L488.10,235.10ZM517.40,233.10L531.10,224.70L531.10,226.70L517.40,235.10ZM530.10,225.70L543.80,206.20L545.80,206.20L532.10,225.70ZM544.80,205.20L558.40,201.30L558.40,203.30L544.80,207.20ZM557.40,202.30L571.10,184.10L573.10,184.10L559.40,202.30ZM572.10,183.10L586.80,180.40L586.80,182.40L572.10,185.10ZM585.80,181.40L598.50,199.70L600.50,199.70L587.80,181.40ZM599.50,198.70L614.60,199.10L614.60,201.10L599.50,200.70ZM614.60,199.10L628.10,210.30L628.10,212.30L614.60,201.10ZM628.10,210.30L642.70,223.80L642.70,225.80L628.10,212.30ZM641.70,224.80L655.20,242.75L657.20,242.75L643.70,224.80ZM655.20,242.75L669.10,227.00L671.10,227.00L657.20,242.75ZM670.10,226.00L682.00,230.50L682.00,232.50L670.10,228.00ZM682.00,230.50L698.80,230.50L698.80,232.50L682.00,232.50ZM697.80,231.50L711.30,216.90L713.30,216.90L699.80,231.50ZM712.30,215.90L726.20,215.90L726.20,217.90L712.30,217.90ZM725.20,216.90L738.70,236.00L740.70,236.00L727.20,216.90ZM739.70,235.00L755.00,231.60L755.00,233.60L739.70,237.00ZM755.00,231.60L768.50,229.80L768.50,231.80L755.00,233.60ZM768.50,229.80L786.40,229.80L786.40,231.80L768.50,231.80ZM786.40,229.80L796.50,227.20L796.50,229.20L786.40,231.80ZM796.50,227.20L810.00,232.80L810.00,234.80L796.50,229.20ZM31.00,259.90h2v2h-2ZM37.80,259.90h2v2h-2ZM48.50,263.80h2v2h-2ZM80.75,263.80h2v2h-2ZM94.40,249.10h2v2h-2ZM108.10,241.30h2v2h-2ZM122.75,237.40h2v2h-2ZM136.40,244.20h2v2h-2ZM150.10,229.20h2v2h-2ZM164.70,234.50h2v2h-2ZM178.40,231.50h2v2h-2ZM192.10,223.70h2v2h-2ZM206.70,217.90h2v2h-2ZM234.60,217.90h2v2h-2ZM248.30,227.60h2v2h-2ZM262.00,235.80h2v2h-2ZM276.60,231.50h2v2h-2ZM290.30,239.75h2v2h-2ZM305.00,228.60h2v2h-2ZM361.60,228.60h2v2h-2ZM375.25,217.90h2v2h-2ZM389.00,217.90h2v2h-2ZM402.60,231.90h2v2h-2ZM417.80,231.90h2v2h-2ZM431.50,217.90h2v2h-2ZM445.10,231.90h2v2h-2ZM459.80,224.70h2v2h-2ZM473.50,218.90h2v2h-2ZM487.10,233.10h2v2h-2ZM516.40,233.10h2v2h-2ZM530.10,224.70h2v2h-2ZM543.80,205.20h2v2h-2ZM557.40,201.30h2v2h-2ZM571.10,183.10h2v2h-2ZM585.80,180.40h2v2h-2ZM598.50,198.70h2v2h-2ZM613.60,199.10h2v2h-2ZM627.10,210.30h2v2h-2ZM641.70,223.80h2v2h-2ZM655.20,241.75h2v2h-2ZM669.10,226.00h2v2h-2ZM681.00,230.50h2v2h-2ZM697.80,230.50h2v2h-2ZM711.30,215.90h2v2h-2ZM725.20,215.90h2v2h-2ZM738.70,235.00h2v2h-2ZM754.00,231.60h2v2h-2ZM767.50,229.80h2v2h-2ZM785.40,229.80h2v2h-2ZM795.50,227.20h2v2h-2ZM809.00,232.80h2v2h-2Z" fill="#FF0000" shape-rendering="crispEdges"/>
<rect x="39" y="489" width="1" height="12" fill="#000000"/>
<rect x="33" y="495" width="12" height="2" fill="#000000" />
<rect x="53" y="495" width="1" height="6" fill="#000000"/>
<rect x="47" y="498" width="12" height="2" fill="#000000" />
<rect x="67" y="497" width="1" height="8" fill="#000000"/>
<rect x="61" y="499" width="12" height="1" fill="#000000"/>
<rect x="81" y="497" width="1" height="8" fill="#000000"/>
<rect x="75" y="499" width="12" height="1" fill="#000000"/>
<rect x="95" y="484" width="1" height="5" fill="#000000"/>
<path d="M89,489h12v14h-12Z M90,490v12h10v-12Z" fill="#000" fill-rule="evenodd"/>
<rect x="109" y="469" width="1" height="13" fill="#000000"/>
<rect x="103" y="477" width="12" height="4" fill="#000000" />
<rect x="123" y="465" width="1" height="12" fill="#000000"/>
<rect x="123" y="483" width="1" height="1" fill="#000000"/>
<path d="M117,477h12v6h-12Z M118,478v4h10v-4Z" fill="#000" fill-rule="evenodd"/>
<rect x="137" y="477" width="1" height="16" fill="#000000"/>
<rect x="131" y="480" width="12" height="1" fill="#000000"/>
<rect x="151" y="475" width="1" height="2" fill="#000000"/>
<path d="M145,465h12v10h-12Z M146,466v8h10v-8Z" fill="#000" fill-rule="evenodd"/>
<rect x="165" y="457" width="1" height="13" fill="#000000"/>
<rect x="159" y="465" width="12" height="4" fill="#000000" />
<rect x="179" y="461" width="1" height="8" fill="#000000"/>
<rect x="173" y="464" width="12" height="1" fill="#000000"/>
<rect x="193" y="448" width="1" height="9" fill="#000000"/>
<rect x="193" y="463" width="1" height="2" fill="#000000"/>
<path d="M187,457h12v6h-12Z M188,458v4h10v-4Z" fill="#000" fill-rule="evenodd"/>
<rect x="207" y="447" width="1" height="10" fill="#000000"/>
<rect x="201" y="447" width="12" height="1" fill="#000000"/>
<rect x="221" y="444" width="1" height="8" fill="#000000"/>
<rect x="215" y="447" width="12" height="1" fill="#000000"/>
<rect x="235" y="447" width="1" height="10" fill="#000000"/>
<rect x="229" y="447" width="12" height="1" fill="#000000"/>
<rect x="249" y="451" width="1" height="6" fill="#000000"/>
<rect x="243" y="451" width="12" height="1" fill="#000000"/>
<rect x="263" y="450" width="1" height="11" fill="#000000"/>
<rect x="257" y="452" width="12" height="5" fill="#000000" />
<rect x="277" y="459" width="1" height="1" fill="#000000"/>
<path d="M271,452h12v7h-12Z M272,453v5h10v-5Z" fill="#000" fill-rule="evenodd"/>
<rect x="291" y="452" width="1" height="6" fill="#000000"/>
<rect x="285" y="452" width="12" height="5" fill="#000000" />
<rect x="305" y="453" width="1" height="4" fill="#000000"/>
<path d="M299,448h12v5h-12Z M300,449v3h10v-3Z" fill="#000" fill-rule="evenodd"/>
<rect x="319" y="447" width="1" height="9" fill="#000000"/>
<rect x="313" y="447" width="12" height="1" fill="#000000"/>
<rect x="333" y="448" width="1" height="4" fill="#000000"/>
<rect x="327" y="448" width="12" height="1" fill="#000000"/>
<rect x="347" y="448" width="1" height="4" fill="#000000"/>
<rect x="341" y="448" width="12" height="1" fill="#000000"/>
<rect x="361" y="444" width="1" height="8" fill="#000000"/>
<rect x="355" y="448" width="12" height="1" fill="#000000"/>
<path d="M369,440h12v10h-12Z M370,441v8h10v-8Z" fill="#000" fill-rule="evenodd"/>
<rect x="389" y="432" width="1" height="8" fill="#000000"/>
<rect x="383" y="436" width="12" height="3" fill="#000000" />
<rect x="403" y="432" width="1" height="12" fill="#000000"/>
<rect x="397" y="437" width="12" height="6" fill="#000000" />
<rect x="417" y="440" width="1" height="5" fill="#000000"/>
<rect x="411" y="440" width="12" height="4" fill="#000000" />
<path d="M426,436h12v9h-12Z M427,437v7h10v-7Z" fill="#000" fill-rule="evenodd"/>
<rect x="446" y="436" width="1" height="5" fill="#000000"/>
<rect x="440" y="436" width="12" height="4" fill="#000000" />
<rect x="460" y="432" width="1" height="5" fill="#000000"/>
<path d="M454,437h12v4h-12Z M455,438v2h10v-2Z" fill="#000" fill-rule="evenodd"/>
<rect x="474" y="432" width="1" height="8" fill="#000000"/>
<rect x="468" y="432" width="12" height="1" fill="#000000"/>
<rect x="488" y="432" width="1" height="8" fill="#000000"/>
<rect x="482" y="435" width="12" height="1" fill="#000000"/>
<rect x="502" y="435" width="1" height="5" fill="#000000"/>
<rect x="496" y="435" width="12" height="1" fill="#000000"/>
<rect x="516" y="435" width="1" height="5" fill="#000000"/>
<rect x="510" y="435" width="12" height="1" fill="#000000"/>
<rect x="530" y="437" width="1" height="3" fill="#000000"/>
<path d="M524,432h12v5h-12Z M525,433v3h10v-3Z" fill="#000" fill-rule="evenodd"/>
<rect x="544" y="412" width="1" height="4" fill="#000000"/>
<rect x="544" y="433" width="1" height="3" fill="#000000"/>
<path d="M538,416h12v17h-12Z M539,417v15h10v-15Z" fill="#000" fill-rule="evenodd"/>
<rect x="558" y="400" width="1" height="13" fill="#000000"/>
<rect x="552" y="412" width="12" height="1" fill="#000000"/>
<path d="M566,359h12v46h-12Z M567,360v44h10v-44Z" fill="#000" fill-rule="evenodd"/>
<rect x="586" y="332" width="1" height="7" fill="#000000"/>
<path d="M580,339h12v17h-12Z M581,340v15h10v-15Z" fill="#000" fill-rule="evenodd"/>
<rect x="600" y="332" width="1" height="23" fill="#000000"/>
<rect x="594" y="335" width="12" height="16" fill="#000000" />
<rect x="614" y="339" width="1" height="33" fill="#000000"/>
<rect x="608" y="346" width="12" height="1" fill="#000000"/>
<rect x="628" y="347" width="1" height="12" fill="#000000"/>
<rect x="622" y="351" width="12" height="4" fill="#000000" />
<rect x="642" y="355" width="1" height="25" fill="#000000"/>
<rect x="636" y="355" width="12" height="13" fill="#000000" />
<rect x="656" y="372" width="1" height="16" fill="#000000"/>
<rect x="650" y="372" width="12" height="8" fill="#000000" />
<rect x="670" y="381" width="1" height="7" fill="#000000"/>
<path d="M664,355h12v26h-12Z M665,356v24h10v-24Z" fill="#000" fill-rule="evenodd"/>
<rect x="684" y="355" width="1" height="7" fill="#000000"/>
<rect x="678" y="355" width="12" height="4" fill="#000000" />
<rect x="698" y="365" width="1" height="3" fill="#000000"/>
<path d="M692,359h12v6h-12Z M693,360v4h10v-4Z" fill="#000" fill-rule="evenodd"/>
<rect x="712" y="315" width="1" height="16" fill="#000000"/>
<path d="M706,331h12v13h-12Z M707,332v11h10v-11Z" fill="#000" fill-rule="evenodd"/>
<rect x="726" y="323" width="1" height="15" fill="#000000"/>
<rect x="720" y="327" width="12" height="4" fill="#000000" />
<rect x="740" y="331" width="1" height="24" fill="#000000"/>
<rect x="734" y="335" width="12" height="12" fill="#000000" />
<rect x="754" y="335" width="1" height="8" fill="#000000"/>
<path d="M748,343h12v6h-12Z M749,344v4h10v-4Z" fill="#000" fill-rule="evenodd"/>
<rect x="768" y="331" width="1" height="12" fill="#000000"/>
<rect x="762" y="338" width="12" height="1" fill="#000000"/>
<rect x="782" y="338" width="1" height="8" fill="#000000"/>
<rect x="776" y="338" width="12" height="1" fill="#000000"/>
<path d="M790,336h12v8h-12Z M791,337v6h10v-6Z" fill="#000" fill-rule="evenodd"/>
<rect x="810" y="335" width="1" height="8" fill="#000000"/>
<rect x="804" y="335" width="12" height="3" fill="#000000" />
<path d="M32.00,311.50L38.60,313.10L38.60,316.10L32.00,314.50ZM38.60,313.10L53.00,326.70L53.00,329.70L38.60,316.10ZM53.00,326.70L64.40,328.90L64.40,331.90L53.00,329.70ZM64.40,328.90L79.40,329.60L79.40,332.60L64.40,331.90ZM79.40,329.60L94.50,328.20L94.50,331.20L79.40,332.60ZM93.00,329.70L107.30,380.50L110.30,380.50L96.00,329.70ZM108.80,379.00L123.10,384.80L123.10,387.80L108.80,382.00ZM123.10,384.80L136.00,380.20L136.00,383.20L123.10,387.80ZM136.00,380.20L151.50,364.70L151.50,367.70L136.00,383.20ZM150.00,366.20L164.00,392.20L167.00,392.20L153.00,366.20ZM165.50,390.70L178.60,390.00L178.60,393.00L165.50,393.70ZM178.60,390.00L193.20,394.00L193.20,397.00L178.60,393.00ZM193.20,394.00L207.30,386.80L207.30,389.80L193.20,397.00ZM207.30,386.80L221.60,390.70L221.60,393.70L207.30,389.80ZM221.60,390.70L235.20,386.80L235.20,389.80L221.60,393.70ZM233.70,388.30L247.30,453.10L250.30,453.10L236.70,388.30ZM248.80,451.60L263.20,445.90L263.20,448.90L248.80,454.60ZM263.20,445.90L277.50,457.30L277.50,460.30L263.20,448.90ZM276.00,458.80L304.50,505.20L307.50,505.20L279.00,458.80ZM306.00,503.70L333.30,484.10L333.30,487.10L306.00,506.70ZM331.80,485.60L346.50,470.00L349.50,470.00L334.80,485.60ZM348.00,468.50L362.20,468.50L362.20,471.50L348.00,471.50ZM360.70,470.00L374.00,435.60L377.00,435.60L363.70,470.00ZM374.00,435.60L388.80,469.20L391.80,469.20L377.00,435.60ZM388.80,469.20L402.90,421.60L405.90,421.60L391.80,469.20ZM404.40,420.10L414.40,418.00L414.40,421.00L404.40,423.10ZM414.40,418.00L432.40,417.70L432.40,420.70L414.40,421.00ZM430.90,419.20L445.20,461.10L448.20,461.10L433.90,419.20ZM445.20,461.10L458.80,413.60L461.80,413.60L448.20,461.10ZM460.30,412.10L474.70,398.20L474.70,401.20L460.30,415.10ZM474.70,398.20L488.30,392.60L488.30,395.60L474.70,401.20ZM488.30,392.60L502.30,400.80L502.30,403.80L488.30,395.60ZM502.30,400.80L517.00,388.70L517.00,391.70L502.30,403.80ZM517.00,388.70L530.60,380.50L530.60,383.50L517.00,391.70ZM529.10,382.00L543.10,347.50L546.10,347.50L532.10,382.00ZM543.10,347.50L556.50,376.70L559.50,376.70L546.10,347.50ZM556.50,376.70L572.25,347.50L575.25,347.50L559.50,376.70ZM573.75,346.00L585.80,343.90L585.80,346.90L573.75,349.00ZM584.30,345.40L599.30,383.30L602.30,383.30L587.30,345.40ZM600.80,381.80L614.40,379.30L614.40,382.30L600.80,384.80ZM614.40,379.30L626.90,386.50L626.90,389.50L614.40,382.30ZM626.90,386.50L656.00,391.20L656.00,394.20L626.90,389.50ZM656.00,391.20L669.60,396.50L669.60,399.50L656.00,394.20ZM668.10,398.00L696.20,368.75L699.20,368.75L671.10,398.00ZM697.70,367.25L723.75,382.90L723.75,385.90L697.70,370.25ZM723.75,382.90L740.40,391.20L740.40,394.20L723.75,385.90ZM740.40,391.20L767.50,411.00L767.50,414.00L740.40,394.20ZM767.50,411.00L783.00,405.80L783.00,408.80L767.50,414.00ZM783.00,405.80L810.00,408.00L810.00,411.00L783.00,408.80ZM30.50,311.50h3v3h-3ZM37.10,313.10h3v3h-3ZM51.50,326.70h3v3h-3ZM62.90,328.90h3v3h-3ZM77.90,329.60h3v3h-3ZM93.00,328.20h3v3h-3ZM107.30,379.00h3v3h-3ZM121.60,384.80h3v3h-3ZM134.50,380.20h3v3h-3ZM150.00,364.70h3v3h-3ZM164.00,390.70h3v3h-3ZM177.10,390.00h3v3h-3ZM191.70,394.00h3v3h-3ZM205.80,386.80h3v3h-3ZM220.10,390.70h3v3h-3ZM233.70,386.80h3v3h-3ZM247.30,451.60h3v3h-3ZM261.70,445.90h3v3h-3ZM276.00,457.30h3v3h-3ZM304.50,503.70h3v3h-3ZM331.80,484.10h3v3h-3ZM346.50,468.50h3v3h-3ZM360.70,468.50h3v3h-3ZM374.00,434.10h3v3h-3ZM388.80,467.70h3v3h-3ZM402.90,420.10h3v3h-3ZM412.90,418.00h3v3h-3ZM430.90,417.70h3v3h-3ZM445.20,459.60h3v3h-3ZM458.80,412.10h3v3h-3ZM473.20,398.20h3v3h-3ZM486.80,392.60h3v3h-3ZM500.80,400.80h3v3h-3ZM515.50,388.70h3v3h-3ZM529.10,380.50h3v3h-3ZM543.10,346.00h3v3h-3ZM556.50,375.20h3v3h-3ZM572.25,346.00h3v3h-3ZM584.30,343.90h3v3h-3ZM599.30,381.80h3v3h-3ZM612.90,379.30h3v3h-3ZM625.40,386.50h3v3h-3ZM654.50,391.20h3v3h-3ZM668.10,396.50h3v3h-3ZM696.20,367.25h3v3h-3ZM722.25,382.90h3v3h-3ZM738.90,391.20h3v3h-3ZM766.00,411.00h3v3h-3ZM781.50,405.80h3v3h-3ZM808.50,408.00h3v3h-3Z" fill="#E3E3F8" shape-rendering="crispEdges"/>
<path d="M32.00,499.00L151.40,499.00L151.40,501.00L32.00,501.00ZM151.40,499.00L180.00,497.00L180.00,499.00L151.40,501.00ZM180.00,497.00L193.50,496.00L193.50,498.00L180.00,499.00ZM193.50,496.00L210.00,494.00L210.00,496.00L193.50,498.00ZM210.00,494.00L250.00,490.00L250.00,492.00L210.00,496.00ZM250.00,490.00L263.50,489.00L263.50,491.00L250.00,492.00ZM263.50,489.00L280.00,487.00L280.00,489.00L263.50,491.00ZM280.00,487.00L333.00,483.00L333.00,485.00L280.00,489.00ZM333.00,483.00L390.00,479.00L390.00,481.00L333.00,485.00ZM390.00,479.00L404.50,477.00L404.50,479.00L390.00,481.00ZM404.50,477.00L420.00,476.00L420.00,478.00L404.50,479.00ZM420.00,476.00L446.50,473.00L446.50,475.00L420.00,478.00ZM446.50,473.00L460.00,472.00L460.00,474.00L446.50,475.00ZM460.00,472.00L474.00,471.00L474.00,473.00L460.00,474.00ZM474.00,471.00L488.50,469.00L488.50,471.00L474.00,473.00ZM488.50,469.00L502.50,469.00L502.50,471.00L488.50,471.00ZM502.50,469.00L516.00,467.00L516.00,469.00L502.50,471.00ZM516.00,467.00L544.60,465.00L544.60,467.00L516.00,469.00ZM544.60,465.00L560.00,463.00L560.00,465.00L544.60,467.00ZM560.00,463.00L572.50,461.00L572.50,463.00L560.00,465.00ZM572.50,461.00L590.00,457.00L590.00,459.00L572.50,463.00ZM590.00,457.00L642.50,446.00L642.50,448.00L590.00,459.00ZM642.50,446.00L712.50,433.00L712.50,435.00L642.50,448.00ZM712.50,433.00L782.50,417.50L782.50,419.50L712.50,435.00ZM782.50,417.50L810.00,412.00L810.00,414.00L782.50,419.50ZM31.00,499.00h2v2h-2ZM150.40,499.00h2v2h-2ZM179.00,497.00h2v2h-2ZM192.50,496.00h2v2h-2ZM209.00,494.00h2v2h-2ZM249.00,490.00h2v2h-2ZM262.50,489.00h2v2h-2ZM279.00,487.00h2v2h-2ZM332.00,483.00h2v2h-2ZM389.00,479.00h2v2h-2ZM403.50,477.00h2v2h-2ZM419.00,476.00h2v2h-2ZM445.50,473.00h2v2h-2ZM459.00,472.00h2v2h-2ZM473.00,471.00h2v2h-2ZM487.50,469.00h2v2h-2ZM501.50,469.00h2v2h-2ZM515.00,467.00h2v2h-2ZM543.60,465.00h2v2h-2ZM559.00,463.00h2v2h-2ZM571.50,461.00h2v2h-2ZM589.00,457.00h2v2h-2ZM641.50,446.00h2v2h-2ZM711.50,433.00h2v2h-2ZM781.50,417.50h2v2h-2ZM809.00,412.00h2v2h-2Z" fill="#008000" shape-rendering="crispEdges"/>
<path d="M32.00,493.00L150.60,493.00L150.60,495.00L32.00,495.00ZM150.60,493.00L180.00,487.00L180.00,489.00L150.60,495.00ZM180.00,487.00L193.50,485.00L193.50,487.00L180.00,489.00ZM193.50,485.00L210.00,482.00L210.00,484.00L193.50,487.00ZM210.00,482.00L250.00,476.00L250.00,478.00L210.00,484.00ZM250.00,476.00L263.50,476.00L263.50,478.00L250.00,478.00ZM263.50,476.00L280.00,473.00L280.00,475.00L263.50,478.00ZM280.00,473.00L333.30,464.00L333.30,466.00L280.00,475.00ZM333.30,464.00L390.00,454.00L390.00,456.00L333.30,466.00ZM390.00,454.00L404.50,453.00L404.50,455.00L390.00,456.00ZM404.50,453.00L420.00,450.00L420.00,452.00L404.50,455.00ZM420.00,450.00L446.50,447.70L446.50,449.70L420.00,452.00ZM446.50,447.70L490.00,444.00L490.00,446.00L446.50,449.70ZM490.00,444.00L516.00,444.00L516.00,446.00L490.00,446.00ZM516.00,444.00L544.60,440.50L544.60,442.50L516.00,446.00ZM544.60,440.50L560.00,437.00L560.00,439.00L544.60,442.50ZM560.00,437.00L572.50,433.00L572.50,435.00L560.00,439.00ZM572.50,433.00L590.00,427.50L590.00,429.50L572.50,435.00ZM590.00,427.50L642.50,410.00L642.50,412.00L590.00,429.50ZM642.50,410.00L712.50,389.00L712.50,391.00L642.50,412.00ZM712.50,389.00L782.50,364.00L782.50,366.00L712.50,391.00ZM782.50,364.00L810.00,355.00L810.00,357.00L782.50,366.00ZM31.00,493.00h2v2h-2ZM149.60,493.00h2v2h-2ZM179.00,487.00h2v2h-2ZM192.50,485.00h2v2h-2ZM209.00,482.00h2v2h-2ZM249.00,476.00h2v2h-2ZM262.50,476.00h2v2h-2ZM279.00,473.00h2v2h-2ZM332.30,464.00h2v2h-2ZM389.00,454.00h2v2h-2ZM403.50,453.00h2v2h-2ZM419.00,450.00h2v2h-2ZM445.50,447.70h2v2h-2ZM489.00,444.00h2v2h-2ZM515.00,444.00h2v2h-2ZM543.60,440.50h2v2h-2ZM559.00,437.00h2v2h-2ZM571.50,433.00h2v2h-2ZM589.00,427.50h2v2h-2ZM641.50,410.00h2v2h-2ZM711.50,389.00h2v2h-2ZM781.50,364.00h2v2h-2ZM809.00,355.00h2v2h-2Z" fill="#FF0000" shape-rendering="crispEdges"/>
<path d="M586.00,331.00L867.00,324.00L867.00,326.00L586.00,333.00ZM585.00,331.00h2v2h-2ZM866.00,324.00h2v2h-2Z" fill="#000080" shape-rendering="crispEdges"/>
<path d="M544.60,437.80L920.50,296.00L920.50,298.00L544.60,439.80ZM543.60,437.80h2v2h-2ZM919.50,296.00h2v2h-2Z" fill="#000080" shape-rendering="crispEdges"/>
<rect x="32" y="484" width="939" height="1" fill="#0000FF"/>
<rect x="39" y="669" width="1" height="18" fill="#0000FF"/>
<rect x="53" y="673" width="1" height="14" fill="#0000FF"/>
<rect x="67" y="674" width="1" height="13" fill="#0000FF"/>
<rect x="81" y="674" width="1" height="13" fill="#0000FF"/>
<rect x="95" y="650" width="1" height="37" fill="#0000FF"/>
<rect x="109" y="591" width="1" height="96" fill="#0000FF"/>
<rect x="123" y="645" width="1" height="42" fill="#0000FF"/>
<rect x="137" y="644" width="1" height="43" fill="#0000FF"/>
<rect x="151" y="643" width="1" height="44" fill="#0000FF"/>
<rect x="165" y="626" width="1" height="61" fill="#0000FF"/>
<rect x="179" y="681" width="1" height="6" fill="#0000FF"/>
<rect x="193" y="622" width="1" height="65" fill="#0000FF"/>
<rect x="207" y="666" width="1" height="21" fill="#0000FF"/>
<rect x="221" y="667" width="1" height="20" fill="#0000FF"/>
<rect x="235" y="676" width="1" height="11" fill="#0000FF"/>
<rect x="249" y="685" width="1" height="2" fill="#0000FF"/>
<rect x="263" y="670" width="1" height="17" fill="#0000FF"/>
<rect x="277" y="682" width="1" height="5" fill="#0000FF"/>
<rect x="305" y="671" width="1" height="16" fill="#0000FF"/>
<rect x="319" y="674" width="1" height="13" fill="#0000FF"/>
<rect x="333" y="685" width="1" height="2" fill="#0000FF"/>
<rect x="361" y="670" width="1" height="17" fill="#0000FF"/>
<rect x="375" y="619" width="1" height="68" fill="#0000FF"/>
<rect x="389" y="647" width="1" height="40" fill="#0000FF"/>
<rect x="403" y="678" width="1" height="9" fill="#0000FF"/>
<rect x="417" y="684" width="1" height="3" fill="#0000FF"/>
<rect x="432" y="677" width="1" height="10" fill="#0000FF"/>
<rect x="446" y="674" width="1" height="13" fill="#0000FF"/>
<rect x="460" y="665" width="1" height="22" fill="#0000FF"/>
<rect x="474" y="673" width="1" height="14" fill="#0000FF"/>
<rect x="488" y="662" width="1" height="25" fill="#0000FF"/>
<rect x="502" y="680" width="1" height="7" fill="#0000FF"/>
<rect x="516" y="685" width="1" height="2" fill="#0000FF"/>
<rect x="530" y="662" width="1" height="25" fill="#0000FF"/>
<rect x="544" y="542" width="1" height="145" fill="#0000FF"/>
<rect x="558" y="600" width="1" height="87" fill="#0000FF"/>
<rect x="572" y="600" width="1" height="87" fill="#0000FF"/>
<rect x="586" y="551" width="1" height="136" fill="#0000FF"/>
<rect x="600" y="613" width="1" height="74" fill="#0000FF"/>
<rect x="614" y="565" width="1" height="122" fill="#0000FF"/>
<rect x="628" y="669" width="1" height="18" fill="#0000FF"/>
<rect x="642" y="667" width="1" height="20" fill="#0000FF"/>
<rect x="656" y="665" width="1" height="22" fill="#0000FF"/>
<rect x="670" y="645" width="1" height="42" fill="#0000FF"/>
<rect x="684" y="680" width="1" height="7" fill="#0000FF"/>
<rect x="698" y="685" width="1" height="2" fill="#0000FF"/>
<rect x="712" y="620" width="1" height="67" fill="#0000FF"/>
<rect x="726" y="617" width="1" height="70" fill="#0000FF"/>
<rect x="740" y="621" width="1" height="66" fill="#0000FF"/>
<rect x="754" y="628" width="1" height="59" fill="#0000FF"/>
<rect x="768" y="658" width="1" height="29" fill="#0000FF"/>
<rect x="782" y="684" width="1" height="3" fill="#0000FF"/>
<rect x="796" y="677" width="1" height="10" fill="#0000FF"/>
<rect x="810" y="674" width="1" height="13" fill="#0000FF"/>
<defs>
<linearGradient id="dlgt" x1="0" y1="0" x2="0" y2="1">
<stop offset="0" stop-color="#0A5FE6"/><stop offset="0.15" stop-color="#0058EE"/><stop offset="0.5" stop-color="#0A60EA"/><stop offset="1" stop-color="#0446D4"/></linearGradient>
<linearGradient id="btng" x1="0" y1="0" x2="0" y2="1">
<stop offset="0" stop-color="#FFFFFF"/><stop offset="0.7" stop-color="#F0F0EA"/><stop offset="1" stop-color="#D6D0C5"/></linearGradient>
<linearGradient id="clsg" x1="0" y1="0" x2="1" y2="1">
<stop offset="0" stop-color="#E8A088"/><stop offset="0.5" stop-color="#D85838"/><stop offset="1" stop-color="#C03018"/></linearGradient>
</defs>
<rect x="432" y="592" width="142" height="54" rx="2" fill="#0842C8"/>
<rect x="433" y="593" width="140" height="21" fill="url(#dlgt)"/>
<rect x="436" y="614" width="134" height="28" fill="#ECE9D8" />
<text x="436" y="610" font-size="11.5" fill="#FFFFFF" font-weight="bold" text-anchor="start" textLength="61" lengthAdjust="spacingAndGlyphs" >Full Screen</text>
<rect x="555.5" y="598.5" width="12" height="12" rx="2" fill="url(#clsg)" stroke="#FFFFFF"/>
<path d="M558.5,601.5 L564.5,607.5 M564.5,601.5 L558.5,607.5" stroke="#FFFFFF" stroke-width="2"/>
<rect x="443.5" y="618.5" width="119" height="19" rx="3" fill="url(#btng)" stroke="#003C74"/>
<text x="446" y="633" font-size="13.5" fill="#000000" font-weight="bold" text-anchor="start" textLength="114" lengthAdjust="spacingAndGlyphs" >Close Full Screen</text>
</svg></body></html>
